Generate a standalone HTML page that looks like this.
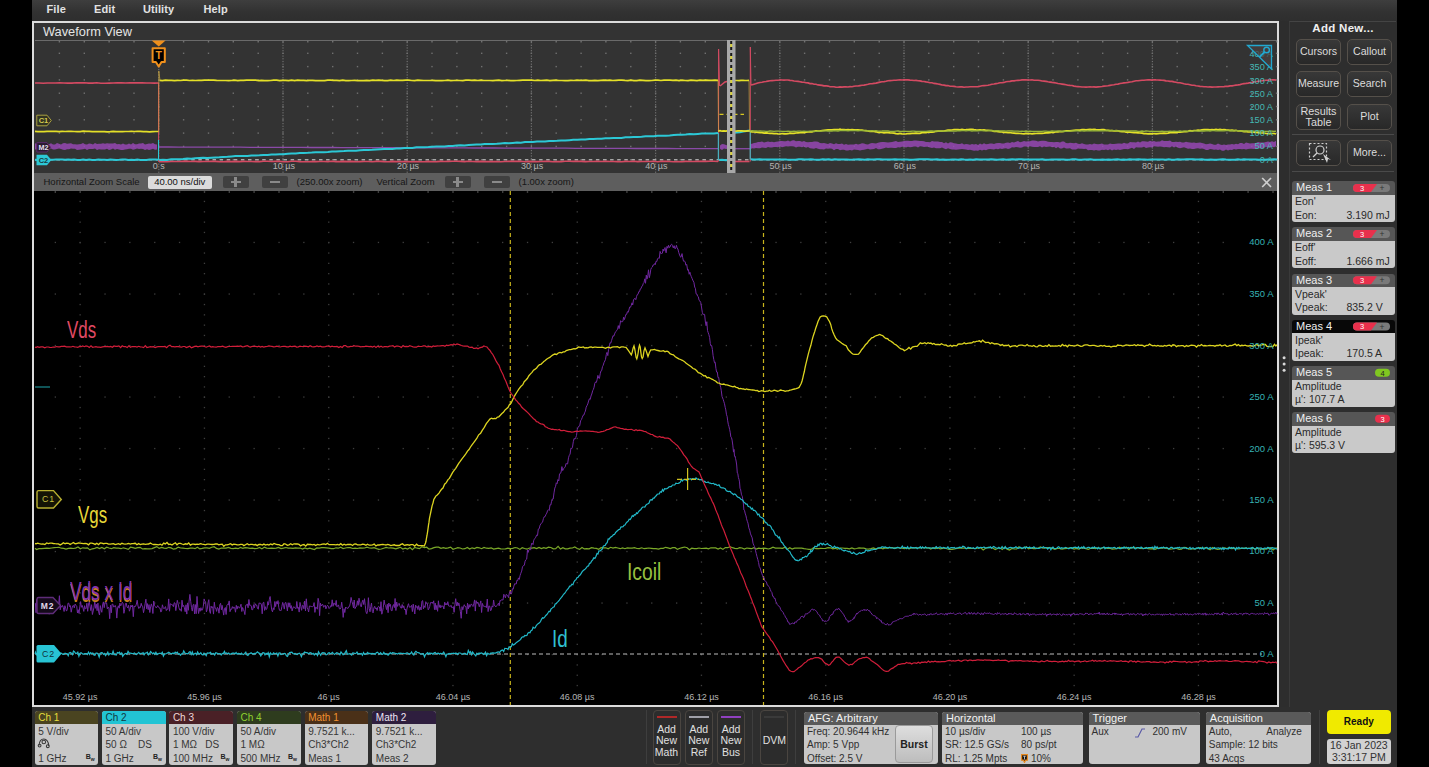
<!DOCTYPE html>
<html><head><meta charset="utf-8">
<style>
*{margin:0;padding:0;box-sizing:border-box}
html,body{width:1429px;height:767px;overflow:hidden;background:#000;font-family:"Liberation Sans",sans-serif;-webkit-font-smoothing:antialiased}
.a{position:absolute}
#app{position:absolute;left:32px;top:0;width:1365px;height:767px;background:#2e2e2e}
#menu{position:absolute;left:32px;top:0;width:1365px;height:21px;background:linear-gradient(#3e3e3e,#323232 55%,#2e2e2e)}
#menu span{position:absolute;top:3px;font-size:11px;font-weight:bold;color:#e2e2e2;letter-spacing:0.1px}
#frame{position:absolute;left:32px;top:20.5px;width:1247px;height:686.5px;border:2.6px solid #dcdcdc;background:#000}
#ovbg{position:absolute;left:34px;top:22.8px;width:1243px;height:150.2px;background:#333}
#zbar{position:absolute;left:34px;top:173px;width:1243px;height:18px;background:#5e5e5e}
.zt{position:absolute;top:176px;font-size:9.5px;color:#161616}
.zbtn{position:absolute;top:175.5px;width:26px;height:12.5px;background:#404040;border-radius:2px}
svg{position:absolute;left:0;top:0}
svg text{font-family:"Liberation Sans",sans-serif}
.lbl{position:absolute;font-size:9px;color:#b4b4b4;white-space:nowrap;transform:translateX(-50%)}
.ylbl{position:absolute;right:155.5px;font-size:9.5px;color:#36b2b4;white-space:nowrap;line-height:10px}
.ovl{position:absolute;right:156px;font-size:9.2px;color:#44b8b4;white-space:nowrap;line-height:10px}
.big{position:absolute;font-size:23.5px;transform-origin:0 0;transform:scaleX(0.72);white-space:nowrap;line-height:23px}
#rp{position:absolute;left:1289px;top:21px;width:107px;height:686px;background:#2e2e2e;border-left:1px solid #3a3a3a;border-top:1px solid #444}
.rbtn{position:absolute;width:45px;height:26px;border-radius:5px;border:1px solid #55504a;background:linear-gradient(#383838,#282828);color:#dcdcdc;font-size:10.6px;text-align:center;line-height:23px}
.meas{position:absolute;left:1292px;width:102.5px;height:41px}
.mh{position:absolute;left:0;top:0;width:100%;height:13.5px;background:#565656;border-radius:3px 3px 0 0;color:#f0f0f0;font-size:11px;line-height:13px;padding-left:4px}
.mb{position:absolute;left:0;top:13.5px;width:100%;height:27.5px;background:#c9c9c9;border-radius:0 0 3px 3px;color:#2a2a2a;font-size:10.5px;line-height:13.4px;padding-left:3px;padding-top:0.5px}
.mb .v{position:absolute;left:54.5px}
.badge{position:absolute;top:2.5px;height:8.5px;border-radius:4px}
.card{position:absolute;top:711px;height:53.5px;border-radius:3px;background:#c8c8c8;overflow:hidden}
.ch{position:absolute;left:0;top:0;width:100%;height:13px;font-size:10px;line-height:13px;padding-left:3.5px}
.cb{position:absolute;left:3.5px;top:13.5px;font-size:10px;line-height:13.6px;color:#363636;white-space:nowrap}
.bw{position:absolute;font-size:7px;font-weight:bold;color:#222}
.wbtn{position:absolute;top:709.5px;width:28px;height:55px;border-radius:4px;border:1px solid #4a4540;background:#2c2c2c;color:#e0e0e0;font-size:10.5px;line-height:11.5px;text-align:center;padding-top:13px}
.wbtn i{position:absolute;left:3px;right:3px;top:5px;height:2px}
.ic{position:absolute;top:712px;height:52px;border-radius:3px;background:#c8c8c8;overflow:hidden}
.ih{position:absolute;left:0;top:0;width:100%;height:13px;background:#5a5a5a;color:#f2f2f2;font-size:11px;line-height:13px;padding-left:4px}
.ib{position:absolute;top:13px;left:3px;font-size:10px;line-height:13.4px;color:#303030;white-space:nowrap}
</style></head><body>
<div id="app"></div>
<div id="menu"><span style="left:14.5px">File</span><span style="left:62px">Edit</span><span style="left:111px">Utility</span><span style="left:171.5px">Help</span></div>
<div id="frame"></div>
<div id="ovbg"></div>
<div class="a" style="left:43px;top:23.5px;font-size:12.8px;color:#e4e4e4">Waveform View</div>
<div class="a" style="left:34.5px;top:40px;width:1242px;height:1px;background:#6a6a6a"></div>
<div id="zbar"></div>
<div class="zt" style="left:43.5px">Horizontal Zoom Scale</div>
<div class="a" style="left:147.5px;top:176px;width:64.5px;height:12.5px;background:#dcdcdc;border-radius:2px;font-size:9.5px;color:#111;text-align:center;line-height:12.5px">40.00 ns/div</div>
<div class="zbtn" style="left:222.5px"></div><div class="a" style="left:230.5px;top:180.7px;width:10px;height:2.4px;background:#8a8a8a"></div><div class="a" style="left:234.3px;top:176.8px;width:2.4px;height:10px;background:#8a8a8a"></div>
<div class="zbtn" style="left:262px"></div><div class="a" style="left:270px;top:180.7px;width:10px;height:2.4px;background:#8a8a8a"></div>
<div class="zt" style="left:296.5px">(250.00x zoom)</div>
<div class="zt" style="left:376.5px">Vertical Zoom</div>
<div class="zbtn" style="left:444.5px"></div><div class="a" style="left:452.5px;top:180.7px;width:10px;height:2.4px;background:#8a8a8a"></div><div class="a" style="left:456.3px;top:176.8px;width:2.4px;height:10px;background:#8a8a8a"></div>
<div class="zbtn" style="left:484px"></div><div class="a" style="left:492px;top:180.7px;width:10px;height:2.4px;background:#8a8a8a"></div>
<div class="zt" style="left:518.5px">(1.00x zoom)</div>
<svg style="left:1258px;top:174px;position:absolute" width="18" height="16"><path d="M4.2 4 L13 13 M13 4 L4.2 13" stroke="#cfcfcf" stroke-width="1.7"/></svg>

<svg width="1429" height="767" viewBox="0 0 1429 767">
 <g fill="#707070"><rect x="158.2" y="42.0" width="1.2" height="1.2"/><rect x="158.2" y="44.7" width="1.2" height="1.2"/><rect x="158.2" y="47.4" width="1.2" height="1.2"/><rect x="158.2" y="50.1" width="1.2" height="1.2"/><rect x="158.2" y="52.8" width="1.2" height="1.2"/><rect x="158.2" y="55.5" width="1.2" height="1.2"/><rect x="158.2" y="58.2" width="1.2" height="1.2"/><rect x="158.2" y="60.9" width="1.2" height="1.2"/><rect x="158.2" y="63.6" width="1.2" height="1.2"/><rect x="158.2" y="66.3" width="1.2" height="1.2"/><rect x="158.2" y="69.0" width="1.2" height="1.2"/><rect x="158.2" y="71.7" width="1.2" height="1.2"/><rect x="158.2" y="74.4" width="1.2" height="1.2"/><rect x="158.2" y="77.1" width="1.2" height="1.2"/><rect x="158.2" y="79.8" width="1.2" height="1.2"/><rect x="158.2" y="82.5" width="1.2" height="1.2"/><rect x="158.2" y="85.2" width="1.2" height="1.2"/><rect x="158.2" y="87.9" width="1.2" height="1.2"/><rect x="158.2" y="90.6" width="1.2" height="1.2"/><rect x="158.2" y="93.3" width="1.2" height="1.2"/><rect x="158.2" y="96.0" width="1.2" height="1.2"/><rect x="158.2" y="98.7" width="1.2" height="1.2"/><rect x="158.2" y="101.4" width="1.2" height="1.2"/><rect x="158.2" y="104.1" width="1.2" height="1.2"/><rect x="158.2" y="106.8" width="1.2" height="1.2"/><rect x="158.2" y="109.5" width="1.2" height="1.2"/><rect x="158.2" y="112.2" width="1.2" height="1.2"/><rect x="158.2" y="114.9" width="1.2" height="1.2"/><rect x="158.2" y="117.6" width="1.2" height="1.2"/><rect x="158.2" y="120.3" width="1.2" height="1.2"/><rect x="158.2" y="123.0" width="1.2" height="1.2"/><rect x="158.2" y="125.7" width="1.2" height="1.2"/><rect x="158.2" y="128.4" width="1.2" height="1.2"/><rect x="158.2" y="131.1" width="1.2" height="1.2"/><rect x="158.2" y="133.8" width="1.2" height="1.2"/><rect x="158.2" y="136.5" width="1.2" height="1.2"/><rect x="158.2" y="139.2" width="1.2" height="1.2"/><rect x="158.2" y="141.9" width="1.2" height="1.2"/><rect x="158.2" y="144.6" width="1.2" height="1.2"/><rect x="158.2" y="147.3" width="1.2" height="1.2"/><rect x="158.2" y="150.0" width="1.2" height="1.2"/><rect x="158.2" y="152.7" width="1.2" height="1.2"/><rect x="158.2" y="155.4" width="1.2" height="1.2"/><rect x="158.2" y="158.1" width="1.2" height="1.2"/><rect x="158.2" y="160.8" width="1.2" height="1.2"/><rect x="158.2" y="163.5" width="1.2" height="1.2"/><rect x="158.2" y="166.2" width="1.2" height="1.2"/><rect x="158.2" y="168.9" width="1.2" height="1.2"/><rect x="158.2" y="171.6" width="1.2" height="1.2"/><rect x="282.4" y="42.0" width="1.2" height="1.2"/><rect x="282.4" y="44.7" width="1.2" height="1.2"/><rect x="282.4" y="47.4" width="1.2" height="1.2"/><rect x="282.4" y="50.1" width="1.2" height="1.2"/><rect x="282.4" y="52.8" width="1.2" height="1.2"/><rect x="282.4" y="55.5" width="1.2" height="1.2"/><rect x="282.4" y="58.2" width="1.2" height="1.2"/><rect x="282.4" y="60.9" width="1.2" height="1.2"/><rect x="282.4" y="63.6" width="1.2" height="1.2"/><rect x="282.4" y="66.3" width="1.2" height="1.2"/><rect x="282.4" y="69.0" width="1.2" height="1.2"/><rect x="282.4" y="71.7" width="1.2" height="1.2"/><rect x="282.4" y="74.4" width="1.2" height="1.2"/><rect x="282.4" y="77.1" width="1.2" height="1.2"/><rect x="282.4" y="79.8" width="1.2" height="1.2"/><rect x="282.4" y="82.5" width="1.2" height="1.2"/><rect x="282.4" y="85.2" width="1.2" height="1.2"/><rect x="282.4" y="87.9" width="1.2" height="1.2"/><rect x="282.4" y="90.6" width="1.2" height="1.2"/><rect x="282.4" y="93.3" width="1.2" height="1.2"/><rect x="282.4" y="96.0" width="1.2" height="1.2"/><rect x="282.4" y="98.7" width="1.2" height="1.2"/><rect x="282.4" y="101.4" width="1.2" height="1.2"/><rect x="282.4" y="104.1" width="1.2" height="1.2"/><rect x="282.4" y="106.8" width="1.2" height="1.2"/><rect x="282.4" y="109.5" width="1.2" height="1.2"/><rect x="282.4" y="112.2" width="1.2" height="1.2"/><rect x="282.4" y="114.9" width="1.2" height="1.2"/><rect x="282.4" y="117.6" width="1.2" height="1.2"/><rect x="282.4" y="120.3" width="1.2" height="1.2"/><rect x="282.4" y="123.0" width="1.2" height="1.2"/><rect x="282.4" y="125.7" width="1.2" height="1.2"/><rect x="282.4" y="128.4" width="1.2" height="1.2"/><rect x="282.4" y="131.1" width="1.2" height="1.2"/><rect x="282.4" y="133.8" width="1.2" height="1.2"/><rect x="282.4" y="136.5" width="1.2" height="1.2"/><rect x="282.4" y="139.2" width="1.2" height="1.2"/><rect x="282.4" y="141.9" width="1.2" height="1.2"/><rect x="282.4" y="144.6" width="1.2" height="1.2"/><rect x="282.4" y="147.3" width="1.2" height="1.2"/><rect x="282.4" y="150.0" width="1.2" height="1.2"/><rect x="282.4" y="152.7" width="1.2" height="1.2"/><rect x="282.4" y="155.4" width="1.2" height="1.2"/><rect x="282.4" y="158.1" width="1.2" height="1.2"/><rect x="282.4" y="160.8" width="1.2" height="1.2"/><rect x="282.4" y="163.5" width="1.2" height="1.2"/><rect x="282.4" y="166.2" width="1.2" height="1.2"/><rect x="282.4" y="168.9" width="1.2" height="1.2"/><rect x="282.4" y="171.6" width="1.2" height="1.2"/><rect x="406.6" y="42.0" width="1.2" height="1.2"/><rect x="406.6" y="44.7" width="1.2" height="1.2"/><rect x="406.6" y="47.4" width="1.2" height="1.2"/><rect x="406.6" y="50.1" width="1.2" height="1.2"/><rect x="406.6" y="52.8" width="1.2" height="1.2"/><rect x="406.6" y="55.5" width="1.2" height="1.2"/><rect x="406.6" y="58.2" width="1.2" height="1.2"/><rect x="406.6" y="60.9" width="1.2" height="1.2"/><rect x="406.6" y="63.6" width="1.2" height="1.2"/><rect x="406.6" y="66.3" width="1.2" height="1.2"/><rect x="406.6" y="69.0" width="1.2" height="1.2"/><rect x="406.6" y="71.7" width="1.2" height="1.2"/><rect x="406.6" y="74.4" width="1.2" height="1.2"/><rect x="406.6" y="77.1" width="1.2" height="1.2"/><rect x="406.6" y="79.8" width="1.2" height="1.2"/><rect x="406.6" y="82.5" width="1.2" height="1.2"/><rect x="406.6" y="85.2" width="1.2" height="1.2"/><rect x="406.6" y="87.9" width="1.2" height="1.2"/><rect x="406.6" y="90.6" width="1.2" height="1.2"/><rect x="406.6" y="93.3" width="1.2" height="1.2"/><rect x="406.6" y="96.0" width="1.2" height="1.2"/><rect x="406.6" y="98.7" width="1.2" height="1.2"/><rect x="406.6" y="101.4" width="1.2" height="1.2"/><rect x="406.6" y="104.1" width="1.2" height="1.2"/><rect x="406.6" y="106.8" width="1.2" height="1.2"/><rect x="406.6" y="109.5" width="1.2" height="1.2"/><rect x="406.6" y="112.2" width="1.2" height="1.2"/><rect x="406.6" y="114.9" width="1.2" height="1.2"/><rect x="406.6" y="117.6" width="1.2" height="1.2"/><rect x="406.6" y="120.3" width="1.2" height="1.2"/><rect x="406.6" y="123.0" width="1.2" height="1.2"/><rect x="406.6" y="125.7" width="1.2" height="1.2"/><rect x="406.6" y="128.4" width="1.2" height="1.2"/><rect x="406.6" y="131.1" width="1.2" height="1.2"/><rect x="406.6" y="133.8" width="1.2" height="1.2"/><rect x="406.6" y="136.5" width="1.2" height="1.2"/><rect x="406.6" y="139.2" width="1.2" height="1.2"/><rect x="406.6" y="141.9" width="1.2" height="1.2"/><rect x="406.6" y="144.6" width="1.2" height="1.2"/><rect x="406.6" y="147.3" width="1.2" height="1.2"/><rect x="406.6" y="150.0" width="1.2" height="1.2"/><rect x="406.6" y="152.7" width="1.2" height="1.2"/><rect x="406.6" y="155.4" width="1.2" height="1.2"/><rect x="406.6" y="158.1" width="1.2" height="1.2"/><rect x="406.6" y="160.8" width="1.2" height="1.2"/><rect x="406.6" y="163.5" width="1.2" height="1.2"/><rect x="406.6" y="166.2" width="1.2" height="1.2"/><rect x="406.6" y="168.9" width="1.2" height="1.2"/><rect x="406.6" y="171.6" width="1.2" height="1.2"/><rect x="530.8" y="42.0" width="1.2" height="1.2"/><rect x="530.8" y="44.7" width="1.2" height="1.2"/><rect x="530.8" y="47.4" width="1.2" height="1.2"/><rect x="530.8" y="50.1" width="1.2" height="1.2"/><rect x="530.8" y="52.8" width="1.2" height="1.2"/><rect x="530.8" y="55.5" width="1.2" height="1.2"/><rect x="530.8" y="58.2" width="1.2" height="1.2"/><rect x="530.8" y="60.9" width="1.2" height="1.2"/><rect x="530.8" y="63.6" width="1.2" height="1.2"/><rect x="530.8" y="66.3" width="1.2" height="1.2"/><rect x="530.8" y="69.0" width="1.2" height="1.2"/><rect x="530.8" y="71.7" width="1.2" height="1.2"/><rect x="530.8" y="74.4" width="1.2" height="1.2"/><rect x="530.8" y="77.1" width="1.2" height="1.2"/><rect x="530.8" y="79.8" width="1.2" height="1.2"/><rect x="530.8" y="82.5" width="1.2" height="1.2"/><rect x="530.8" y="85.2" width="1.2" height="1.2"/><rect x="530.8" y="87.9" width="1.2" height="1.2"/><rect x="530.8" y="90.6" width="1.2" height="1.2"/><rect x="530.8" y="93.3" width="1.2" height="1.2"/><rect x="530.8" y="96.0" width="1.2" height="1.2"/><rect x="530.8" y="98.7" width="1.2" height="1.2"/><rect x="530.8" y="101.4" width="1.2" height="1.2"/><rect x="530.8" y="104.1" width="1.2" height="1.2"/><rect x="530.8" y="106.8" width="1.2" height="1.2"/><rect x="530.8" y="109.5" width="1.2" height="1.2"/><rect x="530.8" y="112.2" width="1.2" height="1.2"/><rect x="530.8" y="114.9" width="1.2" height="1.2"/><rect x="530.8" y="117.6" width="1.2" height="1.2"/><rect x="530.8" y="120.3" width="1.2" height="1.2"/><rect x="530.8" y="123.0" width="1.2" height="1.2"/><rect x="530.8" y="125.7" width="1.2" height="1.2"/><rect x="530.8" y="128.4" width="1.2" height="1.2"/><rect x="530.8" y="131.1" width="1.2" height="1.2"/><rect x="530.8" y="133.8" width="1.2" height="1.2"/><rect x="530.8" y="136.5" width="1.2" height="1.2"/><rect x="530.8" y="139.2" width="1.2" height="1.2"/><rect x="530.8" y="141.9" width="1.2" height="1.2"/><rect x="530.8" y="144.6" width="1.2" height="1.2"/><rect x="530.8" y="147.3" width="1.2" height="1.2"/><rect x="530.8" y="150.0" width="1.2" height="1.2"/><rect x="530.8" y="152.7" width="1.2" height="1.2"/><rect x="530.8" y="155.4" width="1.2" height="1.2"/><rect x="530.8" y="158.1" width="1.2" height="1.2"/><rect x="530.8" y="160.8" width="1.2" height="1.2"/><rect x="530.8" y="163.5" width="1.2" height="1.2"/><rect x="530.8" y="166.2" width="1.2" height="1.2"/><rect x="530.8" y="168.9" width="1.2" height="1.2"/><rect x="530.8" y="171.6" width="1.2" height="1.2"/><rect x="655.0" y="42.0" width="1.2" height="1.2"/><rect x="655.0" y="44.7" width="1.2" height="1.2"/><rect x="655.0" y="47.4" width="1.2" height="1.2"/><rect x="655.0" y="50.1" width="1.2" height="1.2"/><rect x="655.0" y="52.8" width="1.2" height="1.2"/><rect x="655.0" y="55.5" width="1.2" height="1.2"/><rect x="655.0" y="58.2" width="1.2" height="1.2"/><rect x="655.0" y="60.9" width="1.2" height="1.2"/><rect x="655.0" y="63.6" width="1.2" height="1.2"/><rect x="655.0" y="66.3" width="1.2" height="1.2"/><rect x="655.0" y="69.0" width="1.2" height="1.2"/><rect x="655.0" y="71.7" width="1.2" height="1.2"/><rect x="655.0" y="74.4" width="1.2" height="1.2"/><rect x="655.0" y="77.1" width="1.2" height="1.2"/><rect x="655.0" y="79.8" width="1.2" height="1.2"/><rect x="655.0" y="82.5" width="1.2" height="1.2"/><rect x="655.0" y="85.2" width="1.2" height="1.2"/><rect x="655.0" y="87.9" width="1.2" height="1.2"/><rect x="655.0" y="90.6" width="1.2" height="1.2"/><rect x="655.0" y="93.3" width="1.2" height="1.2"/><rect x="655.0" y="96.0" width="1.2" height="1.2"/><rect x="655.0" y="98.7" width="1.2" height="1.2"/><rect x="655.0" y="101.4" width="1.2" height="1.2"/><rect x="655.0" y="104.1" width="1.2" height="1.2"/><rect x="655.0" y="106.8" width="1.2" height="1.2"/><rect x="655.0" y="109.5" width="1.2" height="1.2"/><rect x="655.0" y="112.2" width="1.2" height="1.2"/><rect x="655.0" y="114.9" width="1.2" height="1.2"/><rect x="655.0" y="117.6" width="1.2" height="1.2"/><rect x="655.0" y="120.3" width="1.2" height="1.2"/><rect x="655.0" y="123.0" width="1.2" height="1.2"/><rect x="655.0" y="125.7" width="1.2" height="1.2"/><rect x="655.0" y="128.4" width="1.2" height="1.2"/><rect x="655.0" y="131.1" width="1.2" height="1.2"/><rect x="655.0" y="133.8" width="1.2" height="1.2"/><rect x="655.0" y="136.5" width="1.2" height="1.2"/><rect x="655.0" y="139.2" width="1.2" height="1.2"/><rect x="655.0" y="141.9" width="1.2" height="1.2"/><rect x="655.0" y="144.6" width="1.2" height="1.2"/><rect x="655.0" y="147.3" width="1.2" height="1.2"/><rect x="655.0" y="150.0" width="1.2" height="1.2"/><rect x="655.0" y="152.7" width="1.2" height="1.2"/><rect x="655.0" y="155.4" width="1.2" height="1.2"/><rect x="655.0" y="158.1" width="1.2" height="1.2"/><rect x="655.0" y="160.8" width="1.2" height="1.2"/><rect x="655.0" y="163.5" width="1.2" height="1.2"/><rect x="655.0" y="166.2" width="1.2" height="1.2"/><rect x="655.0" y="168.9" width="1.2" height="1.2"/><rect x="655.0" y="171.6" width="1.2" height="1.2"/><rect x="779.2" y="42.0" width="1.2" height="1.2"/><rect x="779.2" y="44.7" width="1.2" height="1.2"/><rect x="779.2" y="47.4" width="1.2" height="1.2"/><rect x="779.2" y="50.1" width="1.2" height="1.2"/><rect x="779.2" y="52.8" width="1.2" height="1.2"/><rect x="779.2" y="55.5" width="1.2" height="1.2"/><rect x="779.2" y="58.2" width="1.2" height="1.2"/><rect x="779.2" y="60.9" width="1.2" height="1.2"/><rect x="779.2" y="63.6" width="1.2" height="1.2"/><rect x="779.2" y="66.3" width="1.2" height="1.2"/><rect x="779.2" y="69.0" width="1.2" height="1.2"/><rect x="779.2" y="71.7" width="1.2" height="1.2"/><rect x="779.2" y="74.4" width="1.2" height="1.2"/><rect x="779.2" y="77.1" width="1.2" height="1.2"/><rect x="779.2" y="79.8" width="1.2" height="1.2"/><rect x="779.2" y="82.5" width="1.2" height="1.2"/><rect x="779.2" y="85.2" width="1.2" height="1.2"/><rect x="779.2" y="87.9" width="1.2" height="1.2"/><rect x="779.2" y="90.6" width="1.2" height="1.2"/><rect x="779.2" y="93.3" width="1.2" height="1.2"/><rect x="779.2" y="96.0" width="1.2" height="1.2"/><rect x="779.2" y="98.7" width="1.2" height="1.2"/><rect x="779.2" y="101.4" width="1.2" height="1.2"/><rect x="779.2" y="104.1" width="1.2" height="1.2"/><rect x="779.2" y="106.8" width="1.2" height="1.2"/><rect x="779.2" y="109.5" width="1.2" height="1.2"/><rect x="779.2" y="112.2" width="1.2" height="1.2"/><rect x="779.2" y="114.9" width="1.2" height="1.2"/><rect x="779.2" y="117.6" width="1.2" height="1.2"/><rect x="779.2" y="120.3" width="1.2" height="1.2"/><rect x="779.2" y="123.0" width="1.2" height="1.2"/><rect x="779.2" y="125.7" width="1.2" height="1.2"/><rect x="779.2" y="128.4" width="1.2" height="1.2"/><rect x="779.2" y="131.1" width="1.2" height="1.2"/><rect x="779.2" y="133.8" width="1.2" height="1.2"/><rect x="779.2" y="136.5" width="1.2" height="1.2"/><rect x="779.2" y="139.2" width="1.2" height="1.2"/><rect x="779.2" y="141.9" width="1.2" height="1.2"/><rect x="779.2" y="144.6" width="1.2" height="1.2"/><rect x="779.2" y="147.3" width="1.2" height="1.2"/><rect x="779.2" y="150.0" width="1.2" height="1.2"/><rect x="779.2" y="152.7" width="1.2" height="1.2"/><rect x="779.2" y="155.4" width="1.2" height="1.2"/><rect x="779.2" y="158.1" width="1.2" height="1.2"/><rect x="779.2" y="160.8" width="1.2" height="1.2"/><rect x="779.2" y="163.5" width="1.2" height="1.2"/><rect x="779.2" y="166.2" width="1.2" height="1.2"/><rect x="779.2" y="168.9" width="1.2" height="1.2"/><rect x="779.2" y="171.6" width="1.2" height="1.2"/><rect x="903.4" y="42.0" width="1.2" height="1.2"/><rect x="903.4" y="44.7" width="1.2" height="1.2"/><rect x="903.4" y="47.4" width="1.2" height="1.2"/><rect x="903.4" y="50.1" width="1.2" height="1.2"/><rect x="903.4" y="52.8" width="1.2" height="1.2"/><rect x="903.4" y="55.5" width="1.2" height="1.2"/><rect x="903.4" y="58.2" width="1.2" height="1.2"/><rect x="903.4" y="60.9" width="1.2" height="1.2"/><rect x="903.4" y="63.6" width="1.2" height="1.2"/><rect x="903.4" y="66.3" width="1.2" height="1.2"/><rect x="903.4" y="69.0" width="1.2" height="1.2"/><rect x="903.4" y="71.7" width="1.2" height="1.2"/><rect x="903.4" y="74.4" width="1.2" height="1.2"/><rect x="903.4" y="77.1" width="1.2" height="1.2"/><rect x="903.4" y="79.8" width="1.2" height="1.2"/><rect x="903.4" y="82.5" width="1.2" height="1.2"/><rect x="903.4" y="85.2" width="1.2" height="1.2"/><rect x="903.4" y="87.9" width="1.2" height="1.2"/><rect x="903.4" y="90.6" width="1.2" height="1.2"/><rect x="903.4" y="93.3" width="1.2" height="1.2"/><rect x="903.4" y="96.0" width="1.2" height="1.2"/><rect x="903.4" y="98.7" width="1.2" height="1.2"/><rect x="903.4" y="101.4" width="1.2" height="1.2"/><rect x="903.4" y="104.1" width="1.2" height="1.2"/><rect x="903.4" y="106.8" width="1.2" height="1.2"/><rect x="903.4" y="109.5" width="1.2" height="1.2"/><rect x="903.4" y="112.2" width="1.2" height="1.2"/><rect x="903.4" y="114.9" width="1.2" height="1.2"/><rect x="903.4" y="117.6" width="1.2" height="1.2"/><rect x="903.4" y="120.3" width="1.2" height="1.2"/><rect x="903.4" y="123.0" width="1.2" height="1.2"/><rect x="903.4" y="125.7" width="1.2" height="1.2"/><rect x="903.4" y="128.4" width="1.2" height="1.2"/><rect x="903.4" y="131.1" width="1.2" height="1.2"/><rect x="903.4" y="133.8" width="1.2" height="1.2"/><rect x="903.4" y="136.5" width="1.2" height="1.2"/><rect x="903.4" y="139.2" width="1.2" height="1.2"/><rect x="903.4" y="141.9" width="1.2" height="1.2"/><rect x="903.4" y="144.6" width="1.2" height="1.2"/><rect x="903.4" y="147.3" width="1.2" height="1.2"/><rect x="903.4" y="150.0" width="1.2" height="1.2"/><rect x="903.4" y="152.7" width="1.2" height="1.2"/><rect x="903.4" y="155.4" width="1.2" height="1.2"/><rect x="903.4" y="158.1" width="1.2" height="1.2"/><rect x="903.4" y="160.8" width="1.2" height="1.2"/><rect x="903.4" y="163.5" width="1.2" height="1.2"/><rect x="903.4" y="166.2" width="1.2" height="1.2"/><rect x="903.4" y="168.9" width="1.2" height="1.2"/><rect x="903.4" y="171.6" width="1.2" height="1.2"/><rect x="1027.6" y="42.0" width="1.2" height="1.2"/><rect x="1027.6" y="44.7" width="1.2" height="1.2"/><rect x="1027.6" y="47.4" width="1.2" height="1.2"/><rect x="1027.6" y="50.1" width="1.2" height="1.2"/><rect x="1027.6" y="52.8" width="1.2" height="1.2"/><rect x="1027.6" y="55.5" width="1.2" height="1.2"/><rect x="1027.6" y="58.2" width="1.2" height="1.2"/><rect x="1027.6" y="60.9" width="1.2" height="1.2"/><rect x="1027.6" y="63.6" width="1.2" height="1.2"/><rect x="1027.6" y="66.3" width="1.2" height="1.2"/><rect x="1027.6" y="69.0" width="1.2" height="1.2"/><rect x="1027.6" y="71.7" width="1.2" height="1.2"/><rect x="1027.6" y="74.4" width="1.2" height="1.2"/><rect x="1027.6" y="77.1" width="1.2" height="1.2"/><rect x="1027.6" y="79.8" width="1.2" height="1.2"/><rect x="1027.6" y="82.5" width="1.2" height="1.2"/><rect x="1027.6" y="85.2" width="1.2" height="1.2"/><rect x="1027.6" y="87.9" width="1.2" height="1.2"/><rect x="1027.6" y="90.6" width="1.2" height="1.2"/><rect x="1027.6" y="93.3" width="1.2" height="1.2"/><rect x="1027.6" y="96.0" width="1.2" height="1.2"/><rect x="1027.6" y="98.7" width="1.2" height="1.2"/><rect x="1027.6" y="101.4" width="1.2" height="1.2"/><rect x="1027.6" y="104.1" width="1.2" height="1.2"/><rect x="1027.6" y="106.8" width="1.2" height="1.2"/><rect x="1027.6" y="109.5" width="1.2" height="1.2"/><rect x="1027.6" y="112.2" width="1.2" height="1.2"/><rect x="1027.6" y="114.9" width="1.2" height="1.2"/><rect x="1027.6" y="117.6" width="1.2" height="1.2"/><rect x="1027.6" y="120.3" width="1.2" height="1.2"/><rect x="1027.6" y="123.0" width="1.2" height="1.2"/><rect x="1027.6" y="125.7" width="1.2" height="1.2"/><rect x="1027.6" y="128.4" width="1.2" height="1.2"/><rect x="1027.6" y="131.1" width="1.2" height="1.2"/><rect x="1027.6" y="133.8" width="1.2" height="1.2"/><rect x="1027.6" y="136.5" width="1.2" height="1.2"/><rect x="1027.6" y="139.2" width="1.2" height="1.2"/><rect x="1027.6" y="141.9" width="1.2" height="1.2"/><rect x="1027.6" y="144.6" width="1.2" height="1.2"/><rect x="1027.6" y="147.3" width="1.2" height="1.2"/><rect x="1027.6" y="150.0" width="1.2" height="1.2"/><rect x="1027.6" y="152.7" width="1.2" height="1.2"/><rect x="1027.6" y="155.4" width="1.2" height="1.2"/><rect x="1027.6" y="158.1" width="1.2" height="1.2"/><rect x="1027.6" y="160.8" width="1.2" height="1.2"/><rect x="1027.6" y="163.5" width="1.2" height="1.2"/><rect x="1027.6" y="166.2" width="1.2" height="1.2"/><rect x="1027.6" y="168.9" width="1.2" height="1.2"/><rect x="1027.6" y="171.6" width="1.2" height="1.2"/><rect x="1151.8" y="42.0" width="1.2" height="1.2"/><rect x="1151.8" y="44.7" width="1.2" height="1.2"/><rect x="1151.8" y="47.4" width="1.2" height="1.2"/><rect x="1151.8" y="50.1" width="1.2" height="1.2"/><rect x="1151.8" y="52.8" width="1.2" height="1.2"/><rect x="1151.8" y="55.5" width="1.2" height="1.2"/><rect x="1151.8" y="58.2" width="1.2" height="1.2"/><rect x="1151.8" y="60.9" width="1.2" height="1.2"/><rect x="1151.8" y="63.6" width="1.2" height="1.2"/><rect x="1151.8" y="66.3" width="1.2" height="1.2"/><rect x="1151.8" y="69.0" width="1.2" height="1.2"/><rect x="1151.8" y="71.7" width="1.2" height="1.2"/><rect x="1151.8" y="74.4" width="1.2" height="1.2"/><rect x="1151.8" y="77.1" width="1.2" height="1.2"/><rect x="1151.8" y="79.8" width="1.2" height="1.2"/><rect x="1151.8" y="82.5" width="1.2" height="1.2"/><rect x="1151.8" y="85.2" width="1.2" height="1.2"/><rect x="1151.8" y="87.9" width="1.2" height="1.2"/><rect x="1151.8" y="90.6" width="1.2" height="1.2"/><rect x="1151.8" y="93.3" width="1.2" height="1.2"/><rect x="1151.8" y="96.0" width="1.2" height="1.2"/><rect x="1151.8" y="98.7" width="1.2" height="1.2"/><rect x="1151.8" y="101.4" width="1.2" height="1.2"/><rect x="1151.8" y="104.1" width="1.2" height="1.2"/><rect x="1151.8" y="106.8" width="1.2" height="1.2"/><rect x="1151.8" y="109.5" width="1.2" height="1.2"/><rect x="1151.8" y="112.2" width="1.2" height="1.2"/><rect x="1151.8" y="114.9" width="1.2" height="1.2"/><rect x="1151.8" y="117.6" width="1.2" height="1.2"/><rect x="1151.8" y="120.3" width="1.2" height="1.2"/><rect x="1151.8" y="123.0" width="1.2" height="1.2"/><rect x="1151.8" y="125.7" width="1.2" height="1.2"/><rect x="1151.8" y="128.4" width="1.2" height="1.2"/><rect x="1151.8" y="131.1" width="1.2" height="1.2"/><rect x="1151.8" y="133.8" width="1.2" height="1.2"/><rect x="1151.8" y="136.5" width="1.2" height="1.2"/><rect x="1151.8" y="139.2" width="1.2" height="1.2"/><rect x="1151.8" y="141.9" width="1.2" height="1.2"/><rect x="1151.8" y="144.6" width="1.2" height="1.2"/><rect x="1151.8" y="147.3" width="1.2" height="1.2"/><rect x="1151.8" y="150.0" width="1.2" height="1.2"/><rect x="1151.8" y="152.7" width="1.2" height="1.2"/><rect x="1151.8" y="155.4" width="1.2" height="1.2"/><rect x="1151.8" y="158.1" width="1.2" height="1.2"/><rect x="1151.8" y="160.8" width="1.2" height="1.2"/><rect x="1151.8" y="163.5" width="1.2" height="1.2"/><rect x="1151.8" y="166.2" width="1.2" height="1.2"/><rect x="1151.8" y="168.9" width="1.2" height="1.2"/><rect x="1151.8" y="171.6" width="1.2" height="1.2"/><rect x="58.7" y="52.6" width="1.4" height="1.4"/><rect x="83.6" y="52.6" width="1.4" height="1.4"/><rect x="108.4" y="52.6" width="1.4" height="1.4"/><rect x="133.3" y="52.6" width="1.4" height="1.4"/><rect x="158.1" y="52.6" width="1.4" height="1.4"/><rect x="182.9" y="52.6" width="1.4" height="1.4"/><rect x="207.8" y="52.6" width="1.4" height="1.4"/><rect x="232.6" y="52.6" width="1.4" height="1.4"/><rect x="257.5" y="52.6" width="1.4" height="1.4"/><rect x="282.3" y="52.6" width="1.4" height="1.4"/><rect x="307.1" y="52.6" width="1.4" height="1.4"/><rect x="332.0" y="52.6" width="1.4" height="1.4"/><rect x="356.8" y="52.6" width="1.4" height="1.4"/><rect x="381.7" y="52.6" width="1.4" height="1.4"/><rect x="406.5" y="52.6" width="1.4" height="1.4"/><rect x="431.3" y="52.6" width="1.4" height="1.4"/><rect x="456.2" y="52.6" width="1.4" height="1.4"/><rect x="481.0" y="52.6" width="1.4" height="1.4"/><rect x="505.9" y="52.6" width="1.4" height="1.4"/><rect x="530.7" y="52.6" width="1.4" height="1.4"/><rect x="555.5" y="52.6" width="1.4" height="1.4"/><rect x="580.4" y="52.6" width="1.4" height="1.4"/><rect x="605.2" y="52.6" width="1.4" height="1.4"/><rect x="630.1" y="52.6" width="1.4" height="1.4"/><rect x="654.9" y="52.6" width="1.4" height="1.4"/><rect x="679.7" y="52.6" width="1.4" height="1.4"/><rect x="704.6" y="52.6" width="1.4" height="1.4"/><rect x="729.4" y="52.6" width="1.4" height="1.4"/><rect x="754.3" y="52.6" width="1.4" height="1.4"/><rect x="779.1" y="52.6" width="1.4" height="1.4"/><rect x="803.9" y="52.6" width="1.4" height="1.4"/><rect x="828.8" y="52.6" width="1.4" height="1.4"/><rect x="853.6" y="52.6" width="1.4" height="1.4"/><rect x="878.5" y="52.6" width="1.4" height="1.4"/><rect x="903.3" y="52.6" width="1.4" height="1.4"/><rect x="928.1" y="52.6" width="1.4" height="1.4"/><rect x="953.0" y="52.6" width="1.4" height="1.4"/><rect x="977.8" y="52.6" width="1.4" height="1.4"/><rect x="1002.7" y="52.6" width="1.4" height="1.4"/><rect x="1027.5" y="52.6" width="1.4" height="1.4"/><rect x="1052.3" y="52.6" width="1.4" height="1.4"/><rect x="1077.2" y="52.6" width="1.4" height="1.4"/><rect x="1102.0" y="52.6" width="1.4" height="1.4"/><rect x="1126.9" y="52.6" width="1.4" height="1.4"/><rect x="1151.7" y="52.6" width="1.4" height="1.4"/><rect x="1176.5" y="52.6" width="1.4" height="1.4"/><rect x="1201.4" y="52.6" width="1.4" height="1.4"/><rect x="1226.2" y="52.6" width="1.4" height="1.4"/><rect x="1251.1" y="52.6" width="1.4" height="1.4"/><rect x="1275.9" y="52.6" width="1.4" height="1.4"/><rect x="58.7" y="65.9" width="1.4" height="1.4"/><rect x="83.6" y="65.9" width="1.4" height="1.4"/><rect x="108.4" y="65.9" width="1.4" height="1.4"/><rect x="133.3" y="65.9" width="1.4" height="1.4"/><rect x="158.1" y="65.9" width="1.4" height="1.4"/><rect x="182.9" y="65.9" width="1.4" height="1.4"/><rect x="207.8" y="65.9" width="1.4" height="1.4"/><rect x="232.6" y="65.9" width="1.4" height="1.4"/><rect x="257.5" y="65.9" width="1.4" height="1.4"/><rect x="282.3" y="65.9" width="1.4" height="1.4"/><rect x="307.1" y="65.9" width="1.4" height="1.4"/><rect x="332.0" y="65.9" width="1.4" height="1.4"/><rect x="356.8" y="65.9" width="1.4" height="1.4"/><rect x="381.7" y="65.9" width="1.4" height="1.4"/><rect x="406.5" y="65.9" width="1.4" height="1.4"/><rect x="431.3" y="65.9" width="1.4" height="1.4"/><rect x="456.2" y="65.9" width="1.4" height="1.4"/><rect x="481.0" y="65.9" width="1.4" height="1.4"/><rect x="505.9" y="65.9" width="1.4" height="1.4"/><rect x="530.7" y="65.9" width="1.4" height="1.4"/><rect x="555.5" y="65.9" width="1.4" height="1.4"/><rect x="580.4" y="65.9" width="1.4" height="1.4"/><rect x="605.2" y="65.9" width="1.4" height="1.4"/><rect x="630.1" y="65.9" width="1.4" height="1.4"/><rect x="654.9" y="65.9" width="1.4" height="1.4"/><rect x="679.7" y="65.9" width="1.4" height="1.4"/><rect x="704.6" y="65.9" width="1.4" height="1.4"/><rect x="729.4" y="65.9" width="1.4" height="1.4"/><rect x="754.3" y="65.9" width="1.4" height="1.4"/><rect x="779.1" y="65.9" width="1.4" height="1.4"/><rect x="803.9" y="65.9" width="1.4" height="1.4"/><rect x="828.8" y="65.9" width="1.4" height="1.4"/><rect x="853.6" y="65.9" width="1.4" height="1.4"/><rect x="878.5" y="65.9" width="1.4" height="1.4"/><rect x="903.3" y="65.9" width="1.4" height="1.4"/><rect x="928.1" y="65.9" width="1.4" height="1.4"/><rect x="953.0" y="65.9" width="1.4" height="1.4"/><rect x="977.8" y="65.9" width="1.4" height="1.4"/><rect x="1002.7" y="65.9" width="1.4" height="1.4"/><rect x="1027.5" y="65.9" width="1.4" height="1.4"/><rect x="1052.3" y="65.9" width="1.4" height="1.4"/><rect x="1077.2" y="65.9" width="1.4" height="1.4"/><rect x="1102.0" y="65.9" width="1.4" height="1.4"/><rect x="1126.9" y="65.9" width="1.4" height="1.4"/><rect x="1151.7" y="65.9" width="1.4" height="1.4"/><rect x="1176.5" y="65.9" width="1.4" height="1.4"/><rect x="1201.4" y="65.9" width="1.4" height="1.4"/><rect x="1226.2" y="65.9" width="1.4" height="1.4"/><rect x="1251.1" y="65.9" width="1.4" height="1.4"/><rect x="1275.9" y="65.9" width="1.4" height="1.4"/><rect x="58.7" y="79.2" width="1.4" height="1.4"/><rect x="83.6" y="79.2" width="1.4" height="1.4"/><rect x="108.4" y="79.2" width="1.4" height="1.4"/><rect x="133.3" y="79.2" width="1.4" height="1.4"/><rect x="158.1" y="79.2" width="1.4" height="1.4"/><rect x="182.9" y="79.2" width="1.4" height="1.4"/><rect x="207.8" y="79.2" width="1.4" height="1.4"/><rect x="232.6" y="79.2" width="1.4" height="1.4"/><rect x="257.5" y="79.2" width="1.4" height="1.4"/><rect x="282.3" y="79.2" width="1.4" height="1.4"/><rect x="307.1" y="79.2" width="1.4" height="1.4"/><rect x="332.0" y="79.2" width="1.4" height="1.4"/><rect x="356.8" y="79.2" width="1.4" height="1.4"/><rect x="381.7" y="79.2" width="1.4" height="1.4"/><rect x="406.5" y="79.2" width="1.4" height="1.4"/><rect x="431.3" y="79.2" width="1.4" height="1.4"/><rect x="456.2" y="79.2" width="1.4" height="1.4"/><rect x="481.0" y="79.2" width="1.4" height="1.4"/><rect x="505.9" y="79.2" width="1.4" height="1.4"/><rect x="530.7" y="79.2" width="1.4" height="1.4"/><rect x="555.5" y="79.2" width="1.4" height="1.4"/><rect x="580.4" y="79.2" width="1.4" height="1.4"/><rect x="605.2" y="79.2" width="1.4" height="1.4"/><rect x="630.1" y="79.2" width="1.4" height="1.4"/><rect x="654.9" y="79.2" width="1.4" height="1.4"/><rect x="679.7" y="79.2" width="1.4" height="1.4"/><rect x="704.6" y="79.2" width="1.4" height="1.4"/><rect x="729.4" y="79.2" width="1.4" height="1.4"/><rect x="754.3" y="79.2" width="1.4" height="1.4"/><rect x="779.1" y="79.2" width="1.4" height="1.4"/><rect x="803.9" y="79.2" width="1.4" height="1.4"/><rect x="828.8" y="79.2" width="1.4" height="1.4"/><rect x="853.6" y="79.2" width="1.4" height="1.4"/><rect x="878.5" y="79.2" width="1.4" height="1.4"/><rect x="903.3" y="79.2" width="1.4" height="1.4"/><rect x="928.1" y="79.2" width="1.4" height="1.4"/><rect x="953.0" y="79.2" width="1.4" height="1.4"/><rect x="977.8" y="79.2" width="1.4" height="1.4"/><rect x="1002.7" y="79.2" width="1.4" height="1.4"/><rect x="1027.5" y="79.2" width="1.4" height="1.4"/><rect x="1052.3" y="79.2" width="1.4" height="1.4"/><rect x="1077.2" y="79.2" width="1.4" height="1.4"/><rect x="1102.0" y="79.2" width="1.4" height="1.4"/><rect x="1126.9" y="79.2" width="1.4" height="1.4"/><rect x="1151.7" y="79.2" width="1.4" height="1.4"/><rect x="1176.5" y="79.2" width="1.4" height="1.4"/><rect x="1201.4" y="79.2" width="1.4" height="1.4"/><rect x="1226.2" y="79.2" width="1.4" height="1.4"/><rect x="1251.1" y="79.2" width="1.4" height="1.4"/><rect x="1275.9" y="79.2" width="1.4" height="1.4"/><rect x="58.7" y="92.5" width="1.4" height="1.4"/><rect x="83.6" y="92.5" width="1.4" height="1.4"/><rect x="108.4" y="92.5" width="1.4" height="1.4"/><rect x="133.3" y="92.5" width="1.4" height="1.4"/><rect x="158.1" y="92.5" width="1.4" height="1.4"/><rect x="182.9" y="92.5" width="1.4" height="1.4"/><rect x="207.8" y="92.5" width="1.4" height="1.4"/><rect x="232.6" y="92.5" width="1.4" height="1.4"/><rect x="257.5" y="92.5" width="1.4" height="1.4"/><rect x="282.3" y="92.5" width="1.4" height="1.4"/><rect x="307.1" y="92.5" width="1.4" height="1.4"/><rect x="332.0" y="92.5" width="1.4" height="1.4"/><rect x="356.8" y="92.5" width="1.4" height="1.4"/><rect x="381.7" y="92.5" width="1.4" height="1.4"/><rect x="406.5" y="92.5" width="1.4" height="1.4"/><rect x="431.3" y="92.5" width="1.4" height="1.4"/><rect x="456.2" y="92.5" width="1.4" height="1.4"/><rect x="481.0" y="92.5" width="1.4" height="1.4"/><rect x="505.9" y="92.5" width="1.4" height="1.4"/><rect x="530.7" y="92.5" width="1.4" height="1.4"/><rect x="555.5" y="92.5" width="1.4" height="1.4"/><rect x="580.4" y="92.5" width="1.4" height="1.4"/><rect x="605.2" y="92.5" width="1.4" height="1.4"/><rect x="630.1" y="92.5" width="1.4" height="1.4"/><rect x="654.9" y="92.5" width="1.4" height="1.4"/><rect x="679.7" y="92.5" width="1.4" height="1.4"/><rect x="704.6" y="92.5" width="1.4" height="1.4"/><rect x="729.4" y="92.5" width="1.4" height="1.4"/><rect x="754.3" y="92.5" width="1.4" height="1.4"/><rect x="779.1" y="92.5" width="1.4" height="1.4"/><rect x="803.9" y="92.5" width="1.4" height="1.4"/><rect x="828.8" y="92.5" width="1.4" height="1.4"/><rect x="853.6" y="92.5" width="1.4" height="1.4"/><rect x="878.5" y="92.5" width="1.4" height="1.4"/><rect x="903.3" y="92.5" width="1.4" height="1.4"/><rect x="928.1" y="92.5" width="1.4" height="1.4"/><rect x="953.0" y="92.5" width="1.4" height="1.4"/><rect x="977.8" y="92.5" width="1.4" height="1.4"/><rect x="1002.7" y="92.5" width="1.4" height="1.4"/><rect x="1027.5" y="92.5" width="1.4" height="1.4"/><rect x="1052.3" y="92.5" width="1.4" height="1.4"/><rect x="1077.2" y="92.5" width="1.4" height="1.4"/><rect x="1102.0" y="92.5" width="1.4" height="1.4"/><rect x="1126.9" y="92.5" width="1.4" height="1.4"/><rect x="1151.7" y="92.5" width="1.4" height="1.4"/><rect x="1176.5" y="92.5" width="1.4" height="1.4"/><rect x="1201.4" y="92.5" width="1.4" height="1.4"/><rect x="1226.2" y="92.5" width="1.4" height="1.4"/><rect x="1251.1" y="92.5" width="1.4" height="1.4"/><rect x="1275.9" y="92.5" width="1.4" height="1.4"/><rect x="58.7" y="105.8" width="1.4" height="1.4"/><rect x="83.6" y="105.8" width="1.4" height="1.4"/><rect x="108.4" y="105.8" width="1.4" height="1.4"/><rect x="133.3" y="105.8" width="1.4" height="1.4"/><rect x="158.1" y="105.8" width="1.4" height="1.4"/><rect x="182.9" y="105.8" width="1.4" height="1.4"/><rect x="207.8" y="105.8" width="1.4" height="1.4"/><rect x="232.6" y="105.8" width="1.4" height="1.4"/><rect x="257.5" y="105.8" width="1.4" height="1.4"/><rect x="282.3" y="105.8" width="1.4" height="1.4"/><rect x="307.1" y="105.8" width="1.4" height="1.4"/><rect x="332.0" y="105.8" width="1.4" height="1.4"/><rect x="356.8" y="105.8" width="1.4" height="1.4"/><rect x="381.7" y="105.8" width="1.4" height="1.4"/><rect x="406.5" y="105.8" width="1.4" height="1.4"/><rect x="431.3" y="105.8" width="1.4" height="1.4"/><rect x="456.2" y="105.8" width="1.4" height="1.4"/><rect x="481.0" y="105.8" width="1.4" height="1.4"/><rect x="505.9" y="105.8" width="1.4" height="1.4"/><rect x="530.7" y="105.8" width="1.4" height="1.4"/><rect x="555.5" y="105.8" width="1.4" height="1.4"/><rect x="580.4" y="105.8" width="1.4" height="1.4"/><rect x="605.2" y="105.8" width="1.4" height="1.4"/><rect x="630.1" y="105.8" width="1.4" height="1.4"/><rect x="654.9" y="105.8" width="1.4" height="1.4"/><rect x="679.7" y="105.8" width="1.4" height="1.4"/><rect x="704.6" y="105.8" width="1.4" height="1.4"/><rect x="729.4" y="105.8" width="1.4" height="1.4"/><rect x="754.3" y="105.8" width="1.4" height="1.4"/><rect x="779.1" y="105.8" width="1.4" height="1.4"/><rect x="803.9" y="105.8" width="1.4" height="1.4"/><rect x="828.8" y="105.8" width="1.4" height="1.4"/><rect x="853.6" y="105.8" width="1.4" height="1.4"/><rect x="878.5" y="105.8" width="1.4" height="1.4"/><rect x="903.3" y="105.8" width="1.4" height="1.4"/><rect x="928.1" y="105.8" width="1.4" height="1.4"/><rect x="953.0" y="105.8" width="1.4" height="1.4"/><rect x="977.8" y="105.8" width="1.4" height="1.4"/><rect x="1002.7" y="105.8" width="1.4" height="1.4"/><rect x="1027.5" y="105.8" width="1.4" height="1.4"/><rect x="1052.3" y="105.8" width="1.4" height="1.4"/><rect x="1077.2" y="105.8" width="1.4" height="1.4"/><rect x="1102.0" y="105.8" width="1.4" height="1.4"/><rect x="1126.9" y="105.8" width="1.4" height="1.4"/><rect x="1151.7" y="105.8" width="1.4" height="1.4"/><rect x="1176.5" y="105.8" width="1.4" height="1.4"/><rect x="1201.4" y="105.8" width="1.4" height="1.4"/><rect x="1226.2" y="105.8" width="1.4" height="1.4"/><rect x="1251.1" y="105.8" width="1.4" height="1.4"/><rect x="1275.9" y="105.8" width="1.4" height="1.4"/><rect x="58.7" y="119.1" width="1.4" height="1.4"/><rect x="83.6" y="119.1" width="1.4" height="1.4"/><rect x="108.4" y="119.1" width="1.4" height="1.4"/><rect x="133.3" y="119.1" width="1.4" height="1.4"/><rect x="158.1" y="119.1" width="1.4" height="1.4"/><rect x="182.9" y="119.1" width="1.4" height="1.4"/><rect x="207.8" y="119.1" width="1.4" height="1.4"/><rect x="232.6" y="119.1" width="1.4" height="1.4"/><rect x="257.5" y="119.1" width="1.4" height="1.4"/><rect x="282.3" y="119.1" width="1.4" height="1.4"/><rect x="307.1" y="119.1" width="1.4" height="1.4"/><rect x="332.0" y="119.1" width="1.4" height="1.4"/><rect x="356.8" y="119.1" width="1.4" height="1.4"/><rect x="381.7" y="119.1" width="1.4" height="1.4"/><rect x="406.5" y="119.1" width="1.4" height="1.4"/><rect x="431.3" y="119.1" width="1.4" height="1.4"/><rect x="456.2" y="119.1" width="1.4" height="1.4"/><rect x="481.0" y="119.1" width="1.4" height="1.4"/><rect x="505.9" y="119.1" width="1.4" height="1.4"/><rect x="530.7" y="119.1" width="1.4" height="1.4"/><rect x="555.5" y="119.1" width="1.4" height="1.4"/><rect x="580.4" y="119.1" width="1.4" height="1.4"/><rect x="605.2" y="119.1" width="1.4" height="1.4"/><rect x="630.1" y="119.1" width="1.4" height="1.4"/><rect x="654.9" y="119.1" width="1.4" height="1.4"/><rect x="679.7" y="119.1" width="1.4" height="1.4"/><rect x="704.6" y="119.1" width="1.4" height="1.4"/><rect x="729.4" y="119.1" width="1.4" height="1.4"/><rect x="754.3" y="119.1" width="1.4" height="1.4"/><rect x="779.1" y="119.1" width="1.4" height="1.4"/><rect x="803.9" y="119.1" width="1.4" height="1.4"/><rect x="828.8" y="119.1" width="1.4" height="1.4"/><rect x="853.6" y="119.1" width="1.4" height="1.4"/><rect x="878.5" y="119.1" width="1.4" height="1.4"/><rect x="903.3" y="119.1" width="1.4" height="1.4"/><rect x="928.1" y="119.1" width="1.4" height="1.4"/><rect x="953.0" y="119.1" width="1.4" height="1.4"/><rect x="977.8" y="119.1" width="1.4" height="1.4"/><rect x="1002.7" y="119.1" width="1.4" height="1.4"/><rect x="1027.5" y="119.1" width="1.4" height="1.4"/><rect x="1052.3" y="119.1" width="1.4" height="1.4"/><rect x="1077.2" y="119.1" width="1.4" height="1.4"/><rect x="1102.0" y="119.1" width="1.4" height="1.4"/><rect x="1126.9" y="119.1" width="1.4" height="1.4"/><rect x="1151.7" y="119.1" width="1.4" height="1.4"/><rect x="1176.5" y="119.1" width="1.4" height="1.4"/><rect x="1201.4" y="119.1" width="1.4" height="1.4"/><rect x="1226.2" y="119.1" width="1.4" height="1.4"/><rect x="1251.1" y="119.1" width="1.4" height="1.4"/><rect x="1275.9" y="119.1" width="1.4" height="1.4"/><rect x="58.7" y="132.4" width="1.4" height="1.4"/><rect x="83.6" y="132.4" width="1.4" height="1.4"/><rect x="108.4" y="132.4" width="1.4" height="1.4"/><rect x="133.3" y="132.4" width="1.4" height="1.4"/><rect x="158.1" y="132.4" width="1.4" height="1.4"/><rect x="182.9" y="132.4" width="1.4" height="1.4"/><rect x="207.8" y="132.4" width="1.4" height="1.4"/><rect x="232.6" y="132.4" width="1.4" height="1.4"/><rect x="257.5" y="132.4" width="1.4" height="1.4"/><rect x="282.3" y="132.4" width="1.4" height="1.4"/><rect x="307.1" y="132.4" width="1.4" height="1.4"/><rect x="332.0" y="132.4" width="1.4" height="1.4"/><rect x="356.8" y="132.4" width="1.4" height="1.4"/><rect x="381.7" y="132.4" width="1.4" height="1.4"/><rect x="406.5" y="132.4" width="1.4" height="1.4"/><rect x="431.3" y="132.4" width="1.4" height="1.4"/><rect x="456.2" y="132.4" width="1.4" height="1.4"/><rect x="481.0" y="132.4" width="1.4" height="1.4"/><rect x="505.9" y="132.4" width="1.4" height="1.4"/><rect x="530.7" y="132.4" width="1.4" height="1.4"/><rect x="555.5" y="132.4" width="1.4" height="1.4"/><rect x="580.4" y="132.4" width="1.4" height="1.4"/><rect x="605.2" y="132.4" width="1.4" height="1.4"/><rect x="630.1" y="132.4" width="1.4" height="1.4"/><rect x="654.9" y="132.4" width="1.4" height="1.4"/><rect x="679.7" y="132.4" width="1.4" height="1.4"/><rect x="704.6" y="132.4" width="1.4" height="1.4"/><rect x="729.4" y="132.4" width="1.4" height="1.4"/><rect x="754.3" y="132.4" width="1.4" height="1.4"/><rect x="779.1" y="132.4" width="1.4" height="1.4"/><rect x="803.9" y="132.4" width="1.4" height="1.4"/><rect x="828.8" y="132.4" width="1.4" height="1.4"/><rect x="853.6" y="132.4" width="1.4" height="1.4"/><rect x="878.5" y="132.4" width="1.4" height="1.4"/><rect x="903.3" y="132.4" width="1.4" height="1.4"/><rect x="928.1" y="132.4" width="1.4" height="1.4"/><rect x="953.0" y="132.4" width="1.4" height="1.4"/><rect x="977.8" y="132.4" width="1.4" height="1.4"/><rect x="1002.7" y="132.4" width="1.4" height="1.4"/><rect x="1027.5" y="132.4" width="1.4" height="1.4"/><rect x="1052.3" y="132.4" width="1.4" height="1.4"/><rect x="1077.2" y="132.4" width="1.4" height="1.4"/><rect x="1102.0" y="132.4" width="1.4" height="1.4"/><rect x="1126.9" y="132.4" width="1.4" height="1.4"/><rect x="1151.7" y="132.4" width="1.4" height="1.4"/><rect x="1176.5" y="132.4" width="1.4" height="1.4"/><rect x="1201.4" y="132.4" width="1.4" height="1.4"/><rect x="1226.2" y="132.4" width="1.4" height="1.4"/><rect x="1251.1" y="132.4" width="1.4" height="1.4"/><rect x="1275.9" y="132.4" width="1.4" height="1.4"/><rect x="58.7" y="145.7" width="1.4" height="1.4"/><rect x="83.6" y="145.7" width="1.4" height="1.4"/><rect x="108.4" y="145.7" width="1.4" height="1.4"/><rect x="133.3" y="145.7" width="1.4" height="1.4"/><rect x="158.1" y="145.7" width="1.4" height="1.4"/><rect x="182.9" y="145.7" width="1.4" height="1.4"/><rect x="207.8" y="145.7" width="1.4" height="1.4"/><rect x="232.6" y="145.7" width="1.4" height="1.4"/><rect x="257.5" y="145.7" width="1.4" height="1.4"/><rect x="282.3" y="145.7" width="1.4" height="1.4"/><rect x="307.1" y="145.7" width="1.4" height="1.4"/><rect x="332.0" y="145.7" width="1.4" height="1.4"/><rect x="356.8" y="145.7" width="1.4" height="1.4"/><rect x="381.7" y="145.7" width="1.4" height="1.4"/><rect x="406.5" y="145.7" width="1.4" height="1.4"/><rect x="431.3" y="145.7" width="1.4" height="1.4"/><rect x="456.2" y="145.7" width="1.4" height="1.4"/><rect x="481.0" y="145.7" width="1.4" height="1.4"/><rect x="505.9" y="145.7" width="1.4" height="1.4"/><rect x="530.7" y="145.7" width="1.4" height="1.4"/><rect x="555.5" y="145.7" width="1.4" height="1.4"/><rect x="580.4" y="145.7" width="1.4" height="1.4"/><rect x="605.2" y="145.7" width="1.4" height="1.4"/><rect x="630.1" y="145.7" width="1.4" height="1.4"/><rect x="654.9" y="145.7" width="1.4" height="1.4"/><rect x="679.7" y="145.7" width="1.4" height="1.4"/><rect x="704.6" y="145.7" width="1.4" height="1.4"/><rect x="729.4" y="145.7" width="1.4" height="1.4"/><rect x="754.3" y="145.7" width="1.4" height="1.4"/><rect x="779.1" y="145.7" width="1.4" height="1.4"/><rect x="803.9" y="145.7" width="1.4" height="1.4"/><rect x="828.8" y="145.7" width="1.4" height="1.4"/><rect x="853.6" y="145.7" width="1.4" height="1.4"/><rect x="878.5" y="145.7" width="1.4" height="1.4"/><rect x="903.3" y="145.7" width="1.4" height="1.4"/><rect x="928.1" y="145.7" width="1.4" height="1.4"/><rect x="953.0" y="145.7" width="1.4" height="1.4"/><rect x="977.8" y="145.7" width="1.4" height="1.4"/><rect x="1002.7" y="145.7" width="1.4" height="1.4"/><rect x="1027.5" y="145.7" width="1.4" height="1.4"/><rect x="1052.3" y="145.7" width="1.4" height="1.4"/><rect x="1077.2" y="145.7" width="1.4" height="1.4"/><rect x="1102.0" y="145.7" width="1.4" height="1.4"/><rect x="1126.9" y="145.7" width="1.4" height="1.4"/><rect x="1151.7" y="145.7" width="1.4" height="1.4"/><rect x="1176.5" y="145.7" width="1.4" height="1.4"/><rect x="1201.4" y="145.7" width="1.4" height="1.4"/><rect x="1226.2" y="145.7" width="1.4" height="1.4"/><rect x="1251.1" y="145.7" width="1.4" height="1.4"/><rect x="1275.9" y="145.7" width="1.4" height="1.4"/><rect x="58.7" y="159.0" width="1.4" height="1.4"/><rect x="83.6" y="159.0" width="1.4" height="1.4"/><rect x="108.4" y="159.0" width="1.4" height="1.4"/><rect x="133.3" y="159.0" width="1.4" height="1.4"/><rect x="158.1" y="159.0" width="1.4" height="1.4"/><rect x="182.9" y="159.0" width="1.4" height="1.4"/><rect x="207.8" y="159.0" width="1.4" height="1.4"/><rect x="232.6" y="159.0" width="1.4" height="1.4"/><rect x="257.5" y="159.0" width="1.4" height="1.4"/><rect x="282.3" y="159.0" width="1.4" height="1.4"/><rect x="307.1" y="159.0" width="1.4" height="1.4"/><rect x="332.0" y="159.0" width="1.4" height="1.4"/><rect x="356.8" y="159.0" width="1.4" height="1.4"/><rect x="381.7" y="159.0" width="1.4" height="1.4"/><rect x="406.5" y="159.0" width="1.4" height="1.4"/><rect x="431.3" y="159.0" width="1.4" height="1.4"/><rect x="456.2" y="159.0" width="1.4" height="1.4"/><rect x="481.0" y="159.0" width="1.4" height="1.4"/><rect x="505.9" y="159.0" width="1.4" height="1.4"/><rect x="530.7" y="159.0" width="1.4" height="1.4"/><rect x="555.5" y="159.0" width="1.4" height="1.4"/><rect x="580.4" y="159.0" width="1.4" height="1.4"/><rect x="605.2" y="159.0" width="1.4" height="1.4"/><rect x="630.1" y="159.0" width="1.4" height="1.4"/><rect x="654.9" y="159.0" width="1.4" height="1.4"/><rect x="679.7" y="159.0" width="1.4" height="1.4"/><rect x="704.6" y="159.0" width="1.4" height="1.4"/><rect x="729.4" y="159.0" width="1.4" height="1.4"/><rect x="754.3" y="159.0" width="1.4" height="1.4"/><rect x="779.1" y="159.0" width="1.4" height="1.4"/><rect x="803.9" y="159.0" width="1.4" height="1.4"/><rect x="828.8" y="159.0" width="1.4" height="1.4"/><rect x="853.6" y="159.0" width="1.4" height="1.4"/><rect x="878.5" y="159.0" width="1.4" height="1.4"/><rect x="903.3" y="159.0" width="1.4" height="1.4"/><rect x="928.1" y="159.0" width="1.4" height="1.4"/><rect x="953.0" y="159.0" width="1.4" height="1.4"/><rect x="977.8" y="159.0" width="1.4" height="1.4"/><rect x="1002.7" y="159.0" width="1.4" height="1.4"/><rect x="1027.5" y="159.0" width="1.4" height="1.4"/><rect x="1052.3" y="159.0" width="1.4" height="1.4"/><rect x="1077.2" y="159.0" width="1.4" height="1.4"/><rect x="1102.0" y="159.0" width="1.4" height="1.4"/><rect x="1126.9" y="159.0" width="1.4" height="1.4"/><rect x="1151.7" y="159.0" width="1.4" height="1.4"/><rect x="1176.5" y="159.0" width="1.4" height="1.4"/><rect x="1201.4" y="159.0" width="1.4" height="1.4"/><rect x="1226.2" y="159.0" width="1.4" height="1.4"/><rect x="1251.1" y="159.0" width="1.4" height="1.4"/><rect x="1275.9" y="159.0" width="1.4" height="1.4"/><rect x="58.7" y="40.5" width="1.4" height="2"/><rect x="83.6" y="40.5" width="1.4" height="2"/><rect x="108.4" y="40.5" width="1.4" height="2"/><rect x="133.3" y="40.5" width="1.4" height="2"/><rect x="158.1" y="40.5" width="1.4" height="2"/><rect x="182.9" y="40.5" width="1.4" height="2"/><rect x="207.8" y="40.5" width="1.4" height="2"/><rect x="232.6" y="40.5" width="1.4" height="2"/><rect x="257.5" y="40.5" width="1.4" height="2"/><rect x="282.3" y="40.5" width="1.4" height="2"/><rect x="307.1" y="40.5" width="1.4" height="2"/><rect x="332.0" y="40.5" width="1.4" height="2"/><rect x="356.8" y="40.5" width="1.4" height="2"/><rect x="381.7" y="40.5" width="1.4" height="2"/><rect x="406.5" y="40.5" width="1.4" height="2"/><rect x="431.3" y="40.5" width="1.4" height="2"/><rect x="456.2" y="40.5" width="1.4" height="2"/><rect x="481.0" y="40.5" width="1.4" height="2"/><rect x="505.9" y="40.5" width="1.4" height="2"/><rect x="530.7" y="40.5" width="1.4" height="2"/><rect x="555.5" y="40.5" width="1.4" height="2"/><rect x="580.4" y="40.5" width="1.4" height="2"/><rect x="605.2" y="40.5" width="1.4" height="2"/><rect x="630.1" y="40.5" width="1.4" height="2"/><rect x="654.9" y="40.5" width="1.4" height="2"/><rect x="679.7" y="40.5" width="1.4" height="2"/><rect x="704.6" y="40.5" width="1.4" height="2"/><rect x="729.4" y="40.5" width="1.4" height="2"/><rect x="754.3" y="40.5" width="1.4" height="2"/><rect x="779.1" y="40.5" width="1.4" height="2"/><rect x="803.9" y="40.5" width="1.4" height="2"/><rect x="828.8" y="40.5" width="1.4" height="2"/><rect x="853.6" y="40.5" width="1.4" height="2"/><rect x="878.5" y="40.5" width="1.4" height="2"/><rect x="903.3" y="40.5" width="1.4" height="2"/><rect x="928.1" y="40.5" width="1.4" height="2"/><rect x="953.0" y="40.5" width="1.4" height="2"/><rect x="977.8" y="40.5" width="1.4" height="2"/><rect x="1002.7" y="40.5" width="1.4" height="2"/><rect x="1027.5" y="40.5" width="1.4" height="2"/><rect x="1052.3" y="40.5" width="1.4" height="2"/><rect x="1077.2" y="40.5" width="1.4" height="2"/><rect x="1102.0" y="40.5" width="1.4" height="2"/><rect x="1126.9" y="40.5" width="1.4" height="2"/><rect x="1151.7" y="40.5" width="1.4" height="2"/><rect x="1176.5" y="40.5" width="1.4" height="2"/><rect x="1201.4" y="40.5" width="1.4" height="2"/><rect x="1226.2" y="40.5" width="1.4" height="2"/><rect x="1251.1" y="40.5" width="1.4" height="2"/><rect x="1275.9" y="40.5" width="1.4" height="2"/></g>
 <g fill="#3e3e3e"><rect x="79.5" y="200.8" width="1.3" height="1.3"/><rect x="79.5" y="211.2" width="1.3" height="1.3"/><rect x="79.5" y="221.5" width="1.3" height="1.3"/><rect x="79.5" y="231.8" width="1.3" height="1.3"/><rect x="79.5" y="242.1" width="1.3" height="1.3"/><rect x="79.5" y="252.4" width="1.3" height="1.3"/><rect x="79.5" y="262.7" width="1.3" height="1.3"/><rect x="79.5" y="273.0" width="1.3" height="1.3"/><rect x="79.5" y="283.3" width="1.3" height="1.3"/><rect x="79.5" y="293.6" width="1.3" height="1.3"/><rect x="79.5" y="303.9" width="1.3" height="1.3"/><rect x="79.5" y="314.2" width="1.3" height="1.3"/><rect x="79.5" y="324.5" width="1.3" height="1.3"/><rect x="79.5" y="334.8" width="1.3" height="1.3"/><rect x="79.5" y="345.1" width="1.3" height="1.3"/><rect x="79.5" y="355.4" width="1.3" height="1.3"/><rect x="79.5" y="365.7" width="1.3" height="1.3"/><rect x="79.5" y="376.0" width="1.3" height="1.3"/><rect x="79.5" y="386.3" width="1.3" height="1.3"/><rect x="79.5" y="396.6" width="1.3" height="1.3"/><rect x="79.5" y="406.9" width="1.3" height="1.3"/><rect x="79.5" y="417.2" width="1.3" height="1.3"/><rect x="79.5" y="427.5" width="1.3" height="1.3"/><rect x="79.5" y="437.8" width="1.3" height="1.3"/><rect x="79.5" y="448.1" width="1.3" height="1.3"/><rect x="79.5" y="458.4" width="1.3" height="1.3"/><rect x="79.5" y="468.7" width="1.3" height="1.3"/><rect x="79.5" y="479.0" width="1.3" height="1.3"/><rect x="79.5" y="489.3" width="1.3" height="1.3"/><rect x="79.5" y="499.6" width="1.3" height="1.3"/><rect x="79.5" y="509.9" width="1.3" height="1.3"/><rect x="79.5" y="520.2" width="1.3" height="1.3"/><rect x="79.5" y="530.5" width="1.3" height="1.3"/><rect x="79.5" y="540.8" width="1.3" height="1.3"/><rect x="79.5" y="551.1" width="1.3" height="1.3"/><rect x="79.5" y="561.4" width="1.3" height="1.3"/><rect x="79.5" y="571.7" width="1.3" height="1.3"/><rect x="79.5" y="582.0" width="1.3" height="1.3"/><rect x="79.5" y="592.2" width="1.3" height="1.3"/><rect x="79.5" y="602.5" width="1.3" height="1.3"/><rect x="79.5" y="612.8" width="1.3" height="1.3"/><rect x="79.5" y="623.1" width="1.3" height="1.3"/><rect x="79.5" y="633.4" width="1.3" height="1.3"/><rect x="79.5" y="643.7" width="1.3" height="1.3"/><rect x="79.5" y="654.0" width="1.3" height="1.3"/><rect x="79.5" y="664.3" width="1.3" height="1.3"/><rect x="79.5" y="674.6" width="1.3" height="1.3"/><rect x="79.5" y="684.9" width="1.3" height="1.3"/><rect x="79.5" y="695.2" width="1.3" height="1.3"/><rect x="203.8" y="200.8" width="1.3" height="1.3"/><rect x="203.8" y="211.2" width="1.3" height="1.3"/><rect x="203.8" y="221.5" width="1.3" height="1.3"/><rect x="203.8" y="231.8" width="1.3" height="1.3"/><rect x="203.8" y="242.1" width="1.3" height="1.3"/><rect x="203.8" y="252.4" width="1.3" height="1.3"/><rect x="203.8" y="262.7" width="1.3" height="1.3"/><rect x="203.8" y="273.0" width="1.3" height="1.3"/><rect x="203.8" y="283.3" width="1.3" height="1.3"/><rect x="203.8" y="293.6" width="1.3" height="1.3"/><rect x="203.8" y="303.9" width="1.3" height="1.3"/><rect x="203.8" y="314.2" width="1.3" height="1.3"/><rect x="203.8" y="324.5" width="1.3" height="1.3"/><rect x="203.8" y="334.8" width="1.3" height="1.3"/><rect x="203.8" y="345.1" width="1.3" height="1.3"/><rect x="203.8" y="355.4" width="1.3" height="1.3"/><rect x="203.8" y="365.7" width="1.3" height="1.3"/><rect x="203.8" y="376.0" width="1.3" height="1.3"/><rect x="203.8" y="386.3" width="1.3" height="1.3"/><rect x="203.8" y="396.6" width="1.3" height="1.3"/><rect x="203.8" y="406.9" width="1.3" height="1.3"/><rect x="203.8" y="417.2" width="1.3" height="1.3"/><rect x="203.8" y="427.5" width="1.3" height="1.3"/><rect x="203.8" y="437.8" width="1.3" height="1.3"/><rect x="203.8" y="448.1" width="1.3" height="1.3"/><rect x="203.8" y="458.4" width="1.3" height="1.3"/><rect x="203.8" y="468.7" width="1.3" height="1.3"/><rect x="203.8" y="479.0" width="1.3" height="1.3"/><rect x="203.8" y="489.3" width="1.3" height="1.3"/><rect x="203.8" y="499.6" width="1.3" height="1.3"/><rect x="203.8" y="509.9" width="1.3" height="1.3"/><rect x="203.8" y="520.2" width="1.3" height="1.3"/><rect x="203.8" y="530.5" width="1.3" height="1.3"/><rect x="203.8" y="540.8" width="1.3" height="1.3"/><rect x="203.8" y="551.1" width="1.3" height="1.3"/><rect x="203.8" y="561.4" width="1.3" height="1.3"/><rect x="203.8" y="571.7" width="1.3" height="1.3"/><rect x="203.8" y="582.0" width="1.3" height="1.3"/><rect x="203.8" y="592.2" width="1.3" height="1.3"/><rect x="203.8" y="602.5" width="1.3" height="1.3"/><rect x="203.8" y="612.8" width="1.3" height="1.3"/><rect x="203.8" y="623.1" width="1.3" height="1.3"/><rect x="203.8" y="633.4" width="1.3" height="1.3"/><rect x="203.8" y="643.7" width="1.3" height="1.3"/><rect x="203.8" y="654.0" width="1.3" height="1.3"/><rect x="203.8" y="664.3" width="1.3" height="1.3"/><rect x="203.8" y="674.6" width="1.3" height="1.3"/><rect x="203.8" y="684.9" width="1.3" height="1.3"/><rect x="203.8" y="695.2" width="1.3" height="1.3"/><rect x="328.1" y="200.8" width="1.3" height="1.3"/><rect x="328.1" y="211.2" width="1.3" height="1.3"/><rect x="328.1" y="221.5" width="1.3" height="1.3"/><rect x="328.1" y="231.8" width="1.3" height="1.3"/><rect x="328.1" y="242.1" width="1.3" height="1.3"/><rect x="328.1" y="252.4" width="1.3" height="1.3"/><rect x="328.1" y="262.7" width="1.3" height="1.3"/><rect x="328.1" y="273.0" width="1.3" height="1.3"/><rect x="328.1" y="283.3" width="1.3" height="1.3"/><rect x="328.1" y="293.6" width="1.3" height="1.3"/><rect x="328.1" y="303.9" width="1.3" height="1.3"/><rect x="328.1" y="314.2" width="1.3" height="1.3"/><rect x="328.1" y="324.5" width="1.3" height="1.3"/><rect x="328.1" y="334.8" width="1.3" height="1.3"/><rect x="328.1" y="345.1" width="1.3" height="1.3"/><rect x="328.1" y="355.4" width="1.3" height="1.3"/><rect x="328.1" y="365.7" width="1.3" height="1.3"/><rect x="328.1" y="376.0" width="1.3" height="1.3"/><rect x="328.1" y="386.3" width="1.3" height="1.3"/><rect x="328.1" y="396.6" width="1.3" height="1.3"/><rect x="328.1" y="406.9" width="1.3" height="1.3"/><rect x="328.1" y="417.2" width="1.3" height="1.3"/><rect x="328.1" y="427.5" width="1.3" height="1.3"/><rect x="328.1" y="437.8" width="1.3" height="1.3"/><rect x="328.1" y="448.1" width="1.3" height="1.3"/><rect x="328.1" y="458.4" width="1.3" height="1.3"/><rect x="328.1" y="468.7" width="1.3" height="1.3"/><rect x="328.1" y="479.0" width="1.3" height="1.3"/><rect x="328.1" y="489.3" width="1.3" height="1.3"/><rect x="328.1" y="499.6" width="1.3" height="1.3"/><rect x="328.1" y="509.9" width="1.3" height="1.3"/><rect x="328.1" y="520.2" width="1.3" height="1.3"/><rect x="328.1" y="530.5" width="1.3" height="1.3"/><rect x="328.1" y="540.8" width="1.3" height="1.3"/><rect x="328.1" y="551.1" width="1.3" height="1.3"/><rect x="328.1" y="561.4" width="1.3" height="1.3"/><rect x="328.1" y="571.7" width="1.3" height="1.3"/><rect x="328.1" y="582.0" width="1.3" height="1.3"/><rect x="328.1" y="592.2" width="1.3" height="1.3"/><rect x="328.1" y="602.5" width="1.3" height="1.3"/><rect x="328.1" y="612.8" width="1.3" height="1.3"/><rect x="328.1" y="623.1" width="1.3" height="1.3"/><rect x="328.1" y="633.4" width="1.3" height="1.3"/><rect x="328.1" y="643.7" width="1.3" height="1.3"/><rect x="328.1" y="654.0" width="1.3" height="1.3"/><rect x="328.1" y="664.3" width="1.3" height="1.3"/><rect x="328.1" y="674.6" width="1.3" height="1.3"/><rect x="328.1" y="684.9" width="1.3" height="1.3"/><rect x="328.1" y="695.2" width="1.3" height="1.3"/><rect x="452.3" y="200.8" width="1.3" height="1.3"/><rect x="452.3" y="211.2" width="1.3" height="1.3"/><rect x="452.3" y="221.5" width="1.3" height="1.3"/><rect x="452.3" y="231.8" width="1.3" height="1.3"/><rect x="452.3" y="242.1" width="1.3" height="1.3"/><rect x="452.3" y="252.4" width="1.3" height="1.3"/><rect x="452.3" y="262.7" width="1.3" height="1.3"/><rect x="452.3" y="273.0" width="1.3" height="1.3"/><rect x="452.3" y="283.3" width="1.3" height="1.3"/><rect x="452.3" y="293.6" width="1.3" height="1.3"/><rect x="452.3" y="303.9" width="1.3" height="1.3"/><rect x="452.3" y="314.2" width="1.3" height="1.3"/><rect x="452.3" y="324.5" width="1.3" height="1.3"/><rect x="452.3" y="334.8" width="1.3" height="1.3"/><rect x="452.3" y="345.1" width="1.3" height="1.3"/><rect x="452.3" y="355.4" width="1.3" height="1.3"/><rect x="452.3" y="365.7" width="1.3" height="1.3"/><rect x="452.3" y="376.0" width="1.3" height="1.3"/><rect x="452.3" y="386.3" width="1.3" height="1.3"/><rect x="452.3" y="396.6" width="1.3" height="1.3"/><rect x="452.3" y="406.9" width="1.3" height="1.3"/><rect x="452.3" y="417.2" width="1.3" height="1.3"/><rect x="452.3" y="427.5" width="1.3" height="1.3"/><rect x="452.3" y="437.8" width="1.3" height="1.3"/><rect x="452.3" y="448.1" width="1.3" height="1.3"/><rect x="452.3" y="458.4" width="1.3" height="1.3"/><rect x="452.3" y="468.7" width="1.3" height="1.3"/><rect x="452.3" y="479.0" width="1.3" height="1.3"/><rect x="452.3" y="489.3" width="1.3" height="1.3"/><rect x="452.3" y="499.6" width="1.3" height="1.3"/><rect x="452.3" y="509.9" width="1.3" height="1.3"/><rect x="452.3" y="520.2" width="1.3" height="1.3"/><rect x="452.3" y="530.5" width="1.3" height="1.3"/><rect x="452.3" y="540.8" width="1.3" height="1.3"/><rect x="452.3" y="551.1" width="1.3" height="1.3"/><rect x="452.3" y="561.4" width="1.3" height="1.3"/><rect x="452.3" y="571.7" width="1.3" height="1.3"/><rect x="452.3" y="582.0" width="1.3" height="1.3"/><rect x="452.3" y="592.2" width="1.3" height="1.3"/><rect x="452.3" y="602.5" width="1.3" height="1.3"/><rect x="452.3" y="612.8" width="1.3" height="1.3"/><rect x="452.3" y="623.1" width="1.3" height="1.3"/><rect x="452.3" y="633.4" width="1.3" height="1.3"/><rect x="452.3" y="643.7" width="1.3" height="1.3"/><rect x="452.3" y="654.0" width="1.3" height="1.3"/><rect x="452.3" y="664.3" width="1.3" height="1.3"/><rect x="452.3" y="674.6" width="1.3" height="1.3"/><rect x="452.3" y="684.9" width="1.3" height="1.3"/><rect x="452.3" y="695.2" width="1.3" height="1.3"/><rect x="576.6" y="200.8" width="1.3" height="1.3"/><rect x="576.6" y="211.2" width="1.3" height="1.3"/><rect x="576.6" y="221.5" width="1.3" height="1.3"/><rect x="576.6" y="231.8" width="1.3" height="1.3"/><rect x="576.6" y="242.1" width="1.3" height="1.3"/><rect x="576.6" y="252.4" width="1.3" height="1.3"/><rect x="576.6" y="262.7" width="1.3" height="1.3"/><rect x="576.6" y="273.0" width="1.3" height="1.3"/><rect x="576.6" y="283.3" width="1.3" height="1.3"/><rect x="576.6" y="293.6" width="1.3" height="1.3"/><rect x="576.6" y="303.9" width="1.3" height="1.3"/><rect x="576.6" y="314.2" width="1.3" height="1.3"/><rect x="576.6" y="324.5" width="1.3" height="1.3"/><rect x="576.6" y="334.8" width="1.3" height="1.3"/><rect x="576.6" y="345.1" width="1.3" height="1.3"/><rect x="576.6" y="355.4" width="1.3" height="1.3"/><rect x="576.6" y="365.7" width="1.3" height="1.3"/><rect x="576.6" y="376.0" width="1.3" height="1.3"/><rect x="576.6" y="386.3" width="1.3" height="1.3"/><rect x="576.6" y="396.6" width="1.3" height="1.3"/><rect x="576.6" y="406.9" width="1.3" height="1.3"/><rect x="576.6" y="417.2" width="1.3" height="1.3"/><rect x="576.6" y="427.5" width="1.3" height="1.3"/><rect x="576.6" y="437.8" width="1.3" height="1.3"/><rect x="576.6" y="448.1" width="1.3" height="1.3"/><rect x="576.6" y="458.4" width="1.3" height="1.3"/><rect x="576.6" y="468.7" width="1.3" height="1.3"/><rect x="576.6" y="479.0" width="1.3" height="1.3"/><rect x="576.6" y="489.3" width="1.3" height="1.3"/><rect x="576.6" y="499.6" width="1.3" height="1.3"/><rect x="576.6" y="509.9" width="1.3" height="1.3"/><rect x="576.6" y="520.2" width="1.3" height="1.3"/><rect x="576.6" y="530.5" width="1.3" height="1.3"/><rect x="576.6" y="540.8" width="1.3" height="1.3"/><rect x="576.6" y="551.1" width="1.3" height="1.3"/><rect x="576.6" y="561.4" width="1.3" height="1.3"/><rect x="576.6" y="571.7" width="1.3" height="1.3"/><rect x="576.6" y="582.0" width="1.3" height="1.3"/><rect x="576.6" y="592.2" width="1.3" height="1.3"/><rect x="576.6" y="602.5" width="1.3" height="1.3"/><rect x="576.6" y="612.8" width="1.3" height="1.3"/><rect x="576.6" y="623.1" width="1.3" height="1.3"/><rect x="576.6" y="633.4" width="1.3" height="1.3"/><rect x="576.6" y="643.7" width="1.3" height="1.3"/><rect x="576.6" y="654.0" width="1.3" height="1.3"/><rect x="576.6" y="664.3" width="1.3" height="1.3"/><rect x="576.6" y="674.6" width="1.3" height="1.3"/><rect x="576.6" y="684.9" width="1.3" height="1.3"/><rect x="576.6" y="695.2" width="1.3" height="1.3"/><rect x="700.8" y="200.8" width="1.3" height="1.3"/><rect x="700.8" y="211.2" width="1.3" height="1.3"/><rect x="700.8" y="221.5" width="1.3" height="1.3"/><rect x="700.8" y="231.8" width="1.3" height="1.3"/><rect x="700.8" y="242.1" width="1.3" height="1.3"/><rect x="700.8" y="252.4" width="1.3" height="1.3"/><rect x="700.8" y="262.7" width="1.3" height="1.3"/><rect x="700.8" y="273.0" width="1.3" height="1.3"/><rect x="700.8" y="283.3" width="1.3" height="1.3"/><rect x="700.8" y="293.6" width="1.3" height="1.3"/><rect x="700.8" y="303.9" width="1.3" height="1.3"/><rect x="700.8" y="314.2" width="1.3" height="1.3"/><rect x="700.8" y="324.5" width="1.3" height="1.3"/><rect x="700.8" y="334.8" width="1.3" height="1.3"/><rect x="700.8" y="345.1" width="1.3" height="1.3"/><rect x="700.8" y="355.4" width="1.3" height="1.3"/><rect x="700.8" y="365.7" width="1.3" height="1.3"/><rect x="700.8" y="376.0" width="1.3" height="1.3"/><rect x="700.8" y="386.3" width="1.3" height="1.3"/><rect x="700.8" y="396.6" width="1.3" height="1.3"/><rect x="700.8" y="406.9" width="1.3" height="1.3"/><rect x="700.8" y="417.2" width="1.3" height="1.3"/><rect x="700.8" y="427.5" width="1.3" height="1.3"/><rect x="700.8" y="437.8" width="1.3" height="1.3"/><rect x="700.8" y="448.1" width="1.3" height="1.3"/><rect x="700.8" y="458.4" width="1.3" height="1.3"/><rect x="700.8" y="468.7" width="1.3" height="1.3"/><rect x="700.8" y="479.0" width="1.3" height="1.3"/><rect x="700.8" y="489.3" width="1.3" height="1.3"/><rect x="700.8" y="499.6" width="1.3" height="1.3"/><rect x="700.8" y="509.9" width="1.3" height="1.3"/><rect x="700.8" y="520.2" width="1.3" height="1.3"/><rect x="700.8" y="530.5" width="1.3" height="1.3"/><rect x="700.8" y="540.8" width="1.3" height="1.3"/><rect x="700.8" y="551.1" width="1.3" height="1.3"/><rect x="700.8" y="561.4" width="1.3" height="1.3"/><rect x="700.8" y="571.7" width="1.3" height="1.3"/><rect x="700.8" y="582.0" width="1.3" height="1.3"/><rect x="700.8" y="592.2" width="1.3" height="1.3"/><rect x="700.8" y="602.5" width="1.3" height="1.3"/><rect x="700.8" y="612.8" width="1.3" height="1.3"/><rect x="700.8" y="623.1" width="1.3" height="1.3"/><rect x="700.8" y="633.4" width="1.3" height="1.3"/><rect x="700.8" y="643.7" width="1.3" height="1.3"/><rect x="700.8" y="654.0" width="1.3" height="1.3"/><rect x="700.8" y="664.3" width="1.3" height="1.3"/><rect x="700.8" y="674.6" width="1.3" height="1.3"/><rect x="700.8" y="684.9" width="1.3" height="1.3"/><rect x="700.8" y="695.2" width="1.3" height="1.3"/><rect x="825.1" y="200.8" width="1.3" height="1.3"/><rect x="825.1" y="211.2" width="1.3" height="1.3"/><rect x="825.1" y="221.5" width="1.3" height="1.3"/><rect x="825.1" y="231.8" width="1.3" height="1.3"/><rect x="825.1" y="242.1" width="1.3" height="1.3"/><rect x="825.1" y="252.4" width="1.3" height="1.3"/><rect x="825.1" y="262.7" width="1.3" height="1.3"/><rect x="825.1" y="273.0" width="1.3" height="1.3"/><rect x="825.1" y="283.3" width="1.3" height="1.3"/><rect x="825.1" y="293.6" width="1.3" height="1.3"/><rect x="825.1" y="303.9" width="1.3" height="1.3"/><rect x="825.1" y="314.2" width="1.3" height="1.3"/><rect x="825.1" y="324.5" width="1.3" height="1.3"/><rect x="825.1" y="334.8" width="1.3" height="1.3"/><rect x="825.1" y="345.1" width="1.3" height="1.3"/><rect x="825.1" y="355.4" width="1.3" height="1.3"/><rect x="825.1" y="365.7" width="1.3" height="1.3"/><rect x="825.1" y="376.0" width="1.3" height="1.3"/><rect x="825.1" y="386.3" width="1.3" height="1.3"/><rect x="825.1" y="396.6" width="1.3" height="1.3"/><rect x="825.1" y="406.9" width="1.3" height="1.3"/><rect x="825.1" y="417.2" width="1.3" height="1.3"/><rect x="825.1" y="427.5" width="1.3" height="1.3"/><rect x="825.1" y="437.8" width="1.3" height="1.3"/><rect x="825.1" y="448.1" width="1.3" height="1.3"/><rect x="825.1" y="458.4" width="1.3" height="1.3"/><rect x="825.1" y="468.7" width="1.3" height="1.3"/><rect x="825.1" y="479.0" width="1.3" height="1.3"/><rect x="825.1" y="489.3" width="1.3" height="1.3"/><rect x="825.1" y="499.6" width="1.3" height="1.3"/><rect x="825.1" y="509.9" width="1.3" height="1.3"/><rect x="825.1" y="520.2" width="1.3" height="1.3"/><rect x="825.1" y="530.5" width="1.3" height="1.3"/><rect x="825.1" y="540.8" width="1.3" height="1.3"/><rect x="825.1" y="551.1" width="1.3" height="1.3"/><rect x="825.1" y="561.4" width="1.3" height="1.3"/><rect x="825.1" y="571.7" width="1.3" height="1.3"/><rect x="825.1" y="582.0" width="1.3" height="1.3"/><rect x="825.1" y="592.2" width="1.3" height="1.3"/><rect x="825.1" y="602.5" width="1.3" height="1.3"/><rect x="825.1" y="612.8" width="1.3" height="1.3"/><rect x="825.1" y="623.1" width="1.3" height="1.3"/><rect x="825.1" y="633.4" width="1.3" height="1.3"/><rect x="825.1" y="643.7" width="1.3" height="1.3"/><rect x="825.1" y="654.0" width="1.3" height="1.3"/><rect x="825.1" y="664.3" width="1.3" height="1.3"/><rect x="825.1" y="674.6" width="1.3" height="1.3"/><rect x="825.1" y="684.9" width="1.3" height="1.3"/><rect x="825.1" y="695.2" width="1.3" height="1.3"/><rect x="949.3" y="200.8" width="1.3" height="1.3"/><rect x="949.3" y="211.2" width="1.3" height="1.3"/><rect x="949.3" y="221.5" width="1.3" height="1.3"/><rect x="949.3" y="231.8" width="1.3" height="1.3"/><rect x="949.3" y="242.1" width="1.3" height="1.3"/><rect x="949.3" y="252.4" width="1.3" height="1.3"/><rect x="949.3" y="262.7" width="1.3" height="1.3"/><rect x="949.3" y="273.0" width="1.3" height="1.3"/><rect x="949.3" y="283.3" width="1.3" height="1.3"/><rect x="949.3" y="293.6" width="1.3" height="1.3"/><rect x="949.3" y="303.9" width="1.3" height="1.3"/><rect x="949.3" y="314.2" width="1.3" height="1.3"/><rect x="949.3" y="324.5" width="1.3" height="1.3"/><rect x="949.3" y="334.8" width="1.3" height="1.3"/><rect x="949.3" y="345.1" width="1.3" height="1.3"/><rect x="949.3" y="355.4" width="1.3" height="1.3"/><rect x="949.3" y="365.7" width="1.3" height="1.3"/><rect x="949.3" y="376.0" width="1.3" height="1.3"/><rect x="949.3" y="386.3" width="1.3" height="1.3"/><rect x="949.3" y="396.6" width="1.3" height="1.3"/><rect x="949.3" y="406.9" width="1.3" height="1.3"/><rect x="949.3" y="417.2" width="1.3" height="1.3"/><rect x="949.3" y="427.5" width="1.3" height="1.3"/><rect x="949.3" y="437.8" width="1.3" height="1.3"/><rect x="949.3" y="448.1" width="1.3" height="1.3"/><rect x="949.3" y="458.4" width="1.3" height="1.3"/><rect x="949.3" y="468.7" width="1.3" height="1.3"/><rect x="949.3" y="479.0" width="1.3" height="1.3"/><rect x="949.3" y="489.3" width="1.3" height="1.3"/><rect x="949.3" y="499.6" width="1.3" height="1.3"/><rect x="949.3" y="509.9" width="1.3" height="1.3"/><rect x="949.3" y="520.2" width="1.3" height="1.3"/><rect x="949.3" y="530.5" width="1.3" height="1.3"/><rect x="949.3" y="540.8" width="1.3" height="1.3"/><rect x="949.3" y="551.1" width="1.3" height="1.3"/><rect x="949.3" y="561.4" width="1.3" height="1.3"/><rect x="949.3" y="571.7" width="1.3" height="1.3"/><rect x="949.3" y="582.0" width="1.3" height="1.3"/><rect x="949.3" y="592.2" width="1.3" height="1.3"/><rect x="949.3" y="602.5" width="1.3" height="1.3"/><rect x="949.3" y="612.8" width="1.3" height="1.3"/><rect x="949.3" y="623.1" width="1.3" height="1.3"/><rect x="949.3" y="633.4" width="1.3" height="1.3"/><rect x="949.3" y="643.7" width="1.3" height="1.3"/><rect x="949.3" y="654.0" width="1.3" height="1.3"/><rect x="949.3" y="664.3" width="1.3" height="1.3"/><rect x="949.3" y="674.6" width="1.3" height="1.3"/><rect x="949.3" y="684.9" width="1.3" height="1.3"/><rect x="949.3" y="695.2" width="1.3" height="1.3"/><rect x="1073.5" y="200.8" width="1.3" height="1.3"/><rect x="1073.5" y="211.2" width="1.3" height="1.3"/><rect x="1073.5" y="221.5" width="1.3" height="1.3"/><rect x="1073.5" y="231.8" width="1.3" height="1.3"/><rect x="1073.5" y="242.1" width="1.3" height="1.3"/><rect x="1073.5" y="252.4" width="1.3" height="1.3"/><rect x="1073.5" y="262.7" width="1.3" height="1.3"/><rect x="1073.5" y="273.0" width="1.3" height="1.3"/><rect x="1073.5" y="283.3" width="1.3" height="1.3"/><rect x="1073.5" y="293.6" width="1.3" height="1.3"/><rect x="1073.5" y="303.9" width="1.3" height="1.3"/><rect x="1073.5" y="314.2" width="1.3" height="1.3"/><rect x="1073.5" y="324.5" width="1.3" height="1.3"/><rect x="1073.5" y="334.8" width="1.3" height="1.3"/><rect x="1073.5" y="345.1" width="1.3" height="1.3"/><rect x="1073.5" y="355.4" width="1.3" height="1.3"/><rect x="1073.5" y="365.7" width="1.3" height="1.3"/><rect x="1073.5" y="376.0" width="1.3" height="1.3"/><rect x="1073.5" y="386.3" width="1.3" height="1.3"/><rect x="1073.5" y="396.6" width="1.3" height="1.3"/><rect x="1073.5" y="406.9" width="1.3" height="1.3"/><rect x="1073.5" y="417.2" width="1.3" height="1.3"/><rect x="1073.5" y="427.5" width="1.3" height="1.3"/><rect x="1073.5" y="437.8" width="1.3" height="1.3"/><rect x="1073.5" y="448.1" width="1.3" height="1.3"/><rect x="1073.5" y="458.4" width="1.3" height="1.3"/><rect x="1073.5" y="468.7" width="1.3" height="1.3"/><rect x="1073.5" y="479.0" width="1.3" height="1.3"/><rect x="1073.5" y="489.3" width="1.3" height="1.3"/><rect x="1073.5" y="499.6" width="1.3" height="1.3"/><rect x="1073.5" y="509.9" width="1.3" height="1.3"/><rect x="1073.5" y="520.2" width="1.3" height="1.3"/><rect x="1073.5" y="530.5" width="1.3" height="1.3"/><rect x="1073.5" y="540.8" width="1.3" height="1.3"/><rect x="1073.5" y="551.1" width="1.3" height="1.3"/><rect x="1073.5" y="561.4" width="1.3" height="1.3"/><rect x="1073.5" y="571.7" width="1.3" height="1.3"/><rect x="1073.5" y="582.0" width="1.3" height="1.3"/><rect x="1073.5" y="592.2" width="1.3" height="1.3"/><rect x="1073.5" y="602.5" width="1.3" height="1.3"/><rect x="1073.5" y="612.8" width="1.3" height="1.3"/><rect x="1073.5" y="623.1" width="1.3" height="1.3"/><rect x="1073.5" y="633.4" width="1.3" height="1.3"/><rect x="1073.5" y="643.7" width="1.3" height="1.3"/><rect x="1073.5" y="654.0" width="1.3" height="1.3"/><rect x="1073.5" y="664.3" width="1.3" height="1.3"/><rect x="1073.5" y="674.6" width="1.3" height="1.3"/><rect x="1073.5" y="684.9" width="1.3" height="1.3"/><rect x="1073.5" y="695.2" width="1.3" height="1.3"/><rect x="1197.8" y="200.8" width="1.3" height="1.3"/><rect x="1197.8" y="211.2" width="1.3" height="1.3"/><rect x="1197.8" y="221.5" width="1.3" height="1.3"/><rect x="1197.8" y="231.8" width="1.3" height="1.3"/><rect x="1197.8" y="242.1" width="1.3" height="1.3"/><rect x="1197.8" y="252.4" width="1.3" height="1.3"/><rect x="1197.8" y="262.7" width="1.3" height="1.3"/><rect x="1197.8" y="273.0" width="1.3" height="1.3"/><rect x="1197.8" y="283.3" width="1.3" height="1.3"/><rect x="1197.8" y="293.6" width="1.3" height="1.3"/><rect x="1197.8" y="303.9" width="1.3" height="1.3"/><rect x="1197.8" y="314.2" width="1.3" height="1.3"/><rect x="1197.8" y="324.5" width="1.3" height="1.3"/><rect x="1197.8" y="334.8" width="1.3" height="1.3"/><rect x="1197.8" y="345.1" width="1.3" height="1.3"/><rect x="1197.8" y="355.4" width="1.3" height="1.3"/><rect x="1197.8" y="365.7" width="1.3" height="1.3"/><rect x="1197.8" y="376.0" width="1.3" height="1.3"/><rect x="1197.8" y="386.3" width="1.3" height="1.3"/><rect x="1197.8" y="396.6" width="1.3" height="1.3"/><rect x="1197.8" y="406.9" width="1.3" height="1.3"/><rect x="1197.8" y="417.2" width="1.3" height="1.3"/><rect x="1197.8" y="427.5" width="1.3" height="1.3"/><rect x="1197.8" y="437.8" width="1.3" height="1.3"/><rect x="1197.8" y="448.1" width="1.3" height="1.3"/><rect x="1197.8" y="458.4" width="1.3" height="1.3"/><rect x="1197.8" y="468.7" width="1.3" height="1.3"/><rect x="1197.8" y="479.0" width="1.3" height="1.3"/><rect x="1197.8" y="489.3" width="1.3" height="1.3"/><rect x="1197.8" y="499.6" width="1.3" height="1.3"/><rect x="1197.8" y="509.9" width="1.3" height="1.3"/><rect x="1197.8" y="520.2" width="1.3" height="1.3"/><rect x="1197.8" y="530.5" width="1.3" height="1.3"/><rect x="1197.8" y="540.8" width="1.3" height="1.3"/><rect x="1197.8" y="551.1" width="1.3" height="1.3"/><rect x="1197.8" y="561.4" width="1.3" height="1.3"/><rect x="1197.8" y="571.7" width="1.3" height="1.3"/><rect x="1197.8" y="582.0" width="1.3" height="1.3"/><rect x="1197.8" y="592.2" width="1.3" height="1.3"/><rect x="1197.8" y="602.5" width="1.3" height="1.3"/><rect x="1197.8" y="612.8" width="1.3" height="1.3"/><rect x="1197.8" y="623.1" width="1.3" height="1.3"/><rect x="1197.8" y="633.4" width="1.3" height="1.3"/><rect x="1197.8" y="643.7" width="1.3" height="1.3"/><rect x="1197.8" y="654.0" width="1.3" height="1.3"/><rect x="1197.8" y="664.3" width="1.3" height="1.3"/><rect x="1197.8" y="674.6" width="1.3" height="1.3"/><rect x="1197.8" y="684.9" width="1.3" height="1.3"/><rect x="1197.8" y="695.2" width="1.3" height="1.3"/><rect x="54.7" y="241.8" width="1.3" height="1.3"/><rect x="79.5" y="241.8" width="1.3" height="1.3"/><rect x="104.4" y="241.8" width="1.3" height="1.3"/><rect x="129.2" y="241.8" width="1.3" height="1.3"/><rect x="154.1" y="241.8" width="1.3" height="1.3"/><rect x="178.9" y="241.8" width="1.3" height="1.3"/><rect x="203.8" y="241.8" width="1.3" height="1.3"/><rect x="228.6" y="241.8" width="1.3" height="1.3"/><rect x="253.5" y="241.8" width="1.3" height="1.3"/><rect x="278.4" y="241.8" width="1.3" height="1.3"/><rect x="303.2" y="241.8" width="1.3" height="1.3"/><rect x="328.1" y="241.8" width="1.3" height="1.3"/><rect x="352.9" y="241.8" width="1.3" height="1.3"/><rect x="377.8" y="241.8" width="1.3" height="1.3"/><rect x="402.6" y="241.8" width="1.3" height="1.3"/><rect x="427.5" y="241.8" width="1.3" height="1.3"/><rect x="452.3" y="241.8" width="1.3" height="1.3"/><rect x="477.2" y="241.8" width="1.3" height="1.3"/><rect x="502.0" y="241.8" width="1.3" height="1.3"/><rect x="526.9" y="241.8" width="1.3" height="1.3"/><rect x="551.7" y="241.8" width="1.3" height="1.3"/><rect x="576.6" y="241.8" width="1.3" height="1.3"/><rect x="601.4" y="241.8" width="1.3" height="1.3"/><rect x="626.3" y="241.8" width="1.3" height="1.3"/><rect x="651.1" y="241.8" width="1.3" height="1.3"/><rect x="676.0" y="241.8" width="1.3" height="1.3"/><rect x="700.8" y="241.8" width="1.3" height="1.3"/><rect x="725.7" y="241.8" width="1.3" height="1.3"/><rect x="750.5" y="241.8" width="1.3" height="1.3"/><rect x="775.4" y="241.8" width="1.3" height="1.3"/><rect x="800.2" y="241.8" width="1.3" height="1.3"/><rect x="825.1" y="241.8" width="1.3" height="1.3"/><rect x="849.9" y="241.8" width="1.3" height="1.3"/><rect x="874.8" y="241.8" width="1.3" height="1.3"/><rect x="899.6" y="241.8" width="1.3" height="1.3"/><rect x="924.5" y="241.8" width="1.3" height="1.3"/><rect x="949.3" y="241.8" width="1.3" height="1.3"/><rect x="974.2" y="241.8" width="1.3" height="1.3"/><rect x="999.0" y="241.8" width="1.3" height="1.3"/><rect x="1023.9" y="241.8" width="1.3" height="1.3"/><rect x="1048.7" y="241.8" width="1.3" height="1.3"/><rect x="1073.6" y="241.8" width="1.3" height="1.3"/><rect x="1098.4" y="241.8" width="1.3" height="1.3"/><rect x="1123.3" y="241.8" width="1.3" height="1.3"/><rect x="1148.1" y="241.8" width="1.3" height="1.3"/><rect x="1173.0" y="241.8" width="1.3" height="1.3"/><rect x="1197.8" y="241.8" width="1.3" height="1.3"/><rect x="1222.6" y="241.8" width="1.3" height="1.3"/><rect x="54.7" y="293.4" width="1.3" height="1.3"/><rect x="79.5" y="293.4" width="1.3" height="1.3"/><rect x="104.4" y="293.4" width="1.3" height="1.3"/><rect x="129.2" y="293.4" width="1.3" height="1.3"/><rect x="154.1" y="293.4" width="1.3" height="1.3"/><rect x="178.9" y="293.4" width="1.3" height="1.3"/><rect x="203.8" y="293.4" width="1.3" height="1.3"/><rect x="228.6" y="293.4" width="1.3" height="1.3"/><rect x="253.5" y="293.4" width="1.3" height="1.3"/><rect x="278.4" y="293.4" width="1.3" height="1.3"/><rect x="303.2" y="293.4" width="1.3" height="1.3"/><rect x="328.1" y="293.4" width="1.3" height="1.3"/><rect x="352.9" y="293.4" width="1.3" height="1.3"/><rect x="377.8" y="293.4" width="1.3" height="1.3"/><rect x="402.6" y="293.4" width="1.3" height="1.3"/><rect x="427.5" y="293.4" width="1.3" height="1.3"/><rect x="452.3" y="293.4" width="1.3" height="1.3"/><rect x="477.2" y="293.4" width="1.3" height="1.3"/><rect x="502.0" y="293.4" width="1.3" height="1.3"/><rect x="526.9" y="293.4" width="1.3" height="1.3"/><rect x="551.7" y="293.4" width="1.3" height="1.3"/><rect x="576.6" y="293.4" width="1.3" height="1.3"/><rect x="601.4" y="293.4" width="1.3" height="1.3"/><rect x="626.3" y="293.4" width="1.3" height="1.3"/><rect x="651.1" y="293.4" width="1.3" height="1.3"/><rect x="676.0" y="293.4" width="1.3" height="1.3"/><rect x="700.8" y="293.4" width="1.3" height="1.3"/><rect x="725.7" y="293.4" width="1.3" height="1.3"/><rect x="750.5" y="293.4" width="1.3" height="1.3"/><rect x="775.4" y="293.4" width="1.3" height="1.3"/><rect x="800.2" y="293.4" width="1.3" height="1.3"/><rect x="825.1" y="293.4" width="1.3" height="1.3"/><rect x="849.9" y="293.4" width="1.3" height="1.3"/><rect x="874.8" y="293.4" width="1.3" height="1.3"/><rect x="899.6" y="293.4" width="1.3" height="1.3"/><rect x="924.5" y="293.4" width="1.3" height="1.3"/><rect x="949.3" y="293.4" width="1.3" height="1.3"/><rect x="974.2" y="293.4" width="1.3" height="1.3"/><rect x="999.0" y="293.4" width="1.3" height="1.3"/><rect x="1023.9" y="293.4" width="1.3" height="1.3"/><rect x="1048.7" y="293.4" width="1.3" height="1.3"/><rect x="1073.6" y="293.4" width="1.3" height="1.3"/><rect x="1098.4" y="293.4" width="1.3" height="1.3"/><rect x="1123.3" y="293.4" width="1.3" height="1.3"/><rect x="1148.1" y="293.4" width="1.3" height="1.3"/><rect x="1173.0" y="293.4" width="1.3" height="1.3"/><rect x="1197.8" y="293.4" width="1.3" height="1.3"/><rect x="1222.6" y="293.4" width="1.3" height="1.3"/><rect x="54.7" y="344.9" width="1.3" height="1.3"/><rect x="79.5" y="344.9" width="1.3" height="1.3"/><rect x="104.4" y="344.9" width="1.3" height="1.3"/><rect x="129.2" y="344.9" width="1.3" height="1.3"/><rect x="154.1" y="344.9" width="1.3" height="1.3"/><rect x="178.9" y="344.9" width="1.3" height="1.3"/><rect x="203.8" y="344.9" width="1.3" height="1.3"/><rect x="228.6" y="344.9" width="1.3" height="1.3"/><rect x="253.5" y="344.9" width="1.3" height="1.3"/><rect x="278.4" y="344.9" width="1.3" height="1.3"/><rect x="303.2" y="344.9" width="1.3" height="1.3"/><rect x="328.1" y="344.9" width="1.3" height="1.3"/><rect x="352.9" y="344.9" width="1.3" height="1.3"/><rect x="377.8" y="344.9" width="1.3" height="1.3"/><rect x="402.6" y="344.9" width="1.3" height="1.3"/><rect x="427.5" y="344.9" width="1.3" height="1.3"/><rect x="452.3" y="344.9" width="1.3" height="1.3"/><rect x="477.2" y="344.9" width="1.3" height="1.3"/><rect x="502.0" y="344.9" width="1.3" height="1.3"/><rect x="526.9" y="344.9" width="1.3" height="1.3"/><rect x="551.7" y="344.9" width="1.3" height="1.3"/><rect x="576.6" y="344.9" width="1.3" height="1.3"/><rect x="601.4" y="344.9" width="1.3" height="1.3"/><rect x="626.3" y="344.9" width="1.3" height="1.3"/><rect x="651.1" y="344.9" width="1.3" height="1.3"/><rect x="676.0" y="344.9" width="1.3" height="1.3"/><rect x="700.8" y="344.9" width="1.3" height="1.3"/><rect x="725.7" y="344.9" width="1.3" height="1.3"/><rect x="750.5" y="344.9" width="1.3" height="1.3"/><rect x="775.4" y="344.9" width="1.3" height="1.3"/><rect x="800.2" y="344.9" width="1.3" height="1.3"/><rect x="825.1" y="344.9" width="1.3" height="1.3"/><rect x="849.9" y="344.9" width="1.3" height="1.3"/><rect x="874.8" y="344.9" width="1.3" height="1.3"/><rect x="899.6" y="344.9" width="1.3" height="1.3"/><rect x="924.5" y="344.9" width="1.3" height="1.3"/><rect x="949.3" y="344.9" width="1.3" height="1.3"/><rect x="974.2" y="344.9" width="1.3" height="1.3"/><rect x="999.0" y="344.9" width="1.3" height="1.3"/><rect x="1023.9" y="344.9" width="1.3" height="1.3"/><rect x="1048.7" y="344.9" width="1.3" height="1.3"/><rect x="1073.6" y="344.9" width="1.3" height="1.3"/><rect x="1098.4" y="344.9" width="1.3" height="1.3"/><rect x="1123.3" y="344.9" width="1.3" height="1.3"/><rect x="1148.1" y="344.9" width="1.3" height="1.3"/><rect x="1173.0" y="344.9" width="1.3" height="1.3"/><rect x="1197.8" y="344.9" width="1.3" height="1.3"/><rect x="1222.6" y="344.9" width="1.3" height="1.3"/><rect x="54.7" y="396.4" width="1.3" height="1.3"/><rect x="79.5" y="396.4" width="1.3" height="1.3"/><rect x="104.4" y="396.4" width="1.3" height="1.3"/><rect x="129.2" y="396.4" width="1.3" height="1.3"/><rect x="154.1" y="396.4" width="1.3" height="1.3"/><rect x="178.9" y="396.4" width="1.3" height="1.3"/><rect x="203.8" y="396.4" width="1.3" height="1.3"/><rect x="228.6" y="396.4" width="1.3" height="1.3"/><rect x="253.5" y="396.4" width="1.3" height="1.3"/><rect x="278.4" y="396.4" width="1.3" height="1.3"/><rect x="303.2" y="396.4" width="1.3" height="1.3"/><rect x="328.1" y="396.4" width="1.3" height="1.3"/><rect x="352.9" y="396.4" width="1.3" height="1.3"/><rect x="377.8" y="396.4" width="1.3" height="1.3"/><rect x="402.6" y="396.4" width="1.3" height="1.3"/><rect x="427.5" y="396.4" width="1.3" height="1.3"/><rect x="452.3" y="396.4" width="1.3" height="1.3"/><rect x="477.2" y="396.4" width="1.3" height="1.3"/><rect x="502.0" y="396.4" width="1.3" height="1.3"/><rect x="526.9" y="396.4" width="1.3" height="1.3"/><rect x="551.7" y="396.4" width="1.3" height="1.3"/><rect x="576.6" y="396.4" width="1.3" height="1.3"/><rect x="601.4" y="396.4" width="1.3" height="1.3"/><rect x="626.3" y="396.4" width="1.3" height="1.3"/><rect x="651.1" y="396.4" width="1.3" height="1.3"/><rect x="676.0" y="396.4" width="1.3" height="1.3"/><rect x="700.8" y="396.4" width="1.3" height="1.3"/><rect x="725.7" y="396.4" width="1.3" height="1.3"/><rect x="750.5" y="396.4" width="1.3" height="1.3"/><rect x="775.4" y="396.4" width="1.3" height="1.3"/><rect x="800.2" y="396.4" width="1.3" height="1.3"/><rect x="825.1" y="396.4" width="1.3" height="1.3"/><rect x="849.9" y="396.4" width="1.3" height="1.3"/><rect x="874.8" y="396.4" width="1.3" height="1.3"/><rect x="899.6" y="396.4" width="1.3" height="1.3"/><rect x="924.5" y="396.4" width="1.3" height="1.3"/><rect x="949.3" y="396.4" width="1.3" height="1.3"/><rect x="974.2" y="396.4" width="1.3" height="1.3"/><rect x="999.0" y="396.4" width="1.3" height="1.3"/><rect x="1023.9" y="396.4" width="1.3" height="1.3"/><rect x="1048.7" y="396.4" width="1.3" height="1.3"/><rect x="1073.6" y="396.4" width="1.3" height="1.3"/><rect x="1098.4" y="396.4" width="1.3" height="1.3"/><rect x="1123.3" y="396.4" width="1.3" height="1.3"/><rect x="1148.1" y="396.4" width="1.3" height="1.3"/><rect x="1173.0" y="396.4" width="1.3" height="1.3"/><rect x="1197.8" y="396.4" width="1.3" height="1.3"/><rect x="1222.6" y="396.4" width="1.3" height="1.3"/><rect x="54.7" y="447.9" width="1.3" height="1.3"/><rect x="79.5" y="447.9" width="1.3" height="1.3"/><rect x="104.4" y="447.9" width="1.3" height="1.3"/><rect x="129.2" y="447.9" width="1.3" height="1.3"/><rect x="154.1" y="447.9" width="1.3" height="1.3"/><rect x="178.9" y="447.9" width="1.3" height="1.3"/><rect x="203.8" y="447.9" width="1.3" height="1.3"/><rect x="228.6" y="447.9" width="1.3" height="1.3"/><rect x="253.5" y="447.9" width="1.3" height="1.3"/><rect x="278.4" y="447.9" width="1.3" height="1.3"/><rect x="303.2" y="447.9" width="1.3" height="1.3"/><rect x="328.1" y="447.9" width="1.3" height="1.3"/><rect x="352.9" y="447.9" width="1.3" height="1.3"/><rect x="377.8" y="447.9" width="1.3" height="1.3"/><rect x="402.6" y="447.9" width="1.3" height="1.3"/><rect x="427.5" y="447.9" width="1.3" height="1.3"/><rect x="452.3" y="447.9" width="1.3" height="1.3"/><rect x="477.2" y="447.9" width="1.3" height="1.3"/><rect x="502.0" y="447.9" width="1.3" height="1.3"/><rect x="526.9" y="447.9" width="1.3" height="1.3"/><rect x="551.7" y="447.9" width="1.3" height="1.3"/><rect x="576.6" y="447.9" width="1.3" height="1.3"/><rect x="601.4" y="447.9" width="1.3" height="1.3"/><rect x="626.3" y="447.9" width="1.3" height="1.3"/><rect x="651.1" y="447.9" width="1.3" height="1.3"/><rect x="676.0" y="447.9" width="1.3" height="1.3"/><rect x="700.8" y="447.9" width="1.3" height="1.3"/><rect x="725.7" y="447.9" width="1.3" height="1.3"/><rect x="750.5" y="447.9" width="1.3" height="1.3"/><rect x="775.4" y="447.9" width="1.3" height="1.3"/><rect x="800.2" y="447.9" width="1.3" height="1.3"/><rect x="825.1" y="447.9" width="1.3" height="1.3"/><rect x="849.9" y="447.9" width="1.3" height="1.3"/><rect x="874.8" y="447.9" width="1.3" height="1.3"/><rect x="899.6" y="447.9" width="1.3" height="1.3"/><rect x="924.5" y="447.9" width="1.3" height="1.3"/><rect x="949.3" y="447.9" width="1.3" height="1.3"/><rect x="974.2" y="447.9" width="1.3" height="1.3"/><rect x="999.0" y="447.9" width="1.3" height="1.3"/><rect x="1023.9" y="447.9" width="1.3" height="1.3"/><rect x="1048.7" y="447.9" width="1.3" height="1.3"/><rect x="1073.6" y="447.9" width="1.3" height="1.3"/><rect x="1098.4" y="447.9" width="1.3" height="1.3"/><rect x="1123.3" y="447.9" width="1.3" height="1.3"/><rect x="1148.1" y="447.9" width="1.3" height="1.3"/><rect x="1173.0" y="447.9" width="1.3" height="1.3"/><rect x="1197.8" y="447.9" width="1.3" height="1.3"/><rect x="1222.6" y="447.9" width="1.3" height="1.3"/><rect x="54.7" y="499.4" width="1.3" height="1.3"/><rect x="79.5" y="499.4" width="1.3" height="1.3"/><rect x="104.4" y="499.4" width="1.3" height="1.3"/><rect x="129.2" y="499.4" width="1.3" height="1.3"/><rect x="154.1" y="499.4" width="1.3" height="1.3"/><rect x="178.9" y="499.4" width="1.3" height="1.3"/><rect x="203.8" y="499.4" width="1.3" height="1.3"/><rect x="228.6" y="499.4" width="1.3" height="1.3"/><rect x="253.5" y="499.4" width="1.3" height="1.3"/><rect x="278.4" y="499.4" width="1.3" height="1.3"/><rect x="303.2" y="499.4" width="1.3" height="1.3"/><rect x="328.1" y="499.4" width="1.3" height="1.3"/><rect x="352.9" y="499.4" width="1.3" height="1.3"/><rect x="377.8" y="499.4" width="1.3" height="1.3"/><rect x="402.6" y="499.4" width="1.3" height="1.3"/><rect x="427.5" y="499.4" width="1.3" height="1.3"/><rect x="452.3" y="499.4" width="1.3" height="1.3"/><rect x="477.2" y="499.4" width="1.3" height="1.3"/><rect x="502.0" y="499.4" width="1.3" height="1.3"/><rect x="526.9" y="499.4" width="1.3" height="1.3"/><rect x="551.7" y="499.4" width="1.3" height="1.3"/><rect x="576.6" y="499.4" width="1.3" height="1.3"/><rect x="601.4" y="499.4" width="1.3" height="1.3"/><rect x="626.3" y="499.4" width="1.3" height="1.3"/><rect x="651.1" y="499.4" width="1.3" height="1.3"/><rect x="676.0" y="499.4" width="1.3" height="1.3"/><rect x="700.8" y="499.4" width="1.3" height="1.3"/><rect x="725.7" y="499.4" width="1.3" height="1.3"/><rect x="750.5" y="499.4" width="1.3" height="1.3"/><rect x="775.4" y="499.4" width="1.3" height="1.3"/><rect x="800.2" y="499.4" width="1.3" height="1.3"/><rect x="825.1" y="499.4" width="1.3" height="1.3"/><rect x="849.9" y="499.4" width="1.3" height="1.3"/><rect x="874.8" y="499.4" width="1.3" height="1.3"/><rect x="899.6" y="499.4" width="1.3" height="1.3"/><rect x="924.5" y="499.4" width="1.3" height="1.3"/><rect x="949.3" y="499.4" width="1.3" height="1.3"/><rect x="974.2" y="499.4" width="1.3" height="1.3"/><rect x="999.0" y="499.4" width="1.3" height="1.3"/><rect x="1023.9" y="499.4" width="1.3" height="1.3"/><rect x="1048.7" y="499.4" width="1.3" height="1.3"/><rect x="1073.6" y="499.4" width="1.3" height="1.3"/><rect x="1098.4" y="499.4" width="1.3" height="1.3"/><rect x="1123.3" y="499.4" width="1.3" height="1.3"/><rect x="1148.1" y="499.4" width="1.3" height="1.3"/><rect x="1173.0" y="499.4" width="1.3" height="1.3"/><rect x="1197.8" y="499.4" width="1.3" height="1.3"/><rect x="1222.6" y="499.4" width="1.3" height="1.3"/><rect x="54.7" y="550.9" width="1.3" height="1.3"/><rect x="79.5" y="550.9" width="1.3" height="1.3"/><rect x="104.4" y="550.9" width="1.3" height="1.3"/><rect x="129.2" y="550.9" width="1.3" height="1.3"/><rect x="154.1" y="550.9" width="1.3" height="1.3"/><rect x="178.9" y="550.9" width="1.3" height="1.3"/><rect x="203.8" y="550.9" width="1.3" height="1.3"/><rect x="228.6" y="550.9" width="1.3" height="1.3"/><rect x="253.5" y="550.9" width="1.3" height="1.3"/><rect x="278.4" y="550.9" width="1.3" height="1.3"/><rect x="303.2" y="550.9" width="1.3" height="1.3"/><rect x="328.1" y="550.9" width="1.3" height="1.3"/><rect x="352.9" y="550.9" width="1.3" height="1.3"/><rect x="377.8" y="550.9" width="1.3" height="1.3"/><rect x="402.6" y="550.9" width="1.3" height="1.3"/><rect x="427.5" y="550.9" width="1.3" height="1.3"/><rect x="452.3" y="550.9" width="1.3" height="1.3"/><rect x="477.2" y="550.9" width="1.3" height="1.3"/><rect x="502.0" y="550.9" width="1.3" height="1.3"/><rect x="526.9" y="550.9" width="1.3" height="1.3"/><rect x="551.7" y="550.9" width="1.3" height="1.3"/><rect x="576.6" y="550.9" width="1.3" height="1.3"/><rect x="601.4" y="550.9" width="1.3" height="1.3"/><rect x="626.3" y="550.9" width="1.3" height="1.3"/><rect x="651.1" y="550.9" width="1.3" height="1.3"/><rect x="676.0" y="550.9" width="1.3" height="1.3"/><rect x="700.8" y="550.9" width="1.3" height="1.3"/><rect x="725.7" y="550.9" width="1.3" height="1.3"/><rect x="750.5" y="550.9" width="1.3" height="1.3"/><rect x="775.4" y="550.9" width="1.3" height="1.3"/><rect x="800.2" y="550.9" width="1.3" height="1.3"/><rect x="825.1" y="550.9" width="1.3" height="1.3"/><rect x="849.9" y="550.9" width="1.3" height="1.3"/><rect x="874.8" y="550.9" width="1.3" height="1.3"/><rect x="899.6" y="550.9" width="1.3" height="1.3"/><rect x="924.5" y="550.9" width="1.3" height="1.3"/><rect x="949.3" y="550.9" width="1.3" height="1.3"/><rect x="974.2" y="550.9" width="1.3" height="1.3"/><rect x="999.0" y="550.9" width="1.3" height="1.3"/><rect x="1023.9" y="550.9" width="1.3" height="1.3"/><rect x="1048.7" y="550.9" width="1.3" height="1.3"/><rect x="1073.6" y="550.9" width="1.3" height="1.3"/><rect x="1098.4" y="550.9" width="1.3" height="1.3"/><rect x="1123.3" y="550.9" width="1.3" height="1.3"/><rect x="1148.1" y="550.9" width="1.3" height="1.3"/><rect x="1173.0" y="550.9" width="1.3" height="1.3"/><rect x="1197.8" y="550.9" width="1.3" height="1.3"/><rect x="1222.6" y="550.9" width="1.3" height="1.3"/><rect x="54.7" y="602.4" width="1.3" height="1.3"/><rect x="79.5" y="602.4" width="1.3" height="1.3"/><rect x="104.4" y="602.4" width="1.3" height="1.3"/><rect x="129.2" y="602.4" width="1.3" height="1.3"/><rect x="154.1" y="602.4" width="1.3" height="1.3"/><rect x="178.9" y="602.4" width="1.3" height="1.3"/><rect x="203.8" y="602.4" width="1.3" height="1.3"/><rect x="228.6" y="602.4" width="1.3" height="1.3"/><rect x="253.5" y="602.4" width="1.3" height="1.3"/><rect x="278.4" y="602.4" width="1.3" height="1.3"/><rect x="303.2" y="602.4" width="1.3" height="1.3"/><rect x="328.1" y="602.4" width="1.3" height="1.3"/><rect x="352.9" y="602.4" width="1.3" height="1.3"/><rect x="377.8" y="602.4" width="1.3" height="1.3"/><rect x="402.6" y="602.4" width="1.3" height="1.3"/><rect x="427.5" y="602.4" width="1.3" height="1.3"/><rect x="452.3" y="602.4" width="1.3" height="1.3"/><rect x="477.2" y="602.4" width="1.3" height="1.3"/><rect x="502.0" y="602.4" width="1.3" height="1.3"/><rect x="526.9" y="602.4" width="1.3" height="1.3"/><rect x="551.7" y="602.4" width="1.3" height="1.3"/><rect x="576.6" y="602.4" width="1.3" height="1.3"/><rect x="601.4" y="602.4" width="1.3" height="1.3"/><rect x="626.3" y="602.4" width="1.3" height="1.3"/><rect x="651.1" y="602.4" width="1.3" height="1.3"/><rect x="676.0" y="602.4" width="1.3" height="1.3"/><rect x="700.8" y="602.4" width="1.3" height="1.3"/><rect x="725.7" y="602.4" width="1.3" height="1.3"/><rect x="750.5" y="602.4" width="1.3" height="1.3"/><rect x="775.4" y="602.4" width="1.3" height="1.3"/><rect x="800.2" y="602.4" width="1.3" height="1.3"/><rect x="825.1" y="602.4" width="1.3" height="1.3"/><rect x="849.9" y="602.4" width="1.3" height="1.3"/><rect x="874.8" y="602.4" width="1.3" height="1.3"/><rect x="899.6" y="602.4" width="1.3" height="1.3"/><rect x="924.5" y="602.4" width="1.3" height="1.3"/><rect x="949.3" y="602.4" width="1.3" height="1.3"/><rect x="974.2" y="602.4" width="1.3" height="1.3"/><rect x="999.0" y="602.4" width="1.3" height="1.3"/><rect x="1023.9" y="602.4" width="1.3" height="1.3"/><rect x="1048.7" y="602.4" width="1.3" height="1.3"/><rect x="1073.6" y="602.4" width="1.3" height="1.3"/><rect x="1098.4" y="602.4" width="1.3" height="1.3"/><rect x="1123.3" y="602.4" width="1.3" height="1.3"/><rect x="1148.1" y="602.4" width="1.3" height="1.3"/><rect x="1173.0" y="602.4" width="1.3" height="1.3"/><rect x="1197.8" y="602.4" width="1.3" height="1.3"/><rect x="1222.6" y="602.4" width="1.3" height="1.3"/><rect x="54.7" y="653.9" width="1.3" height="1.3"/><rect x="79.5" y="653.9" width="1.3" height="1.3"/><rect x="104.4" y="653.9" width="1.3" height="1.3"/><rect x="129.2" y="653.9" width="1.3" height="1.3"/><rect x="154.1" y="653.9" width="1.3" height="1.3"/><rect x="178.9" y="653.9" width="1.3" height="1.3"/><rect x="203.8" y="653.9" width="1.3" height="1.3"/><rect x="228.6" y="653.9" width="1.3" height="1.3"/><rect x="253.5" y="653.9" width="1.3" height="1.3"/><rect x="278.4" y="653.9" width="1.3" height="1.3"/><rect x="303.2" y="653.9" width="1.3" height="1.3"/><rect x="328.1" y="653.9" width="1.3" height="1.3"/><rect x="352.9" y="653.9" width="1.3" height="1.3"/><rect x="377.8" y="653.9" width="1.3" height="1.3"/><rect x="402.6" y="653.9" width="1.3" height="1.3"/><rect x="427.5" y="653.9" width="1.3" height="1.3"/><rect x="452.3" y="653.9" width="1.3" height="1.3"/><rect x="477.2" y="653.9" width="1.3" height="1.3"/><rect x="502.0" y="653.9" width="1.3" height="1.3"/><rect x="526.9" y="653.9" width="1.3" height="1.3"/><rect x="551.7" y="653.9" width="1.3" height="1.3"/><rect x="576.6" y="653.9" width="1.3" height="1.3"/><rect x="601.4" y="653.9" width="1.3" height="1.3"/><rect x="626.3" y="653.9" width="1.3" height="1.3"/><rect x="651.1" y="653.9" width="1.3" height="1.3"/><rect x="676.0" y="653.9" width="1.3" height="1.3"/><rect x="700.8" y="653.9" width="1.3" height="1.3"/><rect x="725.7" y="653.9" width="1.3" height="1.3"/><rect x="750.5" y="653.9" width="1.3" height="1.3"/><rect x="775.4" y="653.9" width="1.3" height="1.3"/><rect x="800.2" y="653.9" width="1.3" height="1.3"/><rect x="825.1" y="653.9" width="1.3" height="1.3"/><rect x="849.9" y="653.9" width="1.3" height="1.3"/><rect x="874.8" y="653.9" width="1.3" height="1.3"/><rect x="899.6" y="653.9" width="1.3" height="1.3"/><rect x="924.5" y="653.9" width="1.3" height="1.3"/><rect x="949.3" y="653.9" width="1.3" height="1.3"/><rect x="974.2" y="653.9" width="1.3" height="1.3"/><rect x="999.0" y="653.9" width="1.3" height="1.3"/><rect x="1023.9" y="653.9" width="1.3" height="1.3"/><rect x="1048.7" y="653.9" width="1.3" height="1.3"/><rect x="1073.6" y="653.9" width="1.3" height="1.3"/><rect x="1098.4" y="653.9" width="1.3" height="1.3"/><rect x="1123.3" y="653.9" width="1.3" height="1.3"/><rect x="1148.1" y="653.9" width="1.3" height="1.3"/><rect x="1173.0" y="653.9" width="1.3" height="1.3"/><rect x="1197.8" y="653.9" width="1.3" height="1.3"/><rect x="1222.6" y="653.9" width="1.3" height="1.3"/><rect x="54.6" y="191" width="1.4" height="2"/><rect x="79.5" y="191" width="1.4" height="2"/><rect x="104.4" y="191" width="1.4" height="2"/><rect x="129.2" y="191" width="1.4" height="2"/><rect x="154.1" y="191" width="1.4" height="2"/><rect x="178.9" y="191" width="1.4" height="2"/><rect x="203.8" y="191" width="1.4" height="2"/><rect x="228.6" y="191" width="1.4" height="2"/><rect x="253.4" y="191" width="1.4" height="2"/><rect x="278.3" y="191" width="1.4" height="2"/><rect x="303.2" y="191" width="1.4" height="2"/><rect x="328.0" y="191" width="1.4" height="2"/><rect x="352.9" y="191" width="1.4" height="2"/><rect x="377.7" y="191" width="1.4" height="2"/><rect x="402.6" y="191" width="1.4" height="2"/><rect x="427.4" y="191" width="1.4" height="2"/><rect x="452.3" y="191" width="1.4" height="2"/><rect x="477.1" y="191" width="1.4" height="2"/><rect x="502.0" y="191" width="1.4" height="2"/><rect x="526.8" y="191" width="1.4" height="2"/><rect x="551.7" y="191" width="1.4" height="2"/><rect x="576.5" y="191" width="1.4" height="2"/><rect x="601.4" y="191" width="1.4" height="2"/><rect x="626.2" y="191" width="1.4" height="2"/><rect x="651.1" y="191" width="1.4" height="2"/><rect x="675.9" y="191" width="1.4" height="2"/><rect x="700.8" y="191" width="1.4" height="2"/><rect x="725.6" y="191" width="1.4" height="2"/><rect x="750.5" y="191" width="1.4" height="2"/><rect x="775.3" y="191" width="1.4" height="2"/><rect x="800.2" y="191" width="1.4" height="2"/><rect x="825.0" y="191" width="1.4" height="2"/><rect x="849.9" y="191" width="1.4" height="2"/><rect x="874.7" y="191" width="1.4" height="2"/><rect x="899.6" y="191" width="1.4" height="2"/><rect x="924.4" y="191" width="1.4" height="2"/><rect x="949.3" y="191" width="1.4" height="2"/><rect x="974.1" y="191" width="1.4" height="2"/><rect x="999.0" y="191" width="1.4" height="2"/><rect x="1023.8" y="191" width="1.4" height="2"/><rect x="1048.7" y="191" width="1.4" height="2"/><rect x="1073.5" y="191" width="1.4" height="2"/><rect x="1098.4" y="191" width="1.4" height="2"/><rect x="1123.2" y="191" width="1.4" height="2"/><rect x="1148.1" y="191" width="1.4" height="2"/><rect x="1172.9" y="191" width="1.4" height="2"/><rect x="1197.8" y="191" width="1.4" height="2"/><rect x="1222.6" y="191" width="1.4" height="2"/><rect x="1247.4" y="191" width="1.4" height="2"/><rect x="1272.3" y="191" width="1.4" height="2"/></g>
 <!-- overview -->
 <line x1="35" y1="159.8" x2="1277" y2="159.8" stroke="#a8a8a8" stroke-width="1.6" stroke-dasharray="3.5 3.6"/>
 <g fill="#9a48b8" opacity="0.82"><path d="M35.0 143.2 L37.0 144.0 L39.0 143.3 L41.0 144.2 L43.0 143.8 L45.0 143.0 L47.0 143.9 L49.0 144.2 L51.0 143.3 L53.0 144.5 L55.0 144.4 L57.0 143.0 L59.0 143.7 L61.0 144.5 L63.0 143.2 L65.0 143.1 L67.0 143.7 L69.0 143.5 L71.0 143.2 L73.0 144.3 L75.0 144.2 L77.0 144.5 L79.0 144.2 L81.0 143.9 L83.0 143.1 L85.0 144.3 L87.0 144.4 L89.0 143.6 L91.0 143.7 L93.0 144.5 L95.0 143.0 L97.0 144.1 L99.0 143.7 L101.0 143.8 L103.0 143.3 L105.0 143.8 L107.0 143.2 L109.0 143.5 L111.0 143.5 L113.0 143.4 L115.0 143.1 L117.0 144.2 L119.0 144.0 L121.0 144.4 L123.0 143.6 L125.0 144.5 L127.0 144.4 L129.0 143.6 L131.0 144.4 L133.0 143.1 L135.0 144.2 L137.0 144.3 L139.0 143.4 L141.0 143.6 L143.0 143.1 L145.0 144.4 L147.0 144.1 L149.0 143.4 L151.0 143.8 L153.0 143.0 L155.0 144.3 L157.0 144.4 L157.0 149.4 L155.0 149.7 L153.0 148.8 L151.0 149.6 L149.0 150.0 L147.0 149.2 L145.0 150.0 L143.0 149.0 L141.0 148.7 L139.0 148.9 L137.0 148.5 L135.0 149.2 L133.0 149.7 L131.0 148.7 L129.0 148.8 L127.0 149.2 L125.0 149.4 L123.0 150.0 L121.0 150.0 L119.0 149.5 L117.0 149.0 L115.0 149.8 L113.0 148.6 L111.0 149.4 L109.0 149.9 L107.0 148.7 L105.0 149.4 L103.0 149.4 L101.0 149.6 L99.0 149.2 L97.0 150.0 L95.0 148.6 L93.0 149.1 L91.0 149.1 L89.0 149.0 L87.0 149.9 L85.0 148.8 L83.0 149.2 L81.0 149.6 L79.0 149.7 L77.0 149.9 L75.0 148.8 L73.0 148.8 L71.0 148.5 L69.0 149.2 L67.0 149.3 L65.0 149.9 L63.0 149.8 L61.0 149.0 L59.0 148.6 L57.0 149.0 L55.0 149.4 L53.0 149.6 L51.0 148.5 L49.0 148.8 L47.0 148.6 L45.0 149.0 L43.0 148.8 L41.0 149.3 L39.0 149.7 L37.0 149.2 L35.0 149.6Z"/><path d="M720.0 145.5 L722.0 144.0 L724.0 144.2 L726.0 145.0 L728.0 145.4 L730.0 145.5 L732.0 144.9 L732.0 149.9 L730.0 149.0 L728.0 148.8 L726.0 149.0 L724.0 148.6 L722.0 150.0 L720.0 148.7Z"/><path d="M750.0 143.9 L752.0 143.7 L754.0 143.1 L756.0 142.8 L758.0 142.1 L760.0 142.0 L762.0 141.5 L764.0 142.5 L766.0 142.0 L768.0 141.6 L770.0 142.1 L772.0 141.8 L774.0 142.2 L776.0 141.7 L778.0 141.4 L780.0 140.9 L782.0 141.1 L784.0 141.2 L786.0 141.2 L788.0 140.5 L790.0 141.5 L792.0 140.4 L794.0 140.3 L796.0 141.2 L798.0 140.9 L800.0 140.9 L802.0 141.8 L804.0 141.1 L806.0 142.0 L808.0 142.2 L810.0 141.9 L812.0 142.1 L814.0 141.6 L816.0 141.6 L818.0 141.7 L820.0 142.9 L822.0 143.2 L824.0 143.0 L826.0 143.5 L828.0 144.0 L830.0 142.9 L832.0 143.5 L834.0 144.3 L836.0 143.3 L838.0 143.9 L840.0 144.0 L842.0 143.6 L844.0 144.7 L846.0 143.9 L848.0 144.7 L850.0 144.5 L852.0 144.5 L854.0 144.4 L856.0 143.8 L858.0 144.5 L860.0 144.1 L862.0 143.3 L864.0 143.6 L866.0 144.3 L868.0 144.4 L870.0 143.6 L872.0 143.0 L874.0 143.2 L876.0 143.4 L878.0 142.7 L880.0 142.2 L882.0 142.1 L884.0 141.9 L886.0 142.2 L888.0 142.4 L890.0 142.3 L892.0 141.9 L894.0 141.4 L896.0 140.9 L898.0 142.0 L900.0 141.8 L902.0 141.4 L904.0 140.9 L906.0 140.8 L908.0 140.8 L910.0 140.9 L912.0 141.0 L914.0 140.6 L916.0 140.4 L918.0 140.7 L920.0 141.1 L922.0 141.1 L924.0 141.3 L926.0 141.9 L928.0 142.0 L930.0 142.3 L932.0 140.9 L934.0 141.5 L936.0 141.4 L938.0 141.5 L940.0 142.1 L942.0 142.1 L944.0 143.2 L946.0 142.2 L948.0 143.6 L950.0 142.3 L952.0 142.6 L954.0 143.3 L956.0 143.6 L958.0 144.1 L960.0 143.9 L962.0 143.3 L964.0 144.5 L966.0 143.9 L968.0 144.3 L970.0 144.7 L972.0 144.0 L974.0 144.6 L976.0 143.9 L978.0 145.0 L980.0 143.6 L982.0 144.5 L984.0 143.3 L986.0 144.3 L988.0 143.9 L990.0 143.6 L992.0 143.4 L994.0 144.0 L996.0 143.3 L998.0 143.0 L1000.0 143.0 L1002.0 143.5 L1004.0 143.5 L1006.0 142.8 L1008.0 142.6 L1010.0 143.1 L1012.0 142.0 L1014.0 142.5 L1016.0 141.7 L1018.0 141.0 L1020.0 142.3 L1022.0 141.8 L1024.0 141.0 L1026.0 141.4 L1028.0 141.3 L1030.0 141.2 L1032.0 140.4 L1034.0 140.5 L1036.0 140.7 L1038.0 141.4 L1040.0 141.1 L1042.0 140.8 L1044.0 140.7 L1046.0 141.1 L1048.0 141.7 L1050.0 142.1 L1052.0 141.9 L1054.0 142.2 L1056.0 142.0 L1058.0 142.1 L1060.0 142.6 L1062.0 141.5 L1064.0 141.6 L1066.0 142.9 L1068.0 143.3 L1070.0 142.7 L1072.0 143.0 L1074.0 143.3 L1076.0 142.7 L1078.0 143.7 L1080.0 144.0 L1082.0 143.2 L1084.0 144.0 L1086.0 144.6 L1088.0 144.4 L1090.0 144.1 L1092.0 144.6 L1094.0 143.6 L1096.0 143.9 L1098.0 144.2 L1100.0 144.1 L1102.0 143.5 L1104.0 144.4 L1106.0 144.6 L1108.0 144.5 L1110.0 143.4 L1112.0 144.0 L1114.0 144.0 L1116.0 143.7 L1118.0 143.6 L1120.0 143.6 L1122.0 143.7 L1124.0 142.7 L1126.0 143.5 L1128.0 143.5 L1130.0 142.0 L1132.0 142.3 L1134.0 142.3 L1136.0 142.6 L1138.0 141.6 L1140.0 142.5 L1142.0 141.2 L1144.0 141.2 L1146.0 141.6 L1148.0 141.8 L1150.0 140.7 L1152.0 141.4 L1154.0 141.0 L1156.0 141.7 L1158.0 141.4 L1160.0 141.5 L1162.0 140.3 L1164.0 141.0 L1166.0 140.9 L1168.0 140.9 L1170.0 140.6 L1172.0 141.9 L1174.0 141.9 L1176.0 141.7 L1178.0 141.9 L1180.0 141.8 L1182.0 142.5 L1184.0 142.6 L1186.0 141.8 L1188.0 142.3 L1190.0 142.6 L1192.0 142.7 L1194.0 142.6 L1196.0 143.0 L1198.0 142.8 L1200.0 142.4 L1202.0 143.0 L1204.0 143.4 L1206.0 144.3 L1208.0 144.0 L1210.0 143.5 L1212.0 144.1 L1214.0 144.8 L1216.0 144.7 L1218.0 143.5 L1220.0 144.5 L1222.0 144.9 L1224.0 144.5 L1226.0 145.0 L1228.0 144.5 L1230.0 144.5 L1232.0 144.1 L1234.0 144.5 L1236.0 143.7 L1238.0 144.3 L1240.0 143.0 L1242.0 142.9 L1244.0 144.0 L1246.0 142.6 L1248.0 142.9 L1250.0 143.4 L1252.0 143.2 L1254.0 143.2 L1256.0 143.1 L1258.0 142.0 L1260.0 142.6 L1262.0 142.4 L1264.0 142.4 L1266.0 142.0 L1268.0 141.6 L1270.0 142.1 L1272.0 141.3 L1274.0 141.9 L1276.0 140.7 L1276.0 146.3 L1274.0 147.3 L1272.0 146.7 L1270.0 147.8 L1268.0 147.8 L1266.0 146.8 L1264.0 147.7 L1262.0 148.4 L1260.0 148.4 L1258.0 148.1 L1256.0 148.7 L1254.0 148.9 L1252.0 148.8 L1250.0 148.7 L1248.0 149.0 L1246.0 149.4 L1244.0 149.0 L1242.0 149.3 L1240.0 148.9 L1238.0 149.0 L1236.0 149.4 L1234.0 149.1 L1232.0 150.0 L1230.0 149.7 L1228.0 150.4 L1226.0 149.4 L1224.0 150.8 L1222.0 150.8 L1220.0 149.6 L1218.0 150.1 L1216.0 149.5 L1214.0 149.7 L1212.0 149.3 L1210.0 149.0 L1208.0 150.1 L1206.0 149.9 L1204.0 149.0 L1202.0 148.5 L1200.0 148.7 L1198.0 148.3 L1196.0 148.5 L1194.0 148.9 L1192.0 149.1 L1190.0 148.4 L1188.0 148.8 L1186.0 147.9 L1184.0 147.2 L1182.0 147.8 L1180.0 148.2 L1178.0 147.8 L1176.0 146.6 L1174.0 147.6 L1172.0 146.3 L1170.0 147.6 L1168.0 147.3 L1166.0 147.1 L1164.0 147.3 L1162.0 146.7 L1160.0 146.5 L1158.0 146.8 L1156.0 146.5 L1154.0 146.2 L1152.0 147.4 L1150.0 147.2 L1148.0 147.5 L1146.0 148.1 L1144.0 146.7 L1142.0 147.6 L1140.0 147.6 L1138.0 147.6 L1136.0 147.3 L1134.0 148.9 L1132.0 147.8 L1130.0 148.5 L1128.0 149.3 L1126.0 149.1 L1124.0 149.1 L1122.0 149.6 L1120.0 149.9 L1118.0 149.4 L1116.0 150.0 L1114.0 149.5 L1112.0 150.4 L1110.0 149.2 L1108.0 150.3 L1106.0 149.4 L1104.0 150.1 L1102.0 149.7 L1100.0 150.6 L1098.0 150.6 L1096.0 150.1 L1094.0 150.4 L1092.0 150.1 L1090.0 149.9 L1088.0 150.2 L1086.0 148.8 L1084.0 149.0 L1082.0 148.7 L1080.0 148.8 L1078.0 148.5 L1076.0 149.4 L1074.0 149.4 L1072.0 149.5 L1070.0 148.2 L1068.0 148.6 L1066.0 148.6 L1064.0 147.4 L1062.0 148.4 L1060.0 148.5 L1058.0 147.0 L1056.0 148.2 L1054.0 146.8 L1052.0 147.3 L1050.0 146.4 L1048.0 146.7 L1046.0 147.0 L1044.0 146.5 L1042.0 147.6 L1040.0 146.3 L1038.0 147.0 L1036.0 147.0 L1034.0 147.0 L1032.0 146.8 L1030.0 146.3 L1028.0 147.0 L1026.0 146.4 L1024.0 146.6 L1022.0 147.5 L1020.0 147.8 L1018.0 147.3 L1016.0 146.9 L1014.0 147.6 L1012.0 147.2 L1010.0 148.4 L1008.0 148.9 L1006.0 148.3 L1004.0 148.6 L1002.0 148.9 L1000.0 148.4 L998.0 149.3 L996.0 148.8 L994.0 149.5 L992.0 149.3 L990.0 148.9 L988.0 149.2 L986.0 150.2 L984.0 149.7 L982.0 150.4 L980.0 149.8 L978.0 150.8 L976.0 150.6 L974.0 150.7 L972.0 150.2 L970.0 149.8 L968.0 149.9 L966.0 149.5 L964.0 149.3 L962.0 149.0 L960.0 149.3 L958.0 149.6 L956.0 149.7 L954.0 149.5 L952.0 149.4 L950.0 149.0 L948.0 148.2 L946.0 149.3 L944.0 148.6 L942.0 147.5 L940.0 148.3 L938.0 148.3 L936.0 148.3 L934.0 147.4 L932.0 148.0 L930.0 147.6 L928.0 146.8 L926.0 146.7 L924.0 146.9 L922.0 146.4 L920.0 146.3 L918.0 147.4 L916.0 146.4 L914.0 146.4 L912.0 146.9 L910.0 147.3 L908.0 146.7 L906.0 147.6 L904.0 146.7 L902.0 146.7 L900.0 147.4 L898.0 147.2 L896.0 148.0 L894.0 148.1 L892.0 147.7 L890.0 147.8 L888.0 147.9 L886.0 147.4 L884.0 148.2 L882.0 148.7 L880.0 149.2 L878.0 149.2 L876.0 148.1 L874.0 149.0 L872.0 149.3 L870.0 149.4 L868.0 148.8 L866.0 149.2 L864.0 149.8 L862.0 150.0 L860.0 150.4 L858.0 150.0 L856.0 149.8 L854.0 149.6 L852.0 150.5 L850.0 149.9 L848.0 150.6 L846.0 150.6 L844.0 149.8 L842.0 149.7 L840.0 150.3 L838.0 149.1 L836.0 148.9 L834.0 150.2 L832.0 148.8 L830.0 148.5 L828.0 148.8 L826.0 148.6 L824.0 149.5 L822.0 149.3 L820.0 149.2 L818.0 148.7 L816.0 147.9 L814.0 148.7 L812.0 148.5 L810.0 148.3 L808.0 147.1 L806.0 147.7 L804.0 146.6 L802.0 147.2 L800.0 146.7 L798.0 146.8 L796.0 147.4 L794.0 146.5 L792.0 146.2 L790.0 146.3 L788.0 146.5 L786.0 146.3 L784.0 146.8 L782.0 147.2 L780.0 146.3 L778.0 147.3 L776.0 146.9 L774.0 147.0 L772.0 147.5 L770.0 147.6 L768.0 146.9 L766.0 148.1 L764.0 147.8 L762.0 147.4 L760.0 148.2 L758.0 148.3 L756.0 148.0 L754.0 148.6 L752.0 148.2 L750.0 149.7Z"/></g>
 <g fill="none" stroke="#8a4aa8" stroke-width="1.3"><path d="M158.5 147.0 L168.7 147.0 L178.8 147.1 L189.0 147.1 L199.2 147.1 L209.4 147.2 L219.5 147.2 L229.7 147.2 L239.9 147.2 L250.1 147.3 L260.2 147.3 L270.4 147.3 L280.6 147.4 L290.7 147.4 L300.9 147.4 L311.1 147.5 L321.3 147.5 L331.4 147.5 L341.6 147.6 L351.8 147.6 L362.0 147.6 L372.1 147.6 L382.3 147.7 L392.5 147.7 L402.6 147.7 L412.8 147.8 L423.0 147.8 L433.2 147.8 L443.3 147.9 L453.5 147.9 L463.7 147.9 L473.9 148.0 L484.0 148.0 L494.2 148.0 L504.4 148.1 L514.5 148.1 L524.7 148.1 L534.9 148.1 L545.1 148.2 L555.2 148.2 L565.4 148.2 L575.6 148.3 L585.8 148.3 L595.9 148.3 L606.1 148.4 L616.3 148.4 L626.4 148.4 L636.6 148.5 L646.8 148.5 L657.0 148.5 L667.1 148.5 L677.3 148.6 L687.5 148.6 L697.7 148.6 L707.8 148.7 L718.0 148.7"/><path d="M733.0 148.7 L735.1 148.7 L737.2 148.7 L739.4 148.7 L741.5 148.7 L743.6 148.7 L745.8 148.7 L747.9 148.7 L750.0 148.7"/></g>
 <g fill="none" stroke="#d44a62" stroke-width="1.6"><path d="M35.0 83.0 L39.1 83.0 L43.2 83.2 L47.4 83.0 L51.5 83.0 L55.6 83.0 L59.7 82.9 L63.8 83.0 L67.9 83.1 L72.0 83.1 L76.2 82.8 L80.3 82.9 L84.4 82.8 L88.5 83.1 L92.6 83.1 L96.8 82.8 L100.9 83.2 L105.0 83.2 L109.1 83.1 L113.2 83.0 L117.3 82.9 L121.4 82.8 L125.6 83.0 L129.7 82.8 L133.8 82.9 L137.9 82.9 L142.0 82.8 L146.2 83.0 L150.3 83.0 L154.4 83.1 L158.5 83.0"/><path d="M159.0 161.6 L163.0 161.4 L167.0 161.7 L171.1 161.5 L175.1 161.5 L179.1 161.5 L183.1 161.4 L187.2 161.4 L191.2 161.5 L195.2 161.4 L199.2 161.6 L203.2 161.5 L207.3 161.5 L211.3 161.4 L215.3 161.4 L219.3 161.6 L223.3 161.7 L227.4 161.4 L231.4 161.6 L235.4 161.4 L239.4 161.6 L243.5 161.4 L247.5 161.5 L251.5 161.5 L255.5 161.6 L259.5 161.6 L263.6 161.3 L267.6 161.3 L271.6 161.5 L275.6 161.4 L279.6 161.4 L283.7 161.7 L287.7 161.7 L291.7 161.3 L295.7 161.3 L299.8 161.6 L303.8 161.7 L307.8 161.7 L311.8 161.6 L315.8 161.6 L319.9 161.5 L323.9 161.5 L327.9 161.6 L331.9 161.3 L335.9 161.6 L340.0 161.6 L344.0 161.4 L348.0 161.6 L352.0 161.4 L356.1 161.7 L360.1 161.6 L364.1 161.5 L368.1 161.5 L372.1 161.7 L376.2 161.4 L380.2 161.4 L384.2 161.6 L388.2 161.7 L392.3 161.4 L396.3 161.6 L400.3 161.5 L404.3 161.6 L408.3 161.5 L412.4 161.7 L416.4 161.5 L420.4 161.7 L424.4 161.7 L428.4 161.4 L432.5 161.7 L436.5 161.6 L440.5 161.4 L444.5 161.5 L448.6 161.4 L452.6 161.3 L456.6 161.3 L460.6 161.4 L464.6 161.6 L468.7 161.3 L472.7 161.5 L476.7 161.6 L480.7 161.4 L484.7 161.6 L488.8 161.5 L492.8 161.6 L496.8 161.5 L500.8 161.7 L504.9 161.5 L508.9 161.4 L512.9 161.3 L516.9 161.4 L520.9 161.3 L525.0 161.7 L529.0 161.4 L533.0 161.6 L537.0 161.6 L541.1 161.5 L545.1 161.3 L549.1 161.4 L553.1 161.7 L557.1 161.5 L561.2 161.6 L565.2 161.3 L569.2 161.3 L573.2 161.4 L577.2 161.4 L581.3 161.4 L585.3 161.6 L589.3 161.5 L593.3 161.5 L597.4 161.4 L601.4 161.5 L605.4 161.4 L609.4 161.5 L613.4 161.5 L617.5 161.6 L621.5 161.7 L625.5 161.4 L629.5 161.5 L633.5 161.3 L637.6 161.6 L641.6 161.5 L645.6 161.5 L649.6 161.5 L653.7 161.3 L657.7 161.7 L661.7 161.3 L665.7 161.4 L669.7 161.5 L673.8 161.7 L677.8 161.6 L681.8 161.7 L685.8 161.4 L689.8 161.5 L693.9 161.5 L697.9 161.4 L701.9 161.3 L705.9 161.4 L710.0 161.3 L714.0 161.3 L718.0 161.5"/><path d="M720.0 86.0 L722.5 84.0 L725.0 82.0 L727.0 81.5 L729.0 81.0 L731.0 80.5 L733.0 80.0"/><path d="M733.0 161.5 L735.1 161.5 L737.1 161.5 L739.2 161.5 L741.2 161.5 L743.3 161.5 L745.4 161.5 L747.4 161.5 L749.5 161.5"/><path d="M751.0 85.0 L753.2 84.4 L755.5 83.8 L757.8 83.1 L760.0 82.5 L762.0 82.2 L764.0 81.8 L766.0 81.5 L768.0 81.1 L770.0 80.8 L772.0 80.6 L774.0 80.5 L776.0 80.3 L778.0 80.2 L780.0 80.0"/><path d="M780.0 79.9 L782.0 80.0 L784.0 80.1 L786.0 80.0 L788.0 80.0 L790.0 80.4 L792.0 80.5 L794.0 81.0 L796.0 81.2 L798.0 81.4 L800.0 81.7 L802.0 82.1 L804.0 82.2 L806.0 82.7 L808.0 82.9 L810.0 83.6 L812.0 83.6 L814.0 84.3 L816.0 84.3 L818.0 84.9 L820.0 85.1 L822.0 85.4 L824.0 85.9 L826.0 85.8 L828.0 86.1 L830.0 86.7 L832.0 86.7 L834.0 86.7 L836.0 87.2 L838.0 87.2 L840.0 86.9 L842.0 87.1 L844.0 86.9 L846.0 86.9 L848.0 87.0 L850.0 86.6 L852.0 86.7 L854.0 86.2 L856.0 86.0 L858.0 86.0 L860.0 85.6 L862.0 85.3 L864.0 85.1 L866.0 84.7 L868.0 84.3 L870.0 83.8 L872.0 83.7 L874.0 83.4 L876.0 83.1 L878.0 82.6 L880.0 82.1 L882.0 81.8 L884.0 81.6 L886.0 81.3 L888.0 80.8 L890.0 80.6 L892.0 80.5 L894.0 80.3 L896.0 80.3 L898.0 80.0 L900.0 79.8 L902.0 80.0 L904.0 79.9 L906.0 79.9 L908.0 79.9 L910.0 80.1 L912.0 80.2 L914.0 80.5 L916.0 80.4 L918.0 80.8 L920.0 80.9 L922.0 81.4 L924.0 81.5 L926.0 81.9 L928.0 82.2 L930.0 82.7 L932.0 82.8 L934.0 83.4 L936.0 83.6 L938.0 84.0 L940.0 84.4 L942.0 85.0 L944.0 85.1 L946.0 85.6 L948.0 85.6 L950.0 86.2 L952.0 86.2 L954.0 86.4 L956.0 86.8 L958.0 87.0 L960.0 86.8 L962.0 86.9 L964.0 87.2 L966.0 87.0 L968.0 87.0 L970.0 86.8 L972.0 86.7 L974.0 86.8 L976.0 86.8 L978.0 86.6 L980.0 86.2 L982.0 85.8 L984.0 85.6 L986.0 85.5 L988.0 85.2 L990.0 84.8 L992.0 84.3 L994.0 84.0 L996.0 83.6 L998.0 83.3 L1000.0 82.8 L1002.0 82.7 L1004.0 82.4 L1006.0 81.7 L1008.0 81.5 L1010.0 81.4 L1012.0 80.9 L1014.0 80.9 L1016.0 80.5 L1018.0 80.4 L1020.0 80.3 L1022.0 79.9 L1024.0 79.9 L1026.0 79.8 L1028.0 80.0 L1030.0 80.0 L1032.0 79.8 L1034.0 80.2 L1036.0 80.2 L1038.0 80.3 L1040.0 80.5 L1042.0 81.0 L1044.0 81.1 L1046.0 81.4 L1048.0 81.8 L1050.0 82.1 L1052.0 82.4 L1054.0 82.6 L1056.0 83.0 L1058.0 83.5 L1060.0 83.8 L1062.0 84.1 L1064.0 84.4 L1066.0 84.7 L1068.0 85.2 L1070.0 85.4 L1072.0 85.5 L1074.0 86.1 L1076.0 86.4 L1078.0 86.6 L1080.0 86.8 L1082.0 87.0 L1084.0 87.0 L1086.0 87.1 L1088.0 87.0 L1090.0 86.9 L1092.0 87.0 L1094.0 86.9 L1096.0 87.1 L1098.0 86.9 L1100.0 86.7 L1102.0 86.5 L1104.0 86.1 L1106.0 86.0 L1108.0 85.8 L1110.0 85.4 L1112.0 85.0 L1114.0 84.7 L1116.0 84.3 L1118.0 84.1 L1120.0 83.5 L1122.0 83.2 L1124.0 82.9 L1126.0 82.7 L1128.0 82.4 L1130.0 82.0 L1132.0 81.8 L1134.0 81.2 L1136.0 80.8 L1138.0 80.8 L1140.0 80.5 L1142.0 80.2 L1144.0 80.3 L1146.0 80.0 L1148.0 79.9 L1150.0 79.9 L1152.0 80.1 L1154.0 79.7 L1156.0 79.9 L1158.0 80.0 L1160.0 80.1 L1162.0 80.3 L1164.0 80.4 L1166.0 80.9 L1168.0 81.0 L1170.0 81.4 L1172.0 81.4 L1174.0 81.9 L1176.0 82.3 L1178.0 82.7 L1180.0 82.8 L1182.0 83.3 L1184.0 83.8 L1186.0 84.2 L1188.0 84.3 L1190.0 84.7 L1192.0 85.2 L1194.0 85.3 L1196.0 85.8 L1198.0 86.0 L1200.0 86.4 L1202.0 86.5 L1204.0 86.7 L1206.0 86.7 L1208.0 87.0 L1210.0 86.9 L1212.0 87.1 L1214.0 87.0 L1216.0 87.0 L1218.0 86.9 L1220.0 86.8 L1222.0 86.8 L1224.0 86.6 L1226.0 86.3 L1228.0 86.4 L1230.0 85.9 L1232.0 85.9 L1234.0 85.5 L1236.0 85.1 L1238.0 84.9 L1240.0 84.6 L1242.0 84.0 L1244.0 83.6 L1246.0 83.4 L1248.0 83.1 L1250.0 82.7 L1252.0 82.4 L1254.0 81.9 L1256.0 81.7 L1258.0 81.2 L1260.0 81.0 L1262.0 80.7 L1264.0 80.5 L1266.0 80.3 L1268.0 80.3 L1270.0 79.9 L1272.0 79.9 L1274.0 79.8 L1276.0 80.1"/></g>
 <g fill="none" stroke="#2cc8d6" stroke-width="2"><path d="M35.0 159.7 L38.0 159.9 L41.0 160.0 L44.0 159.6 L47.0 159.9 L50.1 159.8 L53.1 159.8 L56.1 159.5 L59.1 159.4 L62.1 159.6 L65.1 159.8 L68.1 159.6 L71.1 159.7 L74.2 159.6 L77.2 159.9 L80.2 160.0 L83.2 159.6 L86.2 160.0 L89.2 159.4 L92.2 159.9 L95.2 159.9 L98.3 159.5 L101.3 159.8 L104.3 159.7 L107.3 160.0 L110.3 159.5 L113.3 159.7 L116.3 159.9 L119.3 159.8 L122.4 159.6 L125.4 159.4 L128.4 160.0 L131.4 159.7 L134.4 160.0 L137.4 159.5 L140.4 159.9 L143.4 159.9 L146.5 160.0 L149.5 159.4 L152.5 159.6 L155.5 159.4 L158.5 159.7"/><path d="M159.0 160.1 L163.0 159.8 L167.0 159.9 L171.1 159.2 L175.1 159.3 L179.1 159.2 L183.1 159.0 L187.2 158.5 L191.2 158.7 L195.2 158.2 L199.2 157.9 L203.2 157.7 L207.3 157.9 L211.3 157.7 L215.3 157.5 L219.3 157.3 L223.3 157.0 L227.4 156.8 L231.4 156.4 L235.4 156.1 L239.4 155.9 L243.5 156.0 L247.5 155.9 L251.5 155.4 L255.5 155.4 L259.5 155.3 L263.6 155.1 L267.6 154.9 L271.6 154.5 L275.6 154.4 L279.6 154.2 L283.7 154.2 L287.7 153.8 L291.7 153.6 L295.7 153.4 L299.8 153.0 L303.8 152.9 L307.8 152.8 L311.8 152.6 L315.8 152.2 L319.9 152.2 L323.9 152.3 L327.9 152.0 L331.9 151.5 L335.9 151.5 L340.0 151.2 L344.0 151.1 L348.0 150.8 L352.0 150.8 L356.1 150.7 L360.1 150.3 L364.1 149.9 L368.1 150.0 L372.1 149.8 L376.2 149.5 L380.2 149.2 L384.2 149.0 L388.2 148.9 L392.3 148.9 L396.3 148.6 L400.3 148.4 L404.3 147.9 L408.3 147.9 L412.4 147.9 L416.4 147.3 L420.4 147.2 L424.4 147.3 L428.4 147.1 L432.5 146.8 L436.5 146.5 L440.5 146.5 L444.5 146.4 L448.6 146.0 L452.6 145.9 L456.6 145.6 L460.6 145.3 L464.6 145.4 L468.7 145.0 L472.7 144.8 L476.7 144.6 L480.7 144.5 L484.7 144.0 L488.8 143.9 L492.8 144.1 L496.8 143.8 L500.8 143.4 L504.9 143.1 L508.9 143.3 L512.9 142.9 L516.9 142.5 L520.9 142.7 L525.0 142.1 L529.0 142.1 L533.0 141.9 L537.0 141.5 L541.1 141.6 L545.1 141.6 L549.1 140.9 L553.1 141.0 L557.1 140.8 L561.2 140.4 L565.2 140.6 L569.2 140.2 L573.2 139.8 L577.2 139.7 L581.3 139.4 L585.3 139.4 L589.3 139.0 L593.3 138.9 L597.4 138.8 L601.4 138.7 L605.4 138.3 L609.4 138.2 L613.4 138.0 L617.5 138.1 L621.5 137.9 L625.5 137.3 L629.5 137.3 L633.5 136.9 L637.6 137.0 L641.6 136.7 L645.6 136.2 L649.6 136.2 L653.7 136.3 L657.7 135.8 L661.7 135.8 L665.7 135.7 L669.7 135.5 L673.8 134.9 L677.8 134.8 L681.8 134.7 L685.8 134.5 L689.8 134.1 L693.9 134.3 L697.9 133.9 L701.9 133.6 L705.9 133.4 L710.0 133.5 L714.0 133.4 L718.0 133.0"/><path d="M718.5 159.9 L722.1 159.8 L725.8 160.2 L729.4 160.1 L733.0 160.0"/><path d="M733.0 132.9 L736.4 132.6 L739.8 132.2 L743.2 131.6 L746.6 131.0 L750.0 130.5"/><path d="M750.5 159.3 L753.5 159.6 L756.5 159.4 L759.5 159.3 L762.5 159.5 L765.5 159.5 L768.6 159.5 L771.6 159.5 L774.6 159.4 L777.6 159.4 L780.6 159.6 L783.6 159.4 L786.6 159.6 L789.6 159.7 L792.6 159.7 L795.6 159.8 L798.6 159.3 L801.6 159.3 L804.7 159.6 L807.7 159.5 L810.7 159.3 L813.7 159.6 L816.7 159.7 L819.7 159.7 L822.7 159.3 L825.7 159.4 L828.7 159.2 L831.7 159.8 L834.7 159.3 L837.7 159.6 L840.8 159.5 L843.8 159.6 L846.8 159.5 L849.8 159.7 L852.8 159.6 L855.8 159.4 L858.8 159.3 L861.8 159.5 L864.8 159.8 L867.8 159.3 L870.8 159.6 L873.9 159.6 L876.9 159.3 L879.9 159.3 L882.9 159.6 L885.9 159.5 L888.9 159.4 L891.9 159.5 L894.9 159.3 L897.9 159.6 L900.9 159.6 L903.9 159.5 L906.9 159.4 L910.0 159.7 L913.0 159.7 L916.0 159.5 L919.0 159.3 L922.0 159.3 L925.0 159.3 L928.0 159.2 L931.0 159.6 L934.0 159.5 L937.0 159.3 L940.0 159.7 L943.0 159.6 L946.1 159.7 L949.1 159.7 L952.1 159.6 L955.1 159.5 L958.1 159.8 L961.1 159.3 L964.1 159.6 L967.1 159.7 L970.1 159.5 L973.1 159.7 L976.1 159.3 L979.2 159.4 L982.2 159.4 L985.2 159.4 L988.2 159.6 L991.2 159.3 L994.2 159.4 L997.2 159.7 L1000.2 159.4 L1003.2 159.3 L1006.2 159.8 L1009.2 159.5 L1012.2 159.2 L1015.3 159.5 L1018.3 159.3 L1021.3 159.3 L1024.3 159.6 L1027.3 159.6 L1030.3 159.5 L1033.3 159.5 L1036.3 159.5 L1039.3 159.5 L1042.3 159.3 L1045.3 159.7 L1048.3 159.7 L1051.4 159.5 L1054.4 159.4 L1057.4 159.6 L1060.4 159.5 L1063.4 159.4 L1066.4 159.7 L1069.4 159.7 L1072.4 159.3 L1075.4 159.3 L1078.4 159.7 L1081.4 159.8 L1084.5 159.6 L1087.5 159.4 L1090.5 159.2 L1093.5 159.7 L1096.5 159.8 L1099.5 159.7 L1102.5 159.6 L1105.5 159.8 L1108.5 159.5 L1111.5 159.8 L1114.5 159.4 L1117.5 159.2 L1120.6 159.7 L1123.6 159.6 L1126.6 159.7 L1129.6 159.3 L1132.6 159.4 L1135.6 159.6 L1138.6 159.2 L1141.6 159.4 L1144.6 159.6 L1147.6 159.8 L1150.6 159.6 L1153.6 159.4 L1156.7 159.4 L1159.7 159.5 L1162.7 159.6 L1165.7 159.8 L1168.7 159.2 L1171.7 159.8 L1174.7 159.7 L1177.7 159.2 L1180.7 159.4 L1183.7 159.4 L1186.7 159.3 L1189.8 159.3 L1192.8 159.3 L1195.8 159.6 L1198.8 159.5 L1201.8 159.3 L1204.8 159.7 L1207.8 159.7 L1210.8 159.4 L1213.8 159.7 L1216.8 159.7 L1219.8 159.5 L1222.8 159.3 L1225.9 159.6 L1228.9 159.7 L1231.9 159.7 L1234.9 159.8 L1237.9 159.3 L1240.9 159.8 L1243.9 159.3 L1246.9 159.4 L1249.9 159.5 L1252.9 159.6 L1255.9 159.5 L1258.9 159.7 L1262.0 159.7 L1265.0 159.7 L1268.0 159.6 L1271.0 159.5 L1274.0 159.2 L1277.0 159.5"/></g>
 <g fill="none" stroke="#d44a62" stroke-width="1"><path d="M158.6 83 L158.6 161.5"/><path d="M718.6 161.5 L718.6 49 L719.5 86"/><path d="M750.3 161.5 L750.3 47 L751 85"/></g>
 <g fill="none" stroke="#2cc8d6" stroke-width="1"><path d="M158.5 160 L158.5 140"/><path d="M718.3 133 L718.3 160"/><path d="M750.2 130.5 L750.2 159.5"/></g>
 <g fill="none" stroke="#e4e028" stroke-width="1.7"><path d="M35.0 131.4 L38.0 131.6 L41.0 131.6 L44.0 131.7 L47.0 131.3 L50.1 131.3 L53.1 131.3 L56.1 131.3 L59.1 131.6 L62.1 131.3 L65.1 131.5 L68.1 131.3 L71.1 131.4 L74.2 131.5 L77.2 131.7 L80.2 131.6 L83.2 131.2 L86.2 131.4 L89.2 131.3 L92.2 131.7 L95.2 131.7 L98.3 131.7 L101.3 131.7 L104.3 131.6 L107.3 131.8 L110.3 131.7 L113.3 131.4 L116.3 131.7 L119.3 131.5 L122.4 131.7 L125.4 131.5 L128.4 131.5 L131.4 131.4 L134.4 131.5 L137.4 131.4 L140.4 131.3 L143.4 131.7 L146.5 131.7 L149.5 131.8 L152.5 131.6 L155.5 131.5 L158.5 131.5"/><path d="M159.5 80.3 L162.5 80.6 L165.5 80.2 L168.5 80.3 L171.5 80.3 L174.5 80.6 L177.5 80.3 L180.5 80.5 L183.5 80.2 L186.5 80.2 L189.5 80.5 L192.5 80.4 L195.5 80.5 L198.5 80.4 L201.5 80.4 L204.5 80.2 L207.5 80.2 L210.5 80.1 L213.5 80.2 L216.6 80.4 L219.6 80.5 L222.6 80.5 L225.6 80.5 L228.6 80.6 L231.6 80.5 L234.6 80.1 L237.6 80.6 L240.6 80.4 L243.6 80.4 L246.6 80.2 L249.6 80.2 L252.6 80.1 L255.6 80.2 L258.6 80.6 L261.6 80.3 L264.6 80.6 L267.6 80.7 L270.6 80.5 L273.6 80.2 L276.6 80.2 L279.6 80.7 L282.6 80.4 L285.6 80.3 L288.6 80.7 L291.6 80.2 L294.6 80.6 L297.6 80.1 L300.6 80.4 L303.6 80.3 L306.6 80.7 L309.6 80.4 L312.6 80.4 L315.6 80.6 L318.6 80.5 L321.6 80.6 L324.6 80.6 L327.7 80.1 L330.7 80.2 L333.7 80.3 L336.7 80.3 L339.7 80.6 L342.7 80.2 L345.7 80.7 L348.7 80.6 L351.7 80.5 L354.7 80.3 L357.7 80.6 L360.7 80.5 L363.7 80.6 L366.7 80.3 L369.7 80.6 L372.7 80.2 L375.7 80.4 L378.7 80.2 L381.7 80.3 L384.7 80.7 L387.7 80.7 L390.7 80.2 L393.7 80.5 L396.7 80.1 L399.7 80.3 L402.7 80.4 L405.7 80.2 L408.7 80.1 L411.7 80.5 L414.7 80.6 L417.7 80.2 L420.7 80.3 L423.7 80.5 L426.7 80.5 L429.7 80.5 L432.7 80.3 L435.7 80.7 L438.8 80.6 L441.8 80.6 L444.8 80.5 L447.8 80.2 L450.8 80.7 L453.8 80.5 L456.8 80.4 L459.8 80.5 L462.8 80.6 L465.8 80.2 L468.8 80.2 L471.8 80.3 L474.8 80.2 L477.8 80.5 L480.8 80.2 L483.8 80.5 L486.8 80.5 L489.8 80.5 L492.8 80.6 L495.8 80.4 L498.8 80.2 L501.8 80.6 L504.8 80.5 L507.8 80.4 L510.8 80.6 L513.8 80.6 L516.8 80.5 L519.8 80.3 L522.8 80.2 L525.8 80.1 L528.8 80.1 L531.8 80.1 L534.8 80.5 L537.8 80.2 L540.8 80.5 L543.8 80.3 L546.8 80.2 L549.8 80.7 L552.9 80.3 L555.9 80.2 L558.9 80.5 L561.9 80.5 L564.9 80.7 L567.9 80.6 L570.9 80.3 L573.9 80.5 L576.9 80.2 L579.9 80.3 L582.9 80.4 L585.9 80.2 L588.9 80.6 L591.9 80.6 L594.9 80.3 L597.9 80.6 L600.9 80.3 L603.9 80.2 L606.9 80.3 L609.9 80.2 L612.9 80.5 L615.9 80.3 L618.9 80.1 L621.9 80.1 L624.9 80.4 L627.9 80.6 L630.9 80.2 L633.9 80.6 L636.9 80.6 L639.9 80.1 L642.9 80.3 L645.9 80.6 L648.9 80.6 L651.9 80.5 L654.9 80.1 L657.9 80.2 L660.9 80.5 L664.0 80.2 L667.0 80.2 L670.0 80.1 L673.0 80.4 L676.0 80.2 L679.0 80.6 L682.0 80.1 L685.0 80.5 L688.0 80.7 L691.0 80.2 L694.0 80.3 L697.0 80.6 L700.0 80.2 L703.0 80.4 L706.0 80.2 L709.0 80.3 L712.0 80.4 L715.0 80.1 L718.0 80.4"/><path d="M733.0 80.2 L735.0 80.5 L737.0 80.5 L739.0 80.7 L741.0 80.3 L743.0 80.3 L745.0 80.5 L747.0 80.5 L749.0 80.4"/><path d="M718.0 131.0 L720.0 130.7 L722.0 131.2 L724.0 130.8 L726.0 131.1 L728.0 130.7 L730.0 130.9 L732.0 131.0 L734.0 131.1 L736.0 131.2 L738.0 130.9 L740.0 130.9 L742.0 130.9 L744.0 131.1 L746.0 131.2 L748.0 130.8 L750.0 131.0"/><path d="M750.0 131.5 L752.0 131.8 L754.0 132.0 L756.0 132.2 L758.0 132.4 L760.0 132.7 L762.0 132.7 L764.0 133.1 L766.0 132.8 L768.0 133.2 L770.0 133.3 L772.0 133.3 L774.0 133.7 L776.0 133.5 L778.0 133.9 L780.0 134.0 L782.0 133.5 L784.0 133.9 L786.0 133.8 L788.0 133.7 L790.0 133.2 L792.0 133.3 L794.0 133.3 L796.0 133.0 L798.0 132.8 L800.0 132.7 L802.0 132.5 L804.0 132.6 L806.0 132.1 L808.0 132.0 L810.0 131.9 L812.0 131.9 L814.0 131.3 L816.0 130.9 L818.0 131.2 L820.0 131.0 L822.0 130.7 L824.0 130.4 L826.0 130.1 L828.0 129.9 L830.0 129.8 L832.0 129.8 L834.0 129.5 L836.0 129.7 L838.0 129.7 L840.0 129.2 L842.0 129.7 L844.0 129.5 L846.0 129.8 L848.0 129.6 L850.0 129.8 L852.0 129.7 L854.0 129.9 L856.0 129.9 L858.0 129.8 L860.0 130.0 L862.0 130.2 L864.0 130.5 L866.0 130.7 L868.0 131.0 L870.0 131.3 L872.0 131.3 L874.0 131.5 L876.0 131.8 L878.0 132.3 L880.0 132.4 L882.0 132.5 L884.0 132.8 L886.0 132.6 L888.0 132.7 L890.0 132.9 L892.0 133.0 L894.0 133.1 L896.0 133.6 L898.0 133.8 L900.0 133.4 L902.0 133.8 L904.0 134.0 L906.0 133.9 L908.0 133.5 L910.0 133.7 L912.0 133.4 L914.0 133.3 L916.0 133.1 L918.0 133.3 L920.0 133.4 L922.0 132.7 L924.0 132.6 L926.0 132.6 L928.0 132.2 L930.0 132.2 L932.0 132.2 L934.0 131.8 L936.0 131.3 L938.0 131.1 L940.0 131.0 L942.0 131.1 L944.0 131.0 L946.0 130.6 L948.0 130.2 L950.0 130.1 L952.0 130.0 L954.0 129.7 L956.0 129.6 L958.0 129.7 L960.0 129.8 L962.0 129.4 L964.0 129.8 L966.0 129.7 L968.0 129.5 L970.0 129.4 L972.0 129.4 L974.0 129.7 L976.0 129.9 L978.0 130.0 L980.0 129.8 L982.0 130.0 L984.0 129.9 L986.0 130.3 L988.0 130.4 L990.0 130.5 L992.0 130.7 L994.0 131.5 L996.0 131.2 L998.0 131.6 L1000.0 131.8 L1002.0 132.0 L1004.0 132.3 L1006.0 132.4 L1008.0 132.6 L1010.0 132.5 L1012.0 133.0 L1014.0 133.2 L1016.0 133.4 L1018.0 133.3 L1020.0 133.5 L1022.0 133.7 L1024.0 133.8 L1026.0 133.4 L1028.0 133.6 L1030.0 133.5 L1032.0 133.8 L1034.0 133.6 L1036.0 133.5 L1038.0 133.3 L1040.0 133.4 L1042.0 133.4 L1044.0 133.2 L1046.0 132.8 L1048.0 132.8 L1050.0 132.7 L1052.0 132.2 L1054.0 132.5 L1056.0 131.8 L1058.0 131.9 L1060.0 131.4 L1062.0 131.7 L1064.0 131.3 L1066.0 130.8 L1068.0 130.8 L1070.0 130.8 L1072.0 130.6 L1074.0 130.4 L1076.0 130.2 L1078.0 130.1 L1080.0 130.1 L1082.0 129.7 L1084.0 129.7 L1086.0 129.8 L1088.0 129.5 L1090.0 129.3 L1092.0 129.5 L1094.0 129.4 L1096.0 129.7 L1098.0 129.8 L1100.0 129.9 L1102.0 129.6 L1104.0 129.6 L1106.0 130.3 L1108.0 130.3 L1110.0 130.7 L1112.0 130.7 L1114.0 131.0 L1116.0 130.7 L1118.0 130.9 L1120.0 131.4 L1122.0 131.7 L1124.0 131.5 L1126.0 132.2 L1128.0 132.0 L1130.0 132.2 L1132.0 132.5 L1134.0 132.6 L1136.0 132.7 L1138.0 132.8 L1140.0 133.0 L1142.0 133.1 L1144.0 133.6 L1146.0 133.7 L1148.0 133.8 L1150.0 133.6 L1152.0 133.8 L1154.0 133.5 L1156.0 133.9 L1158.0 133.6 L1160.0 133.4 L1162.0 133.4 L1164.0 133.2 L1166.0 133.4 L1168.0 133.1 L1170.0 132.7 L1172.0 132.7 L1174.0 132.4 L1176.0 132.7 L1178.0 132.2 L1180.0 132.2 L1182.0 131.9 L1184.0 131.6 L1186.0 131.6 L1188.0 131.3 L1190.0 130.7 L1192.0 131.1 L1194.0 130.5 L1196.0 130.5 L1198.0 130.2 L1200.0 130.4 L1202.0 129.8 L1204.0 129.6 L1206.0 129.5 L1208.0 129.6 L1210.0 129.8 L1212.0 129.5 L1214.0 129.8 L1216.0 129.3 L1218.0 129.8 L1220.0 129.4 L1222.0 129.8 L1224.0 129.5 L1226.0 129.8 L1228.0 130.0 L1230.0 130.3 L1232.0 130.1 L1234.0 130.6 L1236.0 130.3 L1238.0 131.0 L1240.0 130.9 L1242.0 131.1 L1244.0 131.6 L1246.0 131.4 L1248.0 131.8 L1250.0 132.0 L1252.0 132.0 L1254.0 132.2 L1256.0 132.5 L1258.0 132.6 L1260.0 133.0 L1262.0 133.0 L1264.0 133.0 L1266.0 133.5 L1268.0 133.7 L1270.0 133.6 L1272.0 133.5 L1274.0 133.5 L1276.0 134.0"/></g>
 <g fill="none" stroke="#98b838" stroke-width="1.3"><path d="M750.0 131.1 L752.0 130.6 L754.0 131.0 L756.0 130.8 L758.0 131.2 L760.0 130.8 L762.0 131.2 L764.0 131.2 L766.0 131.3 L768.0 131.4 L770.0 131.0 L772.0 131.1 L774.0 131.3 L776.0 131.1 L778.0 131.1 L780.0 131.1 L782.0 131.4 L784.0 131.5 L786.0 131.4 L788.0 131.2 L790.0 131.5 L792.0 131.3 L794.0 131.2 L796.0 131.3 L798.0 131.2 L800.0 131.1 L802.0 131.3 L804.0 131.2 L806.0 131.3 L808.0 131.4 L810.0 131.2 L812.0 131.1 L814.0 131.3 L816.0 131.3 L818.0 131.1 L820.0 131.3 L822.0 130.8 L824.0 130.8 L826.0 130.8 L828.0 131.1 L830.0 131.0 L832.0 131.0 L834.0 130.7 L836.0 130.8 L838.0 131.0 L840.0 130.6 L842.0 130.6 L844.0 130.5 L846.0 130.7 L848.0 130.9 L850.0 130.7 L852.0 130.7 L854.0 130.7 L856.0 130.5 L858.0 130.9 L860.0 130.6 L862.0 130.6 L864.0 130.6 L866.0 130.9 L868.0 130.7 L870.0 131.0 L872.0 130.7 L874.0 130.8 L876.0 130.7 L878.0 131.1 L880.0 131.1 L882.0 131.0 L884.0 130.8 L886.0 131.0 L888.0 131.0 L890.0 131.3 L892.0 131.3 L894.0 131.3 L896.0 131.1 L898.0 131.0 L900.0 131.4 L902.0 131.5 L904.0 131.1 L906.0 131.3 L908.0 131.3 L910.0 131.5 L912.0 131.1 L914.0 131.1 L916.0 131.5 L918.0 131.3 L920.0 131.3 L922.0 131.4 L924.0 131.3 L926.0 131.4 L928.0 131.1 L930.0 131.0 L932.0 131.0 L934.0 131.1 L936.0 131.2 L938.0 131.1 L940.0 131.0 L942.0 131.1 L944.0 131.1 L946.0 131.1 L948.0 130.9 L950.0 131.1 L952.0 131.1 L954.0 131.1 L956.0 131.1 L958.0 130.6 L960.0 130.9 L962.0 130.7 L964.0 130.7 L966.0 130.8 L968.0 130.6 L970.0 130.6 L972.0 131.0 L974.0 130.6 L976.0 130.9 L978.0 130.8 L980.0 130.6 L982.0 130.6 L984.0 130.8 L986.0 130.8 L988.0 130.7 L990.0 130.5 L992.0 130.6 L994.0 131.0 L996.0 130.9 L998.0 130.7 L1000.0 131.0 L1002.0 130.9 L1004.0 130.9 L1006.0 131.2 L1008.0 130.8 L1010.0 130.8 L1012.0 131.0 L1014.0 131.2 L1016.0 131.1 L1018.0 131.1 L1020.0 131.4 L1022.0 131.1 L1024.0 131.4 L1026.0 131.0 L1028.0 131.4 L1030.0 131.1 L1032.0 131.4 L1034.0 131.5 L1036.0 131.4 L1038.0 131.3 L1040.0 131.3 L1042.0 131.4 L1044.0 131.2 L1046.0 131.2 L1048.0 131.3 L1050.0 131.3 L1052.0 131.0 L1054.0 131.2 L1056.0 131.2 L1058.0 131.0 L1060.0 131.3 L1062.0 131.3 L1064.0 131.0 L1066.0 131.3 L1068.0 131.3 L1070.0 131.1 L1072.0 130.9 L1074.0 130.8 L1076.0 130.7 L1078.0 130.8 L1080.0 131.1 L1082.0 130.6 L1084.0 131.0 L1086.0 130.9 L1088.0 130.9 L1090.0 130.5 L1092.0 130.8 L1094.0 130.6 L1096.0 130.8 L1098.0 130.9 L1100.0 130.8 L1102.0 130.7 L1104.0 130.9 L1106.0 130.6 L1108.0 130.5 L1110.0 130.9 L1112.0 130.5 L1114.0 130.7 L1116.0 130.7 L1118.0 131.0 L1120.0 130.8 L1122.0 130.9 L1124.0 130.9 L1126.0 130.9 L1128.0 130.9 L1130.0 130.9 L1132.0 131.0 L1134.0 131.0 L1136.0 131.0 L1138.0 131.3 L1140.0 131.3 L1142.0 131.0 L1144.0 131.4 L1146.0 131.0 L1148.0 131.1 L1150.0 131.4 L1152.0 131.1 L1154.0 131.3 L1156.0 131.5 L1158.0 131.3 L1160.0 131.3 L1162.0 131.1 L1164.0 131.3 L1166.0 131.3 L1168.0 131.4 L1170.0 131.2 L1172.0 131.4 L1174.0 131.2 L1176.0 131.3 L1178.0 131.4 L1180.0 131.0 L1182.0 131.4 L1184.0 131.1 L1186.0 131.1 L1188.0 131.3 L1190.0 131.1 L1192.0 131.1 L1194.0 130.9 L1196.0 130.8 L1198.0 131.1 L1200.0 130.9 L1202.0 131.0 L1204.0 131.0 L1206.0 130.9 L1208.0 130.7 L1210.0 131.0 L1212.0 130.7 L1214.0 130.6 L1216.0 130.9 L1218.0 130.9 L1220.0 130.5 L1222.0 130.9 L1224.0 130.8 L1226.0 130.6 L1228.0 130.7 L1230.0 130.9 L1232.0 130.5 L1234.0 130.8 L1236.0 130.6 L1238.0 130.6 L1240.0 131.0 L1242.0 131.0 L1244.0 130.9 L1246.0 131.0 L1248.0 130.8 L1250.0 130.9 L1252.0 131.0 L1254.0 131.1 L1256.0 131.1 L1258.0 131.0 L1260.0 131.1 L1262.0 131.0 L1264.0 131.3 L1266.0 131.3 L1268.0 131.3 L1270.0 131.1 L1272.0 131.1 L1274.0 131.5 L1276.0 131.2"/></g>
 <g fill="none" stroke="#d8b040" stroke-width="0.8" opacity="0.75"><path d="M158.8 131.5 L158.8 71 L160 80.4"/><path d="M718 80.4 L718.5 131"/><path d="M749 80.4 L749.5 131"/></g>
 <line x1="719.5" y1="114.4" x2="744" y2="114.4" stroke="#d8c820" stroke-width="1.2" stroke-dasharray="4 3"/>
 <rect x="727" y="40" width="8.5" height="133" fill="#a8a8a8"/>
 <line x1="731.2" y1="41" x2="731.2" y2="173" stroke="#1a1a1a" stroke-width="2" stroke-dasharray="3 3"/>
 <line x1="731.2" y1="44" x2="731.2" y2="173" stroke="#d8d040" stroke-width="2" stroke-dasharray="3 9"/>
 <!-- trigger marker -->
 <path d="M151.7 40.4 L165.6 40.4 L158.7 46.5Z" fill="#f0901c"/>
 <path d="M152.6 48.2 H164.8 V62 H161.5 L158.7 66.5 L155.9 62 H152.6Z" fill="#000" stroke="#f0901c" stroke-width="2" stroke-linejoin="round"/>
 <text x="158.7" y="59.3" font-size="10.5" font-weight="bold" fill="#f0901c" text-anchor="middle" font-family="Liberation Sans">T</text>
 <!-- overview markers -->
 <path d="M36.8 115.2 H47 L51.3 120.5 L47 125.8 H36.8Z" fill="#333322" stroke="#a8a040" stroke-width="1"/>
 <text x="43.5" y="123.3" font-size="7.5" font-weight="bold" fill="#d4cc50" text-anchor="middle" font-family="Liberation Sans">C1</text>
 <path d="M36.8 142.6 H47 L50.5 147.3 L47 152 H36.8Z" fill="#2a1a30" stroke="#5a2a6a" stroke-width="1"/>
 <text x="43.5" y="150.2" font-size="7.2" font-weight="bold" fill="#e8e0f0" text-anchor="middle" font-family="Liberation Sans">M2</text>
 <path d="M36.5 154.8 H47 L51.3 160 L47 165.3 H36.5Z" fill="#2cc8d6"/>
 <text x="43.5" y="163" font-size="7.5" font-weight="bold" fill="#1a3a40" text-anchor="middle" font-family="Liberation Sans">C2</text>
 <!-- overview corner icon -->


 <!-- zoom pane -->
 <line x1="35" y1="654" x2="1262" y2="654" stroke="#bdbdbd" stroke-width="1" stroke-dasharray="4 3"/>
 <line x1="510.3" y1="191" x2="510.3" y2="705" stroke="#c8b41c" stroke-width="1.2" stroke-dasharray="4 3"/>
 <line x1="763.5" y1="191" x2="763.5" y2="705" stroke="#c8b41c" stroke-width="1.2" stroke-dasharray="4 3"/>
 <line x1="35" y1="387" x2="50" y2="387" stroke="#1a8a90" stroke-width="1.2"/>
 <path d="M35.0 548.2 L36.6 549.5 L38.9 548.7 L41.6 548.7 L44.4 548.4 L46.9 548.2 L49.3 548.4 L51.7 548.0 L54.1 547.6 L56.5 547.5 L58.9 547.3 L61.3 548.2 L63.7 548.4 L66.0 549.1 L68.4 548.4 L70.8 548.2 L73.2 548.5 L75.6 548.1 L78.0 546.9 L80.4 548.7 L82.8 547.8 L85.2 548.2 L87.5 547.9 L89.9 549.9 L92.3 548.8 L94.7 548.3 L97.1 547.4 L99.5 548.6 L101.9 547.5 L104.3 548.8 L106.7 547.2 L109.0 548.0 L111.4 548.7 L113.8 547.6 L116.2 548.2 L118.6 548.2 L121.0 548.7 L123.4 547.8 L125.8 548.5 L128.2 549.4 L130.5 547.2 L132.9 547.6 L135.3 548.4 L137.7 547.7 L140.1 547.3 L142.5 549.0 L144.9 548.7 L147.3 548.8 L149.6 548.8 L152.0 548.6 L154.4 547.6 L156.8 546.6 L159.2 548.4 L161.6 547.5 L164.0 548.2 L166.4 548.4 L168.8 547.3 L171.1 547.9 L173.5 549.2 L175.9 548.6 L178.3 547.1 L180.7 548.0 L183.1 548.1 L185.5 548.5 L187.9 548.6 L190.2 548.1 L192.6 548.0 L195.0 548.7 L197.4 547.3 L199.8 548.9 L202.2 548.4 L204.6 547.8 L207.0 547.8 L209.4 548.3 L211.7 547.2 L214.1 546.7 L216.5 548.4 L218.9 549.1 L221.3 548.0 L223.7 548.2 L226.1 548.1 L228.5 547.5 L230.9 548.4 L233.2 548.6 L235.6 548.2 L238.0 548.7 L240.4 547.5 L242.8 548.3 L245.2 547.7 L247.6 547.8 L250.0 548.3 L252.3 548.2 L254.7 548.7 L257.1 548.5 L259.5 547.4 L261.9 548.9 L264.3 547.2 L266.7 548.1 L269.1 548.3 L271.5 548.1 L273.8 548.4 L276.2 548.1 L278.6 547.5 L281.0 548.6 L283.4 548.1 L285.8 547.5 L288.2 548.1 L290.6 548.1 L293.0 548.3 L295.3 547.8 L297.7 548.2 L300.1 548.0 L302.5 549.1 L304.9 547.9 L307.3 548.9 L309.7 548.1 L312.1 548.8 L314.4 549.5 L316.8 547.9 L319.2 548.2 L321.6 547.6 L324.0 547.7 L326.4 547.8 L328.8 548.2 L331.2 548.7 L333.6 548.7 L335.9 547.8 L338.3 548.2 L340.7 547.2 L343.1 548.5 L345.5 548.0 L347.9 547.5 L350.3 547.7 L352.7 548.5 L355.1 548.2 L357.4 548.5 L359.8 547.9 L362.2 548.2 L364.6 548.0 L367.0 547.2 L369.4 548.0 L371.8 548.1 L374.2 547.7 L376.6 548.6 L378.9 549.4 L381.3 549.0 L383.7 548.2 L386.1 547.4 L388.5 548.0 L390.9 547.8 L393.3 548.2 L395.7 548.9 L398.0 548.1 L400.4 547.3 L402.8 549.0 L405.2 548.2 L407.6 549.0 L410.0 547.6 L412.4 549.7 L414.8 547.4 L417.2 548.2 L419.5 548.7 L421.9 546.6 L424.3 547.7 L426.7 547.2 L429.1 549.2 L431.5 548.6 L433.9 547.6 L436.3 547.1 L438.6 547.1 L441.0 548.3 L443.4 547.7 L445.8 548.4 L448.2 547.8 L450.6 547.1 L453.0 549.3 L455.4 548.5 L457.8 547.7 L460.1 548.0 L462.5 549.0 L464.9 548.7 L467.3 547.4 L469.7 549.1 L472.1 547.8 L474.5 548.5 L476.9 547.4 L479.3 547.8 L481.6 548.7 L484.0 547.4 L486.4 548.2 L488.8 548.4 L491.2 547.8 L493.6 549.1 L496.0 548.6 L498.4 548.1 L500.8 548.8 L503.1 549.0 L505.5 548.9 L507.9 548.1 L510.3 548.7 L512.7 548.4 L515.1 547.5 L517.5 548.0 L519.9 549.4 L522.2 547.7 L524.6 548.5 L527.0 549.2 L529.4 548.0 L531.8 548.2 L534.2 547.7 L536.6 548.5 L539.0 547.5 L541.4 548.5 L543.7 547.7 L546.1 548.4 L548.5 547.2 L550.9 547.5 L553.3 548.8 L555.7 548.6 L558.1 546.4 L560.5 549.1 L562.9 547.7 L565.2 548.8 L567.6 548.8 L570.0 548.1 L572.4 548.0 L574.8 547.0 L577.2 548.5 L579.6 549.4 L582.0 547.5 L584.3 548.9 L586.7 548.7 L589.1 548.8 L591.5 547.6 L593.9 548.2 L596.3 548.4 L598.7 549.3 L601.1 547.7 L603.5 547.9 L605.8 547.8 L608.2 548.8 L610.6 547.3 L613.0 548.1 L615.4 547.4 L617.8 548.0 L620.2 548.7 L622.6 547.9 L624.9 548.7 L627.3 547.9 L629.7 548.2 L632.1 548.1 L634.5 547.7 L636.9 548.5 L639.3 548.6 L641.7 547.8 L644.1 548.7 L646.4 548.3 L648.8 548.0 L651.2 548.3 L653.6 548.7 L656.0 548.7 L658.4 549.1 L660.8 548.4 L663.2 548.4 L665.6 547.3 L667.9 547.9 L670.3 548.6 L672.7 547.6 L675.1 547.7 L677.5 549.4 L679.9 548.2 L682.3 547.6 L684.7 547.0 L687.1 547.7 L689.4 549.7 L691.8 548.2 L694.2 548.6 L696.6 548.7 L699.0 548.0 L701.4 548.5 L703.8 548.3 L706.2 548.1 L708.5 548.9 L710.9 547.8 L713.3 547.8 L715.7 547.9 L718.1 549.0 L720.5 548.0 L722.9 549.4 L725.3 547.5 L727.7 547.7 L730.0 546.7 L732.4 547.7 L734.8 548.3 L737.2 548.7 L739.6 547.7 L742.0 548.0 L744.4 549.1 L746.8 548.0 L749.1 548.3 L751.5 548.7 L753.9 547.7 L756.3 549.0 L758.7 548.2 L761.1 548.7 L763.5 548.1 L765.9 548.4 L768.3 549.0 L770.6 548.4 L773.0 547.2 L775.4 548.1 L777.8 548.1 L780.2 548.2 L782.6 548.4 L785.0 547.3 L787.4 549.3 L789.8 547.8 L792.1 549.1 L794.5 548.1 L796.9 548.1 L799.3 548.2 L801.7 548.1 L804.1 548.6 L806.5 549.0 L808.9 549.4 L811.2 549.4 L813.6 547.6 L816.0 548.7 L818.4 548.6 L820.8 548.3 L823.2 548.5 L825.6 548.3 L828.0 547.6 L830.4 547.8 L832.7 548.9 L835.1 548.3 L837.5 549.1 L839.9 548.0 L842.3 548.0 L844.7 548.4 L847.1 548.4 L849.5 548.9 L851.9 548.0 L854.2 548.8 L856.6 548.5 L859.0 547.8 L861.4 548.2 L863.8 548.2 L866.2 548.9 L868.6 549.1 L871.0 548.7 L873.4 548.0 L875.7 548.8 L878.1 548.4 L880.5 548.0 L882.9 548.8 L885.3 547.9 L887.7 548.2 L890.1 547.7 L892.5 547.5 L894.8 548.6 L897.2 547.4 L899.6 547.9 L902.0 548.1 L904.4 548.6 L906.8 547.9 L909.2 548.8 L911.6 547.8 L914.0 547.9 L916.3 547.8 L918.7 548.0 L921.1 547.9 L923.5 547.5 L925.9 547.9 L928.3 547.8 L930.7 549.0 L933.1 547.7 L935.4 548.5 L937.8 547.8 L940.2 548.9 L942.6 548.3 L945.0 548.0 L947.4 549.0 L949.8 549.3 L952.2 549.3 L954.6 548.9 L956.9 548.4 L959.3 548.0 L961.7 548.1 L964.1 548.0 L966.5 548.7 L968.9 548.1 L971.3 548.5 L973.7 548.5 L976.1 548.3 L978.4 548.0 L980.8 547.7 L983.2 549.9 L985.6 548.3 L988.0 547.4 L990.4 547.6 L992.8 548.0 L995.2 549.5 L997.6 548.5 L999.9 547.8 L1002.3 549.4 L1004.7 547.3 L1007.1 549.1 L1009.5 550.1 L1011.9 548.4 L1014.3 549.0 L1016.7 548.8 L1019.0 546.7 L1021.4 548.6 L1023.8 548.0 L1026.2 546.7 L1028.6 548.9 L1031.0 548.0 L1033.4 548.6 L1035.8 548.7 L1038.2 548.0 L1040.5 547.0 L1042.9 548.1 L1045.3 547.9 L1047.7 547.7 L1050.1 547.9 L1052.5 548.4 L1054.9 549.3 L1057.3 548.5 L1059.6 548.5 L1062.0 549.1 L1064.4 548.7 L1066.8 548.3 L1069.2 548.0 L1071.6 547.7 L1074.0 549.0 L1076.4 548.4 L1078.8 549.1 L1081.1 547.9 L1083.5 548.1 L1085.9 548.7 L1088.3 549.3 L1090.7 548.3 L1093.1 548.1 L1095.5 548.7 L1097.9 547.6 L1100.3 549.1 L1102.6 547.7 L1105.0 547.5 L1107.4 548.5 L1109.8 548.1 L1112.2 549.2 L1114.6 548.9 L1117.0 548.7 L1119.4 547.2 L1121.8 548.4 L1124.1 547.9 L1126.5 547.2 L1128.9 549.5 L1131.3 547.3 L1133.7 547.8 L1136.1 547.9 L1138.5 548.0 L1140.9 548.5 L1143.2 548.7 L1145.6 547.7 L1148.0 548.7 L1150.4 548.8 L1152.8 548.6 L1155.2 549.4 L1157.6 548.1 L1160.0 548.2 L1162.4 548.2 L1164.7 547.7 L1167.1 548.4 L1169.5 549.1 L1171.9 548.8 L1174.3 548.4 L1176.7 548.5 L1179.1 549.3 L1181.5 549.2 L1183.9 547.3 L1186.2 547.6 L1188.6 549.1 L1191.0 548.9 L1193.4 548.9 L1195.8 549.0 L1198.2 547.8 L1200.6 547.7 L1203.0 548.7 L1205.3 547.7 L1207.7 548.5 L1210.1 549.7 L1212.5 547.4 L1214.9 548.8 L1217.3 549.4 L1219.7 549.2 L1222.1 548.2 L1224.5 547.9 L1226.8 548.5 L1229.2 547.7 L1231.6 548.6 L1234.0 548.3 L1236.4 548.3 L1238.8 549.0 L1241.2 548.5 L1243.6 548.1 L1246.0 548.4 L1248.3 548.3 L1250.7 548.3 L1253.1 548.2 L1255.5 549.0 L1257.9 548.2 L1260.3 549.1 L1262.7 548.9 L1265.1 549.1 L1267.6 548.7 L1270.4 547.7 L1273.1 549.9 L1275.4 548.2 L1277.0 547.8" fill="none" stroke="#7aa828" stroke-width="1.2"/>
 <path d="M35.0 603.1 L35.4 603.2 L36.0 612.7 L36.6 599.6 L37.3 608.8 L38.1 607.6 L38.9 605.9 L39.7 608.0 L40.6 605.2 L41.5 608.1 L42.4 607.1 L43.3 605.7 L44.2 606.1 L45.1 613.5 L46.0 608.4 L46.8 609.5 L47.6 605.5 L48.4 605.5 L49.2 614.2 L49.9 606.3 L50.7 609.5 L51.5 611.8 L52.3 605.2 L53.1 609.2 L53.9 604.9 L54.7 607.3 L55.4 609.9 L56.2 606.0 L57.0 604.2 L57.8 608.5 L58.6 605.7 L59.4 595.7 L60.2 609.8 L60.9 605.9 L61.7 607.2 L62.5 605.4 L63.3 607.5 L64.1 611.5 L64.9 605.7 L65.7 608.4 L66.5 611.1 L67.2 609.7 L68.0 603.2 L68.8 603.2 L69.6 606.7 L70.4 605.6 L71.2 612.2 L72.0 608.0 L72.7 605.8 L73.5 605.4 L74.3 607.9 L75.1 604.1 L75.9 605.3 L76.7 606.2 L77.5 613.0 L78.2 609.7 L79.0 613.4 L79.8 606.9 L80.6 601.6 L81.4 607.3 L82.2 605.4 L83.0 608.0 L83.8 611.4 L84.5 605.7 L85.3 609.1 L86.1 608.3 L86.9 603.2 L87.7 611.3 L88.5 604.0 L89.3 602.1 L90.0 606.1 L90.8 610.6 L91.6 604.7 L92.4 614.5 L93.2 611.0 L94.0 607.2 L94.8 601.0 L95.5 608.3 L96.3 604.1 L97.1 610.7 L97.9 603.1 L98.7 612.0 L99.5 615.0 L100.3 605.6 L101.1 610.0 L101.8 612.3 L102.6 605.0 L103.4 601.9 L104.2 607.7 L105.0 602.6 L105.8 602.8 L106.6 602.8 L107.3 608.8 L108.1 607.2 L108.9 607.8 L109.7 618.7 L110.5 605.2 L111.3 612.8 L112.1 604.2 L112.8 604.1 L113.6 606.9 L114.4 606.8 L115.2 605.4 L116.0 607.7 L116.8 618.1 L117.6 607.8 L118.4 605.8 L119.1 608.2 L119.9 603.2 L120.7 605.9 L121.5 604.6 L122.3 602.3 L123.1 603.4 L123.9 613.3 L124.6 609.8 L125.4 603.8 L126.2 603.0 L127.0 607.0 L127.8 608.0 L128.6 605.3 L129.4 611.2 L130.1 609.2 L130.9 605.1 L131.7 607.0 L132.5 605.2 L133.3 616.7 L134.1 605.9 L134.9 606.9 L135.6 606.3 L136.4 604.1 L137.2 600.2 L138.0 606.0 L138.8 608.5 L139.6 606.9 L140.4 607.5 L141.2 603.3 L141.9 606.0 L142.7 606.3 L143.5 612.7 L144.3 608.9 L145.1 603.7 L145.9 599.2 L146.7 608.8 L147.4 603.6 L148.2 609.7 L149.0 604.6 L149.8 612.5 L150.6 606.9 L151.4 603.9 L152.2 607.2 L152.9 613.5 L153.7 601.0 L154.5 605.7 L155.3 606.5 L156.1 607.8 L156.9 607.3 L157.7 605.6 L158.5 607.3 L159.2 607.9 L160.0 607.9 L160.8 612.1 L161.6 611.2 L162.4 604.8 L163.2 607.5 L164.0 608.8 L164.7 607.7 L165.5 606.6 L166.3 610.6 L167.1 609.0 L167.9 609.3 L168.7 598.9 L169.5 611.2 L170.2 604.0 L171.0 603.8 L171.8 604.8 L172.6 604.9 L173.4 606.7 L174.2 602.7 L175.0 603.0 L175.8 610.6 L176.5 605.9 L177.3 600.3 L178.1 603.5 L178.9 607.6 L179.7 609.9 L180.5 609.2 L181.3 611.3 L182.0 600.2 L182.8 606.7 L183.6 605.3 L184.4 607.9 L185.2 611.7 L186.0 604.8 L186.8 614.1 L187.5 602.9 L188.3 610.3 L189.1 601.0 L189.9 594.4 L190.7 601.3 L191.5 607.6 L192.3 611.1 L193.1 604.8 L193.8 604.2 L194.6 614.0 L195.4 604.6 L196.2 613.7 L197.0 596.4 L197.8 607.4 L198.6 613.5 L199.3 608.1 L200.1 611.3 L200.9 607.7 L201.7 610.3 L202.5 609.9 L203.3 606.4 L204.1 598.9 L204.8 601.3 L205.6 601.7 L206.4 611.9 L207.2 609.5 L208.0 602.9 L208.8 599.7 L209.6 611.1 L210.4 613.4 L211.1 606.1 L211.9 607.9 L212.7 606.7 L213.5 614.1 L214.3 602.2 L215.1 608.2 L215.9 608.3 L216.6 611.4 L217.4 607.4 L218.2 608.5 L219.0 613.2 L219.8 604.8 L220.6 603.3 L221.4 609.8 L222.1 605.3 L222.9 610.0 L223.7 615.1 L224.5 608.5 L225.3 607.5 L226.1 614.5 L226.9 605.3 L227.6 604.3 L228.4 604.9 L229.2 600.9 L230.0 611.7 L230.8 609.0 L231.6 609.3 L232.4 606.6 L233.2 608.4 L233.9 606.9 L234.7 607.6 L235.5 612.2 L236.3 605.3 L237.1 609.1 L237.9 606.2 L238.7 607.3 L239.4 608.2 L240.2 606.8 L241.0 604.2 L241.8 611.5 L242.6 607.5 L243.4 609.5 L244.2 611.4 L244.9 614.6 L245.7 605.3 L246.5 605.2 L247.3 603.9 L248.1 607.8 L248.9 599.5 L249.7 605.4 L250.5 605.3 L251.2 605.7 L252.0 610.0 L252.8 609.5 L253.6 604.7 L254.4 608.0 L255.2 603.7 L256.0 605.3 L256.7 605.0 L257.5 608.5 L258.3 609.2 L259.1 602.8 L259.9 603.5 L260.7 603.2 L261.5 605.0 L262.2 613.8 L263.0 602.8 L263.8 602.2 L264.6 610.4 L265.4 606.7 L266.2 609.6 L267.0 608.3 L267.8 601.6 L268.5 605.1 L269.3 599.7 L270.1 596.5 L270.9 603.6 L271.7 609.8 L272.5 611.8 L273.3 607.8 L274.0 609.7 L274.8 601.5 L275.6 606.6 L276.4 601.6 L277.2 604.1 L278.0 600.6 L278.8 607.5 L279.5 610.3 L280.3 610.5 L281.1 610.6 L281.9 606.5 L282.7 602.4 L283.5 605.2 L284.3 609.1 L285.1 602.9 L285.8 602.3 L286.6 605.9 L287.4 611.0 L288.2 602.7 L289.0 607.2 L289.8 602.8 L290.6 608.3 L291.3 605.6 L292.1 610.9 L292.9 608.0 L293.7 606.7 L294.5 607.3 L295.3 608.4 L296.1 608.5 L296.8 601.5 L297.6 608.3 L298.4 607.4 L299.2 612.1 L300.0 602.4 L300.8 606.5 L301.6 610.3 L302.4 605.3 L303.1 605.4 L303.9 608.8 L304.7 601.0 L305.5 610.9 L306.3 598.8 L307.1 607.4 L307.9 609.2 L308.6 612.0 L309.4 606.0 L310.2 606.1 L311.0 606.5 L311.8 606.6 L312.6 606.6 L313.4 606.2 L314.1 602.6 L314.9 612.4 L315.7 607.0 L316.5 607.4 L317.3 609.2 L318.1 598.3 L318.9 602.0 L319.6 615.6 L320.4 603.1 L321.2 606.0 L322.0 604.6 L322.8 604.5 L323.6 607.2 L324.4 606.5 L325.2 605.2 L325.9 608.9 L326.7 606.6 L327.5 605.3 L328.3 606.2 L329.1 608.5 L329.9 607.7 L330.7 605.7 L331.4 606.5 L332.2 599.8 L333.0 606.3 L333.8 603.1 L334.6 603.4 L335.4 605.3 L336.2 600.4 L336.9 606.8 L337.7 606.0 L338.5 604.9 L339.3 608.7 L340.1 609.1 L340.9 607.8 L341.7 602.2 L342.5 608.7 L343.2 617.4 L344.0 608.7 L344.8 612.5 L345.6 607.0 L346.4 607.9 L347.2 608.2 L348.0 608.4 L348.7 606.7 L349.5 606.4 L350.3 603.1 L351.1 597.4 L351.9 601.4 L352.7 604.0 L353.5 608.0 L354.2 600.0 L355.0 608.6 L355.8 606.8 L356.6 606.4 L357.4 600.8 L358.2 605.3 L359.0 598.2 L359.8 602.5 L360.5 605.9 L361.3 606.9 L362.1 602.1 L362.9 600.1 L363.7 604.5 L364.5 598.7 L365.3 605.6 L366.0 611.9 L366.8 613.7 L367.6 610.7 L368.4 597.7 L369.2 608.3 L370.0 611.8 L370.8 606.6 L371.5 603.0 L372.3 611.4 L373.1 612.9 L373.9 608.0 L374.7 606.3 L375.5 608.8 L376.3 607.9 L377.1 610.5 L377.8 607.2 L378.6 606.3 L379.4 606.9 L380.2 611.2 L381.0 601.7 L381.8 614.2 L382.6 611.3 L383.3 607.6 L384.1 600.1 L384.9 604.6 L385.7 605.7 L386.5 609.6 L387.3 604.2 L388.1 612.7 L388.8 603.0 L389.6 606.3 L390.4 604.4 L391.2 610.4 L392.0 610.9 L392.8 606.0 L393.6 604.5 L394.4 607.6 L395.1 598.5 L395.9 610.5 L396.7 602.1 L397.5 606.4 L398.3 604.4 L399.1 603.3 L399.9 605.8 L400.6 607.7 L401.4 608.2 L402.2 604.5 L403.0 607.8 L403.8 605.8 L404.6 609.9 L405.4 609.0 L406.1 614.6 L406.9 608.9 L407.7 605.8 L408.5 603.7 L409.3 607.2 L410.1 606.9 L410.9 607.0 L411.6 605.3 L412.4 611.6 L413.2 604.1 L414.0 608.9 L414.8 614.0 L415.6 605.0 L416.4 607.4 L417.2 606.4 L417.9 609.6 L418.7 605.6 L419.5 610.3 L420.3 607.2 L421.1 610.0 L421.9 601.2 L422.7 600.6 L423.4 608.9 L424.2 605.8 L425.0 607.5 L425.8 601.7 L426.6 603.6 L427.4 603.5 L428.2 609.8 L428.9 608.7 L429.7 606.6 L430.5 602.6 L431.3 602.9 L432.1 602.0 L432.9 603.5 L433.7 600.8 L434.5 609.6 L435.2 603.1 L436.0 609.8 L436.8 605.4 L437.6 611.3 L438.4 600.8 L439.2 607.4 L440.0 604.9 L440.7 607.8 L441.5 605.9 L442.3 606.1 L443.1 606.0 L443.9 609.0 L444.7 602.2 L445.5 604.8 L446.2 603.4 L447.0 605.0 L447.8 601.7 L448.6 605.9 L449.4 606.1 L450.2 606.6 L451.0 605.3 L451.8 607.7 L452.5 607.6 L453.3 606.6 L454.1 612.3 L454.9 604.6 L455.7 598.7 L456.5 605.9 L457.3 602.2 L458.0 605.8 L458.8 602.9 L459.6 606.7 L460.4 611.5 L461.2 618.3 L462.0 606.6 L462.8 609.8 L463.5 606.6 L464.3 604.7 L465.1 606.7 L465.9 606.4 L466.7 613.8 L467.5 603.1 L468.3 609.0 L469.1 604.5 L469.8 607.3 L470.6 605.2 L471.4 603.9 L472.2 605.4 L473.0 606.5 L473.8 603.8 L474.6 599.9 L475.3 611.1 L476.1 600.7 L476.9 603.4 L477.7 602.0 L478.5 604.0 L479.3 606.8 L480.1 603.7 L480.8 600.9 L481.6 612.5 L482.4 603.4 L483.2 605.9 L484.0 606.4 L484.8 606.4 L485.6 606.4 L486.4 607.7 L487.3 599.0 L488.1 611.6 L488.9 606.0 L489.7 606.1 L490.6 610.8 L491.3 609.9 L492.1 605.9 L492.9 607.1 L493.6 600.1 L494.3 604.8 L495.0 606.1 L496.0 606.8 L496.8 605.7 L497.7 604.4 L498.5 603.2 L499.2 605.8 L500.0 600.5 L500.7 600.9 L501.5 599.7 L502.2 599.8 L503.0 600.1 L503.8 594.3 L504.6 595.6 L505.4 597.9 L506.2 594.4 L506.9 594.9 L507.7 595.6 L508.5 597.6 L509.3 593.3 L510.2 591.2 L511.0 594.2 L511.7 592.9 L512.4 588.8 L513.2 589.2 L513.9 586.1 L514.7 583.7 L515.4 583.9 L516.2 584.0 L517.0 580.2 L517.7 580.6 L518.5 577.9 L519.3 579.4 L520.0 575.7 L520.8 573.3 L521.7 571.1 L522.5 566.8 L523.4 565.6 L524.3 565.3 L525.1 561.2 L525.9 559.7 L526.7 559.0 L527.5 549.9 L528.2 552.4 L528.8 550.0 L529.8 549.3 L530.6 550.1 L531.2 545.3 L531.9 543.0 L533.0 544.6 L533.6 540.8 L534.3 539.2 L535.0 538.3 L535.8 537.2 L536.6 535.1 L537.5 535.5 L538.3 529.1 L539.2 528.7 L540.1 525.1 L540.9 523.9 L541.8 522.8 L542.6 522.0 L543.4 518.6 L544.2 516.8 L545.1 516.6 L545.9 514.6 L546.8 513.1 L547.6 510.5 L548.4 509.7 L549.2 510.5 L550.0 504.7 L550.8 505.0 L551.5 501.8 L552.2 499.2 L553.2 499.0 L554.0 492.9 L554.8 488.1 L555.6 486.3 L556.3 482.8 L557.1 483.7 L557.9 479.6 L558.8 480.9 L559.5 473.9 L560.3 473.6 L561.1 472.0 L561.9 466.6 L562.7 470.6 L563.6 468.7 L564.4 467.8 L565.2 466.9 L566.1 463.4 L566.8 463.9 L567.6 463.9 L568.5 457.8 L569.3 455.3 L570.1 454.1 L570.9 448.2 L571.7 448.7 L572.5 447.1 L573.3 441.7 L574.1 438.5 L575.0 439.2 L575.8 437.4 L576.5 435.6 L577.3 429.2 L578.1 427.4 L578.9 426.1 L579.7 425.8 L580.6 420.8 L581.4 419.6 L582.2 417.7 L583.0 415.3 L583.9 415.1 L584.6 412.8 L585.4 411.1 L586.2 407.2 L587.0 405.6 L587.8 403.9 L588.6 401.0 L589.4 398.8 L590.2 399.5 L591.0 396.0 L591.8 394.0 L592.7 390.7 L593.4 389.3 L594.1 387.2 L594.8 383.3 L595.6 382.0 L596.3 382.5 L597.1 379.7 L597.9 375.4 L598.6 378.0 L599.4 378.5 L600.2 373.8 L601.0 370.8 L601.7 370.5 L602.5 366.6 L603.2 365.3 L604.0 362.6 L604.8 361.0 L605.5 359.4 L606.3 354.5 L607.0 352.4 L607.8 355.6 L608.5 349.7 L609.3 346.2 L610.0 342.7 L610.8 343.1 L611.5 340.7 L612.3 338.0 L613.0 335.6 L613.8 336.2 L614.6 333.9 L615.3 332.2 L616.1 331.5 L616.8 330.2 L617.6 329.2 L618.3 325.6 L619.1 328.6 L619.9 324.9 L620.6 320.7 L621.4 321.8 L622.1 321.9 L622.9 321.3 L623.6 317.2 L624.4 319.6 L625.2 316.9 L625.9 314.4 L626.7 314.3 L627.4 311.7 L628.2 312.3 L628.9 310.0 L629.7 307.0 L630.5 307.2 L631.2 305.6 L632.0 302.8 L632.7 305.0 L633.5 299.9 L634.2 298.9 L635.0 298.3 L635.8 299.7 L636.5 296.7 L637.3 294.5 L638.0 294.3 L638.8 291.6 L639.5 291.7 L640.3 288.9 L641.0 288.7 L641.8 286.3 L642.5 285.9 L643.3 283.4 L644.0 282.5 L644.8 278.8 L645.5 283.3 L646.3 275.1 L647.0 279.1 L647.8 275.8 L648.5 269.8 L649.3 277.7 L650.1 274.2 L650.8 269.3 L651.6 267.7 L652.4 267.0 L653.1 264.9 L653.8 265.1 L654.6 263.6 L655.3 264.6 L656.0 261.3 L656.8 261.5 L657.6 258.6 L658.4 258.1 L659.3 258.3 L660.1 251.4 L660.8 253.5 L661.6 253.5 L662.4 253.2 L663.1 249.0 L663.7 251.1 L664.4 249.6 L665.0 247.5 L666.1 252.8 L667.0 246.4 L667.8 248.2 L668.5 245.2 L669.2 247.5 L670.0 247.0 L670.8 244.9 L671.6 244.2 L672.5 245.7 L673.3 247.9 L674.1 245.7 L675.0 248.8 L675.7 248.3 L676.4 245.3 L677.1 247.8 L677.9 249.0 L678.7 252.3 L679.6 255.0 L680.7 257.3 L681.3 256.5 L682.0 253.6 L682.7 257.7 L683.5 261.2 L684.3 261.1 L685.1 261.6 L685.9 265.2 L686.7 264.4 L687.6 270.2 L688.4 269.6 L689.2 274.3 L689.9 272.2 L690.6 274.8 L691.3 276.6 L692.2 278.7 L693.1 280.9 L693.9 282.3 L694.7 287.1 L695.4 288.3 L696.1 293.8 L696.9 294.0 L697.6 296.2 L698.3 296.7 L699.1 300.3 L699.9 301.0 L700.7 302.4 L701.5 307.0 L702.3 312.3 L703.1 314.6 L703.8 314.3 L704.6 314.4 L705.4 322.0 L706.1 325.7 L706.8 321.7 L707.5 330.5 L708.2 332.7 L708.9 334.7 L709.6 337.4 L710.3 343.6 L711.0 346.0 L711.7 345.6 L712.4 349.5 L713.1 355.7 L713.8 359.6 L714.5 362.8 L715.2 362.2 L715.9 368.3 L716.6 372.0 L717.3 372.0 L718.0 377.6 L718.7 377.4 L719.4 382.6 L720.0 384.8 L720.7 387.3 L721.3 390.8 L722.0 396.4 L722.6 398.0 L723.2 399.4 L723.9 401.8 L724.5 403.8 L725.2 407.3 L725.8 409.9 L726.5 414.8 L727.1 416.3 L727.7 420.8 L728.3 424.3 L728.9 426.3 L729.6 429.3 L730.2 432.2 L730.8 436.9 L731.5 437.7 L732.1 440.1 L732.8 445.1 L733.5 452.1 L734.0 449.4 L734.5 456.2 L735.0 455.9 L735.6 458.7 L736.1 461.0 L736.7 465.0 L737.3 473.1 L737.8 473.4 L738.4 477.6 L739.0 479.4 L739.5 481.9 L740.0 488.3 L740.5 489.1 L741.0 491.9 L741.5 494.8 L741.9 495.6 L742.3 496.3 L743.3 502.8 L743.9 510.0 L744.5 510.3 L745.1 513.1 L746.0 515.9 L746.6 518.8 L747.3 521.3 L748.0 523.2 L748.8 527.8 L749.7 530.2 L750.5 533.9 L751.4 536.0 L752.2 537.9 L753.0 543.2 L753.9 545.4 L754.6 546.7 L755.4 550.2 L756.2 553.4 L757.0 556.7 L757.8 559.5 L758.6 562.6 L759.3 566.7 L760.1 567.9 L760.9 570.8 L761.7 573.3 L762.5 575.3 L763.3 577.6 L764.0 577.4 L764.8 580.9 L765.6 581.4 L766.4 581.8 L767.2 584.9 L767.9 585.2 L768.7 586.4 L769.5 587.5 L770.3 589.7 L771.1 591.5 L771.9 592.5 L772.7 596.3 L773.5 596.3 L774.3 598.6 L775.0 598.2 L775.8 601.5 L776.6 602.9 L777.3 604.6 L778.2 605.7 L779.1 606.2 L779.9 607.2 L780.7 609.5 L781.5 610.8 L782.4 611.4 L783.2 612.5 L784.0 614.5 L784.8 615.5 L785.6 617.6 L786.3 617.9 L787.1 619.7 L787.9 622.1 L788.7 622.1 L789.6 624.4 L790.7 624.0 L791.3 623.8 L792.0 623.0 L792.7 623.1 L793.4 623.3 L794.1 624.1 L794.9 621.9 L795.7 622.1 L796.4 622.3 L797.2 620.4 L798.0 620.2 L798.9 619.4 L799.7 619.4 L800.4 617.7 L801.2 616.5 L802.0 616.5 L802.8 616.1 L803.6 617.7 L804.4 616.7 L805.2 614.5 L806.0 613.4 L806.8 614.3 L807.7 613.2 L808.5 612.8 L809.3 612.3 L810.0 611.9 L810.8 610.2 L811.5 609.4 L812.2 609.2 L812.9 609.1 L813.5 610.2 L814.5 609.6 L815.4 610.3 L816.2 611.1 L817.0 611.8 L817.6 613.3 L818.3 614.4 L819.0 615.1 L819.8 615.4 L820.5 617.5 L821.2 618.2 L821.9 618.7 L822.5 620.9 L823.3 620.6 L824.1 621.2 L825.0 621.4 L826.0 620.8 L826.6 621.4 L827.3 621.0 L828.0 620.2 L828.7 620.1 L829.5 616.8 L830.3 616.1 L831.1 614.9 L832.0 614.3 L832.8 614.3 L833.6 611.5 L834.5 611.1 L835.3 610.2 L836.1 609.0 L836.9 609.3 L837.7 609.7 L838.5 608.1 L839.2 608.9 L840.0 610.1 L840.8 610.6 L841.6 612.2 L842.4 612.7 L843.1 613.9 L843.9 614.8 L844.7 616.9 L845.4 617.4 L846.2 619.9 L846.9 619.8 L847.6 620.4 L848.3 622.4 L849.0 620.7 L849.8 621.7 L850.6 620.4 L851.4 620.4 L852.2 619.6 L852.9 619.7 L853.7 617.7 L854.4 618.3 L855.1 616.0 L855.8 615.2 L856.6 613.3 L857.3 614.1 L858.0 612.9 L858.8 611.9 L859.6 611.6 L860.3 611.3 L861.1 610.6 L861.8 609.9 L862.6 610.8 L863.4 610.0 L864.1 609.2 L864.9 610.6 L865.7 609.7 L866.5 610.6 L867.3 609.2 L868.0 610.2 L868.8 610.7 L869.6 610.7 L870.3 612.3 L871.1 612.8 L871.9 614.1 L872.7 615.1 L873.5 615.6 L874.3 615.7 L875.2 615.8 L876.0 616.9 L876.7 618.7 L877.4 617.7 L878.2 618.6 L878.9 619.4 L879.7 619.5 L880.4 621.1 L881.2 620.4 L881.9 622.9 L882.7 623.0 L883.5 623.0 L884.2 623.6 L885.0 624.2 L885.8 624.7 L886.6 624.7 L887.3 623.4 L888.1 624.1 L888.9 625.4 L889.6 624.6 L890.4 624.7 L891.2 624.4 L892.0 623.0 L892.8 621.7 L893.6 621.6 L894.4 621.3 L895.2 621.2 L895.9 620.5 L896.7 620.6 L897.5 619.8 L898.3 620.0 L899.1 619.0 L899.9 618.5 L900.7 618.6 L901.5 618.7 L902.3 618.7 L903.1 618.1 L903.9 617.4 L904.7 616.8 L905.4 616.4 L906.2 616.3 L907.0 616.3 L907.8 616.2 L908.5 616.2 L909.3 615.5 L910.0 615.6 L910.8 615.3 L911.6 615.4 L912.4 614.2 L913.2 614.8 L914.0 613.0 L914.7 614.3 L915.5 614.3 L916.2 613.6 L917.0 614.5 L917.7 614.3 L918.5 615.1 L919.2 614.6 L920.0 614.3 L920.8 614.7 L921.5 615.1 L922.3 614.6 L923.1 614.3 L923.8 614.6 L924.6 614.0 L925.4 614.3 L926.2 615.4 L926.9 615.6 L927.7 614.4 L928.5 614.6 L929.2 615.1 L930.0 613.7 L930.8 614.1 L931.5 613.8 L932.3 615.1 L933.1 614.2 L933.9 614.1 L934.6 614.1 L935.4 614.0 L936.2 612.8 L937.0 613.6 L937.7 614.7 L938.5 614.4 L939.3 614.5 L940.0 613.5 L940.8 613.9 L941.6 613.6 L942.4 614.2 L943.2 613.7 L944.0 614.7 L944.7 614.9 L945.5 613.5 L946.3 613.5 L947.1 615.1 L947.8 613.3 L948.6 613.2 L949.4 614.1 L950.2 612.9 L951.0 613.3 L951.8 613.6 L952.5 613.5 L953.3 612.9 L954.1 613.6 L954.9 614.6 L955.7 614.4 L956.4 614.2 L957.2 613.8 L958.0 613.0 L958.8 613.6 L959.6 613.0 L960.4 613.1 L961.1 614.3 L961.9 614.5 L962.7 613.7 L963.5 613.4 L964.3 613.0 L965.1 612.3 L965.9 612.9 L966.6 614.3 L967.4 613.9 L968.2 613.5 L969.0 612.3 L969.8 614.1 L970.5 613.9 L971.3 612.5 L972.1 613.2 L972.8 614.4 L973.6 613.0 L974.4 612.7 L975.2 614.2 L976.0 613.8 L976.8 614.2 L977.6 612.5 L978.4 612.9 L979.1 613.5 L979.9 613.7 L980.7 614.8 L981.5 612.8 L982.3 613.7 L983.1 614.8 L984.0 612.9 L984.8 612.6 L985.6 613.3 L986.4 613.6 L987.2 612.8 L988.0 613.8 L988.8 613.2 L989.6 612.8 L990.4 613.8 L991.2 613.7 L992.0 614.2 L992.8 614.1 L993.6 614.5 L994.4 614.1 L995.2 613.6 L996.0 613.4 L996.8 614.6 L997.6 612.6 L998.4 613.5 L999.2 613.0 L1000.0 613.5 L1000.8 614.8 L1001.6 614.1 L1002.4 613.8 L1003.2 614.0 L1004.0 614.2 L1004.8 613.9 L1005.6 613.1 L1006.4 614.7 L1007.2 614.3 L1008.0 614.7 L1008.8 613.0 L1009.6 614.0 L1010.4 613.8 L1011.2 613.3 L1012.0 614.8 L1012.8 614.2 L1013.6 614.5 L1014.4 612.8 L1015.2 613.3 L1016.0 614.2 L1016.8 614.0 L1017.6 614.6 L1018.4 614.2 L1019.2 614.3 L1020.0 613.2 L1020.8 615.1 L1021.6 614.5 L1022.4 614.1 L1023.2 613.4 L1024.0 614.4 L1024.8 614.2 L1025.6 614.8 L1026.4 613.6 L1027.2 614.3 L1028.0 613.0 L1028.8 614.9 L1029.6 615.7 L1030.4 613.8 L1031.2 614.8 L1032.0 614.3 L1032.7 614.0 L1033.5 614.2 L1034.3 613.7 L1035.1 614.8 L1035.9 615.2 L1036.7 614.8 L1037.5 614.5 L1038.3 614.7 L1039.1 614.3 L1040.0 614.2 L1040.7 614.4 L1041.4 615.1 L1042.2 613.7 L1042.9 613.8 L1043.6 614.4 L1044.4 614.5 L1045.1 613.6 L1045.9 614.1 L1046.7 616.3 L1047.4 614.0 L1048.2 615.0 L1049.0 613.8 L1049.7 614.3 L1050.5 613.6 L1051.2 615.2 L1052.0 614.5 L1052.8 614.4 L1053.5 614.1 L1054.2 614.4 L1055.0 614.2 L1055.8 614.7 L1056.5 615.2 L1057.2 613.6 L1058.0 614.9 L1058.8 614.3 L1059.5 613.7 L1060.2 614.5 L1061.0 615.2 L1061.8 615.5 L1062.5 615.1 L1063.2 613.6 L1064.0 614.6 L1064.8 614.4 L1065.5 615.2 L1066.2 614.4 L1067.0 614.9 L1067.8 614.9 L1068.5 614.2 L1069.2 614.4 L1070.0 614.1 L1070.8 616.3 L1071.5 613.9 L1072.2 614.7 L1073.0 613.3 L1073.8 613.4 L1074.5 614.8 L1075.2 614.5 L1076.0 615.0 L1076.8 613.9 L1077.5 614.0 L1078.2 615.0 L1079.0 614.3 L1079.8 613.6 L1080.5 613.7 L1081.2 614.0 L1082.0 614.0 L1082.8 614.2 L1083.5 615.0 L1084.2 614.4 L1085.0 614.4 L1085.8 613.0 L1086.5 613.4 L1087.2 613.3 L1088.0 613.8 L1088.8 615.0 L1089.5 613.9 L1090.2 613.9 L1091.0 613.7 L1091.8 613.9 L1092.5 614.7 L1093.2 614.6 L1094.0 613.5 L1094.8 613.8 L1095.5 613.8 L1096.2 613.6 L1097.0 613.6 L1097.8 613.2 L1098.5 614.0 L1099.2 612.1 L1100.0 614.7 L1100.8 613.7 L1101.5 613.7 L1102.2 614.6 L1103.0 613.2 L1103.8 614.5 L1104.5 613.3 L1105.2 614.6 L1106.0 614.1 L1106.8 614.0 L1107.5 612.9 L1108.2 614.8 L1109.0 614.1 L1109.8 613.9 L1110.5 614.5 L1111.2 614.4 L1112.0 614.9 L1112.8 613.2 L1113.5 613.5 L1114.2 613.0 L1115.0 614.7 L1115.8 613.0 L1116.5 614.1 L1117.2 614.1 L1118.0 614.3 L1118.8 614.2 L1119.5 614.2 L1120.2 615.0 L1121.0 613.7 L1121.8 614.2 L1122.5 615.6 L1123.2 614.1 L1124.0 614.8 L1124.8 613.9 L1125.5 614.1 L1126.2 613.9 L1127.0 613.8 L1127.8 613.5 L1128.5 613.3 L1129.2 614.9 L1130.0 614.8 L1130.8 613.5 L1131.5 614.5 L1132.2 614.1 L1133.0 614.5 L1133.8 613.4 L1134.5 614.4 L1135.2 614.8 L1136.0 615.1 L1136.8 614.4 L1137.5 613.4 L1138.2 613.9 L1139.0 613.9 L1139.8 614.5 L1140.5 613.9 L1141.2 614.1 L1142.0 613.7 L1142.8 616.0 L1143.5 614.9 L1144.2 614.0 L1145.0 615.2 L1145.8 613.6 L1146.5 614.3 L1147.2 615.1 L1148.0 614.6 L1148.8 613.9 L1149.5 613.4 L1150.3 614.0 L1151.0 614.8 L1151.8 615.0 L1152.5 614.3 L1153.3 614.7 L1154.0 614.4 L1154.8 615.2 L1155.5 614.8 L1156.3 614.0 L1157.0 614.6 L1157.8 614.0 L1158.5 614.4 L1159.3 613.9 L1160.0 614.7 L1160.8 614.7 L1161.6 614.1 L1162.4 615.5 L1163.1 614.0 L1163.9 614.4 L1164.7 615.1 L1165.5 613.8 L1166.3 614.6 L1167.0 614.6 L1167.8 614.4 L1168.6 614.5 L1169.4 613.7 L1170.1 613.3 L1170.9 615.1 L1171.7 614.5 L1172.5 614.6 L1173.3 614.3 L1174.0 615.5 L1174.8 614.7 L1175.6 613.6 L1176.4 613.8 L1177.2 613.8 L1177.9 614.1 L1178.7 614.9 L1179.5 614.2 L1180.3 614.0 L1181.1 615.2 L1181.8 614.3 L1182.6 613.5 L1183.4 614.5 L1184.2 613.9 L1185.0 613.2 L1185.7 614.9 L1186.5 614.4 L1187.3 613.5 L1188.1 615.0 L1188.9 614.9 L1189.6 614.2 L1190.4 614.1 L1191.2 614.3 L1192.0 615.0 L1192.8 614.9 L1193.5 614.4 L1194.3 614.2 L1195.1 613.4 L1195.9 614.7 L1196.7 614.1 L1197.4 613.6 L1198.2 614.3 L1199.0 614.1 L1199.8 613.4 L1200.6 614.0 L1201.3 614.1 L1202.1 614.8 L1202.9 613.2 L1203.7 614.8 L1204.5 614.1 L1205.2 612.9 L1206.0 615.3 L1206.8 613.7 L1207.6 614.4 L1208.4 614.9 L1209.1 614.2 L1209.9 613.8 L1210.7 614.6 L1211.5 614.0 L1212.3 614.1 L1213.0 614.9 L1213.8 614.8 L1214.6 613.3 L1215.4 613.5 L1216.2 613.2 L1216.9 614.6 L1217.7 613.2 L1218.5 613.2 L1219.3 614.6 L1220.1 613.9 L1220.8 614.7 L1221.6 613.4 L1222.4 615.1 L1223.2 612.0 L1224.0 613.2 L1224.7 613.7 L1225.5 613.5 L1226.3 613.8 L1227.1 613.9 L1227.9 613.6 L1228.6 615.0 L1229.4 614.7 L1230.2 614.4 L1231.0 613.6 L1231.8 613.5 L1232.5 614.8 L1233.3 613.7 L1234.1 613.8 L1234.9 613.7 L1235.7 612.8 L1236.4 614.8 L1237.2 614.0 L1238.0 614.8 L1238.8 613.9 L1239.6 613.5 L1240.3 613.8 L1241.1 613.3 L1241.9 614.4 L1242.7 615.1 L1243.5 613.1 L1244.2 613.8 L1245.0 613.7 L1245.8 612.8 L1246.6 614.2 L1247.4 613.2 L1248.1 614.1 L1248.9 614.2 L1249.7 614.9 L1250.5 613.7 L1251.3 613.3 L1252.0 613.9 L1252.8 613.3 L1253.6 613.9 L1254.4 613.8 L1255.2 614.5 L1255.9 614.0 L1256.7 614.0 L1257.5 613.6 L1258.3 614.1 L1259.1 614.4 L1259.8 613.3 L1260.6 613.9 L1261.4 613.8 L1262.2 613.3 L1263.0 614.3 L1263.7 614.6 L1264.5 612.7 L1265.3 613.4 L1266.1 613.4 L1267.0 613.6 L1267.8 613.0 L1268.7 615.0 L1269.6 614.9 L1270.5 614.2 L1271.4 613.1 L1272.3 613.6 L1273.2 613.0 L1274.0 613.3 L1274.7 614.1 L1275.4 612.5 L1276.0 612.6 L1276.6 612.8 L1277.0 614.3" fill="none" stroke="#7028a0" stroke-width="1"/>
 <path d="M35.0 653.9 L35.6 652.1 L36.4 654.7 L37.4 653.5 L38.4 652.5 L39.6 654.5 L40.8 653.4 L42.0 652.7 L43.2 653.9 L44.5 654.5 L45.7 653.9 L46.8 652.4 L47.8 654.7 L48.9 654.3 L50.0 653.9 L51.0 653.8 L52.1 654.5 L53.2 653.2 L54.3 652.3 L55.3 654.9 L56.4 652.7 L57.5 652.5 L58.5 654.2 L59.6 653.6 L60.7 653.2 L61.7 653.3 L62.8 654.4 L63.9 654.3 L65.0 653.1 L66.0 653.5 L67.1 653.5 L68.2 655.7 L69.2 653.0 L70.3 652.5 L71.4 653.2 L72.4 654.7 L73.5 651.1 L74.6 651.9 L75.7 653.6 L76.7 653.2 L77.8 652.2 L78.9 656.2 L79.9 653.3 L81.0 652.7 L82.1 653.4 L83.1 654.4 L84.2 653.9 L85.3 653.6 L86.4 653.5 L87.4 654.4 L88.5 652.1 L89.6 654.4 L90.6 652.6 L91.7 653.6 L92.8 653.0 L93.8 654.9 L94.9 655.3 L96.0 653.2 L97.1 653.2 L98.1 654.2 L99.2 657.1 L100.3 653.2 L101.3 652.7 L102.4 652.8 L103.5 654.4 L104.5 653.4 L105.6 655.5 L106.7 654.0 L107.8 652.1 L108.8 655.0 L109.9 653.4 L111.0 653.7 L112.0 654.4 L113.1 651.2 L114.2 654.6 L115.2 654.6 L116.3 655.0 L117.4 652.6 L118.5 653.0 L119.5 652.2 L120.6 654.2 L121.7 653.0 L122.7 656.3 L123.8 654.7 L124.9 653.8 L125.9 653.4 L127.0 654.3 L128.1 651.4 L129.2 653.0 L130.2 653.1 L131.3 653.4 L132.4 653.7 L133.4 653.5 L134.5 653.0 L135.6 654.2 L136.6 654.5 L137.7 653.4 L138.8 652.4 L139.9 654.0 L140.9 653.4 L142.0 653.4 L143.1 652.6 L144.1 654.7 L145.2 653.1 L146.3 653.0 L147.3 652.2 L148.4 654.9 L149.5 653.5 L150.6 651.5 L151.6 652.7 L152.7 653.8 L153.8 652.8 L154.8 654.1 L155.9 652.3 L157.0 654.6 L158.0 653.9 L159.1 653.3 L160.2 653.3 L161.3 653.6 L162.3 652.3 L163.4 656.1 L164.5 654.0 L165.5 653.8 L166.6 653.5 L167.7 652.9 L168.7 652.3 L169.8 653.0 L170.9 653.7 L172.0 653.6 L173.0 653.0 L174.1 653.8 L175.2 652.2 L176.2 652.9 L177.3 652.2 L178.4 654.2 L179.4 653.7 L180.5 655.3 L181.6 653.8 L182.7 653.6 L183.7 651.0 L184.8 652.9 L185.9 653.6 L186.9 653.6 L188.0 653.9 L189.1 652.3 L190.1 651.6 L191.2 654.4 L192.3 651.9 L193.3 654.8 L194.4 653.8 L195.5 653.2 L196.6 654.7 L197.6 651.9 L198.7 653.8 L199.8 653.8 L200.8 652.7 L201.9 654.5 L203.0 655.0 L204.0 653.2 L205.1 654.0 L206.2 655.7 L207.3 652.9 L208.3 653.1 L209.4 653.1 L210.5 652.4 L211.5 654.2 L212.6 653.7 L213.7 653.4 L214.7 655.0 L215.8 652.7 L216.9 653.0 L218.0 653.9 L219.0 653.5 L220.1 653.7 L221.2 655.0 L222.2 653.4 L223.3 653.7 L224.4 651.4 L225.4 653.5 L226.5 652.9 L227.6 653.8 L228.7 653.0 L229.7 654.1 L230.8 654.1 L231.9 653.4 L232.9 653.1 L234.0 653.2 L235.1 653.8 L236.1 652.5 L237.2 654.1 L238.3 653.4 L239.4 653.6 L240.4 654.2 L241.5 653.2 L242.6 654.3 L243.6 654.5 L244.7 653.4 L245.8 652.1 L246.8 654.9 L247.9 655.4 L249.0 653.9 L250.1 653.4 L251.1 652.7 L252.2 653.6 L253.3 654.0 L254.3 653.4 L255.4 653.6 L256.5 652.8 L257.5 651.9 L258.6 652.9 L259.7 653.5 L260.8 655.8 L261.8 653.9 L262.9 652.6 L264.0 652.8 L265.0 654.9 L266.1 653.4 L267.2 654.1 L268.2 652.6 L269.3 656.8 L270.4 653.0 L271.5 654.2 L272.5 654.4 L273.6 652.8 L274.7 653.8 L275.7 653.5 L276.8 653.0 L277.9 656.0 L278.9 653.0 L280.0 652.9 L281.1 654.6 L282.2 654.3 L283.2 653.8 L284.3 653.4 L285.4 653.8 L286.4 655.8 L287.5 656.4 L288.6 654.1 L289.6 652.5 L290.7 652.3 L291.8 652.2 L292.9 653.5 L293.9 653.8 L295.0 653.5 L296.1 654.3 L297.1 654.6 L298.2 653.8 L299.3 653.3 L300.3 654.1 L301.4 656.7 L302.5 653.9 L303.6 653.2 L304.6 652.1 L305.7 652.6 L306.8 652.7 L307.8 653.1 L308.9 653.8 L310.0 652.6 L311.0 652.7 L312.1 654.2 L313.2 653.3 L314.3 655.0 L315.3 653.5 L316.4 653.7 L317.5 655.5 L318.5 651.7 L319.6 653.5 L320.7 655.3 L321.7 653.3 L322.8 652.7 L323.9 652.9 L325.0 653.1 L326.0 654.8 L327.1 654.5 L328.2 653.1 L329.2 652.7 L330.3 653.6 L331.4 653.5 L332.4 652.4 L333.5 653.6 L334.6 654.5 L335.7 653.4 L336.7 652.7 L337.8 653.0 L338.9 653.6 L339.9 654.8 L341.0 651.9 L342.1 653.3 L343.1 654.7 L344.2 654.3 L345.3 652.4 L346.3 650.7 L347.4 654.2 L348.5 654.0 L349.6 653.7 L350.6 654.2 L351.7 655.0 L352.8 652.9 L353.8 653.0 L354.9 653.6 L356.0 653.3 L357.0 652.0 L358.1 654.0 L359.2 653.7 L360.3 653.7 L361.3 653.4 L362.4 655.2 L363.5 652.6 L364.5 654.3 L365.6 654.2 L366.7 653.5 L367.7 652.5 L368.8 653.9 L369.9 653.2 L371.0 654.1 L372.0 653.4 L373.1 653.6 L374.2 653.6 L375.2 654.4 L376.3 652.7 L377.4 652.2 L378.4 653.1 L379.5 654.2 L380.6 652.7 L381.7 654.2 L382.7 654.3 L383.8 652.4 L384.9 654.1 L385.9 653.6 L387.0 654.2 L388.1 655.2 L389.1 654.0 L390.2 652.6 L391.3 653.9 L392.4 652.6 L393.4 652.8 L394.5 653.0 L395.6 653.6 L396.6 653.6 L397.7 654.1 L398.8 653.2 L399.8 653.4 L400.9 653.1 L402.0 653.5 L403.1 653.4 L404.1 653.5 L405.2 653.9 L406.3 653.0 L407.3 652.8 L408.4 653.4 L409.5 654.2 L410.5 653.5 L411.6 651.9 L412.7 654.2 L413.8 655.0 L414.8 652.5 L415.9 651.4 L417.0 652.2 L418.0 652.7 L419.1 652.9 L420.2 653.8 L421.2 654.2 L422.3 653.7 L423.4 653.9 L424.5 656.8 L425.5 654.5 L426.6 653.5 L427.7 652.7 L428.7 654.2 L429.8 653.0 L430.9 653.6 L431.9 653.3 L433.0 654.4 L434.1 652.7 L435.2 652.5 L436.2 653.8 L437.3 653.4 L438.4 653.1 L439.4 654.1 L440.5 653.3 L441.6 653.6 L442.6 653.7 L443.7 652.2 L444.8 654.0 L445.9 656.7 L446.9 654.1 L448.0 654.1 L449.1 653.5 L450.1 654.0 L451.2 653.3 L452.3 653.5 L453.3 653.1 L454.4 653.5 L455.5 653.2 L456.6 653.4 L457.6 654.5 L458.7 653.0 L459.8 653.0 L460.8 653.2 L461.9 654.3 L463.0 654.0 L464.0 653.4 L465.1 653.4 L466.2 654.1 L467.3 654.4 L468.3 650.5 L469.4 652.8 L470.5 651.7 L471.5 654.6 L472.6 652.0 L473.7 653.7 L474.7 654.6 L475.8 655.9 L476.9 653.2 L478.0 654.3 L479.0 653.1 L480.1 653.6 L481.2 652.9 L482.2 653.2 L483.3 654.5 L484.4 653.8 L485.5 652.2 L486.6 655.7 L487.8 653.2 L488.9 654.1 L489.9 654.2 L491.0 652.9 L492.0 653.3 L493.0 652.6 L494.0 653.2 L495.2 653.2 L496.4 652.6 L497.5 652.1 L498.5 651.8 L499.5 652.6 L500.6 650.9 L501.6 650.4 L502.6 649.9 L503.7 651.4 L504.8 648.4 L505.9 648.5 L506.9 648.6 L508.0 649.5 L509.1 646.9 L510.2 647.4 L511.3 646.6 L512.3 643.8 L513.3 645.0 L514.4 644.5 L515.4 643.5 L516.5 642.4 L517.5 641.7 L518.6 640.9 L519.6 640.3 L520.6 639.3 L521.7 637.4 L522.7 636.8 L523.8 636.9 L524.8 635.5 L525.8 635.6 L526.9 635.5 L527.9 633.1 L529.0 632.5 L530.0 632.7 L531.0 630.6 L532.1 630.1 L533.1 627.3 L534.2 628.1 L535.2 627.7 L536.3 625.5 L537.3 624.4 L538.4 623.5 L539.5 622.9 L540.5 621.5 L541.6 619.1 L542.6 617.8 L543.7 618.1 L544.8 616.9 L545.8 615.4 L546.9 614.6 L547.9 613.0 L548.9 611.3 L550.0 611.5 L551.1 608.9 L552.1 608.1 L553.1 607.2 L554.2 606.8 L555.2 603.9 L556.2 603.7 L557.2 602.4 L558.3 601.3 L559.3 600.1 L560.4 598.5 L561.4 597.4 L562.4 596.2 L563.5 594.3 L564.5 593.5 L565.6 592.0 L566.6 590.3 L567.6 589.4 L568.7 587.9 L569.7 586.1 L570.8 586.0 L571.8 584.3 L572.9 584.8 L573.9 581.9 L574.9 580.4 L576.0 579.7 L577.0 577.8 L578.1 577.3 L579.1 575.7 L580.1 575.0 L581.2 573.3 L582.2 571.7 L583.3 570.5 L584.3 569.7 L585.4 568.9 L586.4 567.6 L587.4 566.2 L588.5 565.9 L589.5 563.3 L590.6 563.0 L591.6 561.0 L592.7 559.9 L593.8 557.9 L594.9 558.4 L595.9 556.4 L597.0 553.6 L598.0 553.9 L598.9 550.9 L600.1 551.0 L601.2 550.0 L602.2 549.1 L603.2 546.4 L604.2 545.6 L605.2 545.5 L606.2 543.4 L607.2 542.7 L608.2 538.9 L609.2 539.1 L610.3 537.5 L611.5 536.5 L612.4 536.0 L613.4 534.6 L614.5 534.5 L615.5 532.6 L616.6 531.5 L617.7 530.5 L618.8 529.5 L619.8 529.4 L620.9 527.1 L621.9 526.9 L623.0 526.8 L624.0 525.3 L625.0 525.0 L626.1 523.0 L627.1 522.0 L628.2 521.2 L629.2 519.2 L630.2 519.5 L631.3 517.7 L632.3 515.7 L633.4 516.4 L634.4 514.7 L635.5 514.9 L636.5 512.9 L637.5 513.5 L638.6 511.5 L639.6 510.5 L640.7 509.8 L641.7 508.1 L642.8 507.0 L643.8 507.0 L644.8 507.1 L645.9 505.1 L646.9 504.3 L648.0 503.8 L649.0 503.1 L650.0 500.2 L651.1 499.6 L652.1 500.0 L653.2 498.1 L654.2 498.1 L655.2 496.6 L656.2 495.8 L657.2 494.3 L658.2 494.0 L659.2 494.0 L660.3 491.8 L661.5 492.2 L662.5 489.6 L663.5 491.0 L664.6 488.6 L665.7 488.8 L666.8 488.6 L667.9 488.0 L669.1 486.8 L670.2 486.5 L671.3 486.6 L672.5 485.0 L673.6 485.0 L674.7 485.0 L675.9 483.2 L677.1 483.5 L678.2 483.3 L679.4 482.9 L680.5 482.0 L681.5 479.5 L682.5 480.9 L683.4 479.7 L684.7 479.5 L685.8 479.8 L686.8 480.5 L687.8 479.5 L688.7 478.7 L689.7 479.2 L690.7 478.8 L691.6 479.9 L692.6 478.7 L693.6 478.8 L694.7 479.1 L696.0 477.9 L696.9 478.9 L697.9 479.1 L698.9 479.4 L700.0 479.8 L701.2 479.5 L702.3 480.3 L703.5 482.0 L704.7 481.3 L705.8 482.5 L707.0 482.5 L708.1 481.9 L709.2 483.0 L710.3 483.1 L711.4 483.7 L712.5 483.5 L713.6 483.4 L714.7 484.6 L715.8 484.2 L716.9 485.2 L717.9 485.3 L719.0 484.8 L720.1 486.9 L721.1 487.6 L722.2 487.8 L723.2 487.9 L724.2 488.3 L725.2 488.7 L726.2 490.5 L727.2 491.1 L728.3 491.6 L729.3 491.3 L730.4 491.6 L731.4 493.1 L732.4 493.5 L733.5 494.7 L734.5 493.9 L735.6 494.4 L736.6 495.9 L737.6 497.0 L738.7 497.4 L739.7 497.9 L740.8 499.2 L741.8 499.5 L742.9 500.5 L743.9 502.2 L745.0 502.9 L746.0 504.2 L747.1 504.1 L748.1 506.3 L749.2 506.8 L750.3 507.1 L751.3 509.1 L752.4 508.2 L753.4 510.4 L754.4 510.3 L755.4 510.9 L756.6 512.5 L757.7 514.8 L758.9 514.1 L759.9 516.6 L761.0 517.3 L762.1 517.9 L763.2 518.4 L764.3 520.6 L765.5 522.6 L766.6 522.7 L767.8 525.0 L768.9 525.2 L770.0 525.5 L771.0 526.7 L772.1 529.4 L773.2 530.1 L774.2 532.2 L775.3 534.8 L776.3 535.5 L777.3 536.0 L778.4 537.9 L779.4 537.1 L780.5 540.2 L781.5 542.3 L782.6 543.0 L783.6 544.8 L784.6 546.1 L785.7 547.1 L786.7 549.0 L787.8 549.9 L788.8 550.9 L789.9 551.8 L790.9 554.0 L791.8 555.4 L792.8 557.0 L793.8 557.8 L794.9 559.5 L796.1 560.3 L797.0 560.1 L798.0 560.8 L799.1 560.5 L800.2 559.3 L801.4 559.7 L802.5 557.6 L803.6 557.3 L804.6 557.0 L805.5 556.2 L806.7 556.8 L807.8 555.3 L808.8 553.5 L809.8 553.4 L810.7 550.5 L811.8 551.8 L812.8 550.0 L813.8 548.2 L814.9 546.3 L815.9 546.6 L817.0 546.6 L818.0 544.3 L819.0 545.5 L820.1 543.3 L821.1 543.4 L822.2 544.7 L823.3 543.4 L824.3 544.5 L825.3 544.8 L826.4 544.2 L827.4 543.5 L828.5 544.6 L829.5 545.5 L830.5 545.5 L831.6 546.9 L832.5 547.4 L833.5 547.4 L834.5 546.2 L835.6 547.5 L836.8 547.3 L837.7 547.4 L838.7 547.9 L839.7 549.1 L840.8 548.5 L841.8 549.8 L842.9 550.2 L844.1 551.0 L845.1 550.2 L846.2 550.8 L847.3 551.0 L848.3 551.7 L849.4 551.4 L850.4 552.1 L851.5 553.4 L852.6 553.3 L853.6 552.4 L854.6 553.3 L855.6 554.1 L856.7 554.6 L857.7 554.0 L858.7 553.2 L859.7 552.7 L860.7 553.4 L861.7 553.4 L862.7 552.5 L863.7 552.6 L864.8 552.0 L865.8 550.0 L866.8 550.2 L867.8 551.1 L868.8 550.7 L869.8 550.6 L870.8 549.9 L871.9 549.9 L872.9 549.6 L873.8 549.3 L874.8 549.5 L875.7 549.5 L876.7 549.1 L877.7 548.0 L878.8 547.9 L880.0 547.9 L880.9 547.6 L881.9 546.9 L882.9 546.8 L884.0 547.6 L885.1 546.9 L886.2 547.4 L887.3 547.8 L888.4 547.8 L889.5 547.2 L890.6 547.8 L891.7 547.8 L892.7 548.0 L893.8 548.4 L894.9 547.9 L895.9 548.1 L897.0 547.6 L898.0 547.4 L899.1 547.7 L900.2 548.4 L901.2 547.9 L902.3 546.2 L903.4 547.8 L904.4 547.4 L905.5 547.5 L906.5 548.5 L907.6 546.6 L908.7 548.5 L909.7 547.9 L910.8 547.1 L911.8 547.8 L912.9 547.7 L914.0 547.9 L915.0 547.9 L916.1 547.4 L917.2 548.6 L918.2 547.8 L919.3 547.6 L920.3 546.7 L921.4 548.3 L922.5 547.0 L923.5 548.0 L924.6 548.2 L925.6 546.9 L926.7 548.0 L927.8 548.0 L928.8 547.8 L929.9 547.8 L931.0 548.0 L932.0 548.1 L933.1 547.8 L934.1 548.4 L935.2 547.5 L936.3 546.7 L937.3 548.3 L938.4 547.7 L939.4 547.0 L940.5 547.0 L941.6 548.0 L942.6 547.7 L943.7 547.3 L944.8 548.1 L945.8 548.1 L946.9 548.1 L947.9 546.9 L949.0 548.8 L950.1 548.0 L951.1 547.6 L952.2 547.6 L953.2 547.8 L954.3 547.5 L955.4 548.4 L956.4 548.1 L957.5 547.9 L958.6 547.6 L959.6 547.1 L960.7 547.4 L961.7 547.6 L962.8 546.2 L963.9 546.6 L964.9 547.3 L966.0 548.6 L967.0 548.4 L968.1 547.2 L969.2 547.8 L970.2 547.7 L971.3 548.0 L972.4 548.2 L973.4 547.8 L974.5 548.7 L975.5 548.6 L976.6 547.3 L977.7 546.9 L978.7 548.2 L979.8 547.6 L980.8 547.3 L981.9 547.5 L983.0 547.5 L984.0 547.0 L985.1 547.9 L986.1 547.9 L987.2 548.0 L988.3 547.4 L989.3 547.6 L990.4 546.8 L991.5 548.1 L992.5 547.5 L993.6 546.4 L994.6 547.0 L995.7 548.0 L996.8 548.0 L997.8 548.3 L998.9 547.4 L999.9 548.6 L1001.0 548.3 L1002.1 546.6 L1003.1 548.0 L1004.2 548.5 L1005.3 546.6 L1006.3 548.2 L1007.4 548.5 L1008.4 548.1 L1009.5 547.6 L1010.6 547.3 L1011.6 547.6 L1012.7 547.8 L1013.7 547.9 L1014.8 547.7 L1015.9 546.8 L1016.9 547.4 L1018.0 548.4 L1019.1 548.1 L1020.1 547.2 L1021.2 547.7 L1022.2 548.5 L1023.3 547.7 L1024.4 547.1 L1025.4 548.4 L1026.5 547.0 L1027.5 547.7 L1028.6 547.7 L1029.7 547.1 L1030.7 548.3 L1031.8 547.9 L1032.9 547.6 L1033.9 546.8 L1035.0 547.9 L1036.0 548.1 L1037.1 548.4 L1038.2 548.4 L1039.2 548.3 L1040.3 547.8 L1041.3 547.7 L1042.4 547.5 L1043.5 546.7 L1044.5 547.8 L1045.6 547.5 L1046.7 547.8 L1047.7 549.0 L1048.8 547.8 L1049.8 547.4 L1050.9 549.7 L1052.0 547.7 L1053.0 547.1 L1054.1 548.5 L1055.1 548.5 L1056.2 548.5 L1057.3 547.9 L1058.3 546.7 L1059.4 547.2 L1060.5 548.6 L1061.5 547.6 L1062.6 548.1 L1063.6 548.2 L1064.7 547.7 L1065.8 547.3 L1066.8 548.0 L1067.9 548.2 L1068.9 548.8 L1070.0 547.8 L1071.1 547.7 L1072.1 548.7 L1073.2 547.6 L1074.3 547.3 L1075.3 547.1 L1076.4 547.5 L1077.4 548.1 L1078.5 546.7 L1079.6 548.6 L1080.6 547.9 L1081.7 547.1 L1082.7 548.0 L1083.8 546.6 L1084.9 548.3 L1085.9 548.0 L1087.0 547.8 L1088.1 547.4 L1089.1 547.4 L1090.2 548.0 L1091.2 548.3 L1092.3 547.3 L1093.4 548.1 L1094.4 546.8 L1095.5 547.9 L1096.5 547.9 L1097.6 548.9 L1098.7 547.5 L1099.7 548.6 L1100.8 548.1 L1101.9 548.0 L1102.9 547.8 L1104.0 546.9 L1105.0 548.7 L1106.1 547.7 L1107.2 547.8 L1108.2 547.4 L1109.3 547.7 L1110.3 547.9 L1111.4 547.8 L1112.5 548.0 L1113.5 547.5 L1114.6 547.4 L1115.7 548.3 L1116.7 548.5 L1117.8 547.8 L1118.8 548.3 L1119.9 548.6 L1121.0 548.7 L1122.0 547.5 L1123.1 548.0 L1124.1 547.0 L1125.2 548.3 L1126.3 547.6 L1127.3 548.0 L1128.4 547.4 L1129.5 548.2 L1130.5 547.5 L1131.6 548.2 L1132.6 547.8 L1133.7 546.8 L1134.8 548.6 L1135.8 548.8 L1136.9 547.7 L1137.9 547.7 L1139.0 547.7 L1140.1 548.5 L1141.1 547.1 L1142.2 547.7 L1143.3 548.6 L1144.3 548.3 L1145.4 548.4 L1146.4 547.6 L1147.5 548.3 L1148.6 547.6 L1149.6 547.5 L1150.7 547.6 L1151.7 547.4 L1152.8 547.1 L1153.9 549.0 L1154.9 546.3 L1156.0 548.1 L1157.1 546.8 L1158.1 548.5 L1159.2 548.4 L1160.2 547.9 L1161.3 547.5 L1162.4 547.9 L1163.4 547.0 L1164.5 548.0 L1165.5 548.2 L1166.6 547.5 L1167.7 547.9 L1168.7 548.9 L1169.8 548.3 L1170.9 547.3 L1171.9 547.3 L1173.0 548.1 L1174.0 548.7 L1175.1 547.9 L1176.2 548.2 L1177.2 547.4 L1178.3 548.0 L1179.3 547.2 L1180.4 548.1 L1181.5 547.9 L1182.5 547.9 L1183.6 547.9 L1184.6 548.1 L1185.7 547.7 L1186.8 548.7 L1187.8 548.5 L1188.9 548.3 L1190.0 547.4 L1191.0 549.0 L1192.1 548.0 L1193.1 547.9 L1194.2 548.8 L1195.3 548.9 L1196.3 548.0 L1197.4 548.3 L1198.4 547.6 L1199.5 548.7 L1200.6 548.2 L1201.6 548.7 L1202.7 547.3 L1203.8 549.1 L1204.8 548.5 L1205.9 547.5 L1206.9 547.4 L1208.0 548.7 L1209.1 548.4 L1210.1 547.5 L1211.2 548.5 L1212.2 548.8 L1213.3 548.6 L1214.4 547.6 L1215.4 548.3 L1216.5 548.2 L1217.6 548.0 L1218.6 547.8 L1219.7 548.6 L1220.7 548.0 L1221.8 549.5 L1222.9 547.6 L1223.9 549.4 L1225.0 548.3 L1226.0 548.7 L1227.1 548.7 L1228.2 549.0 L1229.2 547.3 L1230.3 548.4 L1231.4 547.5 L1232.4 548.2 L1233.5 547.5 L1234.5 548.1 L1235.6 549.9 L1236.7 547.6 L1237.7 548.6 L1238.8 547.4 L1239.8 548.3 L1240.9 548.2 L1242.0 547.9 L1243.0 548.2 L1244.1 548.6 L1245.2 548.0 L1246.2 547.7 L1247.3 548.8 L1248.3 548.3 L1249.4 548.4 L1250.5 548.3 L1251.5 547.7 L1252.6 547.4 L1253.6 548.1 L1254.7 549.1 L1255.8 548.8 L1256.8 547.5 L1257.9 547.8 L1259.0 548.0 L1260.0 548.0 L1261.1 547.8 L1262.1 548.9 L1263.2 548.7 L1264.3 548.2 L1265.3 548.2 L1266.4 548.7 L1267.6 547.3 L1268.8 547.6 L1270.1 549.1 L1271.3 547.9 L1272.5 547.6 L1273.6 548.1 L1274.7 548.1 L1275.6 548.6 L1276.4 548.8 L1277.0 548.8" fill="none" stroke="#22b8c8" stroke-width="1.2"/>
 <path d="M35.0 543.5 L36.1 543.8 L37.5 543.2 L39.2 543.7 L41.1 544.1 L43.0 543.8 L44.9 544.5 L46.7 543.0 L48.4 543.6 L50.0 543.1 L51.7 543.1 L53.4 543.5 L55.1 543.7 L56.7 543.8 L58.4 543.9 L60.1 544.9 L61.7 544.1 L63.4 542.7 L65.1 543.7 L66.7 543.2 L68.4 543.3 L70.1 544.4 L71.8 543.5 L73.4 542.5 L75.1 543.8 L76.8 543.5 L78.4 543.0 L80.1 543.1 L81.8 543.3 L83.5 543.7 L85.1 543.4 L86.8 543.7 L88.5 544.8 L90.1 543.2 L91.8 543.2 L93.5 543.6 L95.2 544.4 L96.8 543.3 L98.5 544.6 L100.2 543.0 L101.8 543.1 L103.5 543.7 L105.2 543.3 L106.9 543.4 L108.5 544.1 L110.2 544.2 L111.9 543.9 L113.5 543.6 L115.2 544.6 L116.9 544.1 L118.5 543.7 L120.2 544.6 L121.9 543.3 L123.6 543.9 L125.2 544.2 L126.9 543.9 L128.6 543.5 L130.2 544.1 L131.9 543.6 L133.6 543.5 L135.3 543.3 L136.9 544.7 L138.6 543.6 L140.3 544.6 L141.9 544.1 L143.6 543.8 L145.3 544.3 L147.0 544.1 L148.6 544.0 L150.3 543.1 L152.0 544.0 L153.6 544.5 L155.3 544.3 L157.0 544.6 L158.7 544.9 L160.3 544.2 L162.0 545.2 L163.7 543.1 L165.3 543.9 L167.0 542.5 L168.7 544.5 L170.4 544.1 L172.0 545.0 L173.7 543.8 L175.4 542.8 L177.0 544.8 L178.7 543.3 L180.4 543.3 L182.0 544.0 L183.7 544.5 L185.4 543.8 L187.1 544.2 L188.7 543.0 L190.4 545.1 L192.1 544.1 L193.7 544.2 L195.4 544.5 L197.1 544.2 L198.8 544.3 L200.4 543.6 L202.1 544.1 L203.8 544.4 L205.4 544.8 L207.1 544.1 L208.8 544.2 L210.5 544.4 L212.1 544.5 L213.8 544.3 L215.5 544.0 L217.1 543.9 L218.8 544.9 L220.5 544.4 L222.2 544.2 L223.8 546.3 L225.5 544.8 L227.2 544.8 L228.8 544.3 L230.5 543.7 L232.2 544.9 L233.8 544.2 L235.5 544.3 L237.2 544.9 L238.9 544.9 L240.5 544.4 L242.2 544.3 L243.9 545.6 L245.5 544.7 L247.2 543.7 L248.9 544.8 L250.6 544.4 L252.2 544.4 L253.9 544.8 L255.6 544.5 L257.2 545.6 L258.9 544.5 L260.6 544.5 L262.3 545.1 L263.9 544.1 L265.6 545.0 L267.3 544.4 L268.9 545.1 L270.6 543.9 L272.3 544.7 L274.0 543.5 L275.6 544.2 L277.3 544.5 L279.0 544.7 L280.6 545.6 L282.3 545.6 L284.0 543.7 L285.6 544.0 L287.3 545.2 L289.0 544.8 L290.7 543.7 L292.3 544.8 L294.0 543.8 L295.7 544.0 L297.3 543.8 L299.0 544.4 L300.7 545.9 L302.4 544.8 L304.0 544.5 L305.7 546.1 L307.4 544.3 L309.0 544.5 L310.7 544.4 L312.4 544.8 L314.1 544.4 L315.7 545.5 L317.4 544.4 L319.1 544.9 L320.7 544.7 L322.4 544.1 L324.1 544.0 L325.8 544.6 L327.4 543.3 L329.1 544.7 L330.8 544.7 L332.4 544.7 L334.1 544.6 L335.8 544.9 L337.5 544.5 L339.1 545.1 L340.8 543.7 L342.5 545.2 L344.1 544.2 L345.8 545.0 L347.5 544.4 L349.1 544.5 L350.8 544.3 L352.5 545.5 L354.2 544.1 L355.8 544.0 L357.5 544.9 L359.2 544.9 L360.8 544.8 L362.5 544.2 L364.2 544.4 L365.9 545.3 L367.5 544.2 L369.2 545.2 L370.9 545.2 L372.5 544.9 L374.2 544.1 L375.9 546.0 L377.6 544.9 L379.2 545.0 L380.9 544.6 L382.6 544.3 L384.2 544.7 L385.9 545.0 L387.6 544.4 L389.3 544.9 L390.9 545.6 L392.6 545.2 L394.3 544.8 L395.9 545.5 L397.6 545.5 L399.3 545.5 L400.9 544.4 L402.6 543.8 L404.3 545.4 L406.0 545.0 L407.6 544.7 L409.3 545.2 L411.0 544.7 L412.9 544.6 L414.7 546.1 L416.5 544.2 L418.2 545.6 L419.7 545.7 L421.0 545.6 L423.0 545.6 L424.3 546.0 L425.5 543.0 L426.0 541.3 L426.5 538.0 L427.0 535.5 L427.5 532.3 L428.0 528.8 L428.5 525.1 L429.0 522.2 L429.5 518.0 L430.0 515.8 L430.8 512.0 L431.5 508.6 L432.2 505.4 L433.0 503.1 L433.8 499.5 L434.5 498.3 L435.8 496.1 L437.2 494.9 L439.0 493.1 L440.2 491.2 L441.6 489.3 L443.0 488.1 L444.6 484.2 L446.3 482.6 L448.0 479.6 L449.4 478.4 L450.9 475.6 L452.5 472.6 L454.1 470.4 L455.7 468.3 L457.2 465.9 L458.7 463.4 L460.0 461.7 L461.8 459.1 L463.3 457.2 L464.7 455.3 L466.1 453.4 L467.5 451.1 L469.0 449.5 L470.5 447.0 L472.0 444.8 L473.5 442.9 L475.0 440.8 L476.9 438.1 L478.7 434.8 L480.6 433.2 L482.4 430.2 L484.3 427.4 L486.3 423.7 L488.1 421.3 L489.9 419.1 L491.5 418.2 L493.0 418.9 L494.4 418.4 L495.9 418.6 L497.4 417.0 L498.8 416.8 L500.3 415.3 L501.9 413.5 L503.4 412.3 L504.9 410.1 L506.5 408.7 L508.1 407.3 L509.4 404.6 L511.0 403.4 L512.2 400.8 L513.9 397.1 L515.3 394.6 L517.0 392.0 L518.8 389.2 L520.8 386.5 L522.8 384.7 L524.2 381.7 L525.7 380.3 L527.3 378.5 L528.9 375.7 L530.5 373.9 L532.0 372.4 L533.5 370.2 L534.8 369.4 L536.6 368.0 L538.1 365.9 L539.5 364.7 L540.9 364.3 L542.3 363.1 L543.8 361.5 L545.2 360.5 L546.6 359.3 L548.1 358.3 L549.8 357.4 L551.4 356.0 L553.0 354.9 L554.8 354.0 L556.6 354.5 L558.3 353.0 L560.0 352.4 L561.6 352.8 L563.2 351.9 L564.7 351.9 L566.2 350.6 L567.8 350.1 L569.3 349.7 L570.8 349.7 L572.4 349.1 L573.9 348.6 L575.5 348.8 L577.0 348.1 L578.6 346.9 L580.2 347.3 L581.7 347.3 L583.3 346.9 L584.9 348.0 L586.4 347.6 L588.0 347.8 L589.6 347.1 L591.1 346.9 L592.7 347.6 L594.3 347.2 L595.8 347.1 L597.4 347.3 L599.0 347.4 L600.6 347.4 L602.1 347.2 L603.7 347.5 L605.3 348.3 L606.8 347.7 L608.6 347.1 L610.4 348.0 L612.1 347.1 L613.8 346.8 L615.6 346.8 L617.5 346.6 L619.5 347.7 L621.4 346.9 L623.1 346.8 L624.4 347.1 L626.0 347.4 L628.5 350.6 L631.3 354.8 L632.2 352.2 L633.1 348.2 L634.0 345.9 L634.7 348.7 L635.4 353.0 L636.1 357.3 L636.8 358.8 L637.5 356.4 L638.2 352.5 L638.8 347.8 L639.5 345.2 L640.2 347.0 L640.8 351.9 L641.5 356.8 L642.2 358.4 L643.1 356.7 L644.0 350.9 L645.0 347.9 L646.5 351.8 L648.0 356.4 L649.3 352.8 L650.8 349.8 L652.3 349.8 L654.7 349.4 L656.1 350.2 L657.9 350.5 L659.8 351.0 L661.7 351.1 L663.5 350.7 L665.0 351.7 L667.0 351.2 L668.4 351.8 L670.0 353.7 L671.6 354.4 L673.4 354.9 L675.3 356.8 L677.1 357.9 L678.8 358.9 L680.5 359.5 L682.3 360.3 L684.2 361.4 L685.9 363.0 L687.6 364.3 L689.4 365.5 L691.2 366.7 L693.0 368.5 L694.8 369.1 L696.5 370.5 L698.3 372.7 L700.0 373.1 L701.8 374.2 L703.6 375.8 L705.3 375.7 L707.1 377.7 L708.8 377.5 L710.6 378.5 L712.3 379.3 L714.0 380.3 L715.8 381.3 L717.5 382.8 L719.4 383.2 L720.8 384.2 L722.3 384.4 L723.8 384.0 L725.4 384.8 L726.9 384.9 L728.5 385.3 L730.0 385.9 L731.5 386.4 L733.0 386.8 L734.5 386.3 L736.1 387.4 L737.6 387.7 L739.1 388.8 L740.6 388.4 L742.1 388.8 L743.6 389.0 L745.1 389.5 L746.6 389.0 L748.1 389.5 L749.6 389.7 L751.2 389.9 L752.7 390.0 L754.2 390.2 L755.7 390.6 L757.3 390.4 L758.8 391.6 L760.3 391.2 L761.7 390.7 L763.3 391.2 L764.9 391.6 L766.5 391.2 L768.0 391.1 L769.5 390.2 L771.1 391.4 L772.7 390.9 L774.2 390.1 L775.8 390.6 L777.4 391.2 L778.9 390.8 L780.5 390.0 L782.1 390.4 L783.6 390.7 L785.1 391.4 L786.7 390.8 L788.3 390.8 L789.9 390.1 L791.4 389.9 L792.9 389.4 L794.5 389.0 L796.1 388.6 L797.6 388.1 L799.1 387.4 L800.4 385.0 L801.3 383.3 L802.1 380.7 L802.9 377.6 L803.6 374.3 L804.3 371.8 L805.0 368.0 L805.8 364.4 L806.6 361.2 L807.5 357.3 L808.3 354.1 L809.1 351.1 L810.0 348.0 L810.9 345.3 L811.9 340.8 L812.9 337.1 L813.8 334.3 L814.8 331.4 L815.7 328.2 L816.5 326.1 L817.3 323.7 L818.0 321.5 L820.2 316.9 L821.7 316.1 L823.3 315.9 L825.0 316.1 L826.7 316.8 L828.6 320.2 L829.6 321.7 L830.7 324.4 L831.8 328.9 L832.9 332.0 L834.2 335.1 L835.6 337.9 L837.0 339.7 L838.5 340.7 L840.2 342.0 L841.8 343.2 L843.5 344.4 L844.9 345.2 L846.2 345.7 L848.3 349.8 L849.8 351.2 L851.5 353.0 L853.1 354.2 L854.8 354.3 L856.6 354.3 L858.5 354.1 L860.1 352.2 L861.8 349.5 L863.6 347.3 L865.4 344.8 L867.3 343.1 L868.7 341.0 L870.2 339.5 L871.7 337.9 L873.3 337.3 L874.9 336.2 L876.4 335.5 L878.0 335.1 L879.6 334.4 L881.2 335.2 L882.9 335.7 L884.5 337.5 L886.1 338.5 L887.6 338.7 L889.0 340.2 L891.0 341.3 L892.8 342.6 L894.3 344.0 L896.0 344.8 L897.7 346.3 L899.3 347.8 L901.0 349.0 L903.0 349.4 L904.4 350.7 L905.8 350.0 L907.4 349.0 L909.0 347.5 L910.7 349.1 L912.3 347.1 L913.9 346.6 L915.5 346.4 L917.1 346.4 L918.7 344.6 L920.3 342.8 L921.8 343.5 L923.3 343.3 L924.8 342.7 L926.4 343.8 L928.0 342.7 L929.4 343.4 L930.9 343.0 L932.4 344.2 L933.9 343.5 L935.4 344.6 L936.9 344.3 L938.4 344.5 L939.9 344.7 L941.4 343.7 L942.9 344.5 L944.4 345.1 L946.0 345.0 L947.5 346.1 L949.0 346.1 L950.5 345.3 L952.0 346.4 L953.5 345.5 L955.0 345.7 L956.6 345.9 L958.1 344.2 L959.6 344.0 L961.2 344.2 L962.7 343.9 L964.2 342.8 L965.8 343.9 L967.3 343.4 L968.8 343.1 L970.3 343.0 L971.9 342.9 L973.4 341.7 L974.9 342.1 L976.4 341.3 L978.0 341.1 L979.5 340.8 L981.0 342.1 L982.6 340.1 L984.1 341.4 L985.6 342.6 L987.1 342.3 L988.7 342.4 L990.2 343.7 L991.7 342.7 L993.2 343.3 L994.8 344.0 L996.3 343.7 L997.8 343.9 L999.3 344.5 L1000.8 345.4 L1002.3 344.5 L1003.8 345.7 L1005.3 345.5 L1007.0 345.5 L1008.5 345.0 L1010.2 346.9 L1011.9 346.2 L1013.6 345.9 L1015.3 345.6 L1017.0 346.7 L1018.7 345.3 L1020.4 345.1 L1022.1 345.2 L1023.8 345.7 L1025.4 345.9 L1027.1 344.5 L1028.8 345.9 L1030.5 345.9 L1032.2 346.3 L1033.8 345.5 L1035.5 346.6 L1037.2 346.9 L1038.9 345.4 L1040.5 345.5 L1042.2 346.3 L1043.9 346.4 L1045.6 345.7 L1047.2 346.4 L1048.9 344.7 L1050.6 346.2 L1052.3 345.9 L1054.0 346.2 L1055.6 346.0 L1057.3 346.1 L1059.0 345.4 L1060.7 346.5 L1062.3 344.4 L1064.0 345.8 L1065.7 345.3 L1067.4 346.8 L1069.0 345.0 L1070.7 345.7 L1072.4 345.7 L1074.1 346.1 L1075.8 345.7 L1077.4 345.0 L1079.1 345.6 L1080.8 346.4 L1082.5 346.1 L1084.1 345.2 L1085.8 344.9 L1087.5 344.9 L1089.2 345.6 L1090.9 345.6 L1092.5 345.4 L1094.2 345.3 L1095.9 345.8 L1097.6 346.4 L1099.2 346.2 L1100.9 345.4 L1102.6 346.1 L1104.3 345.5 L1105.9 346.4 L1107.6 346.3 L1109.3 346.2 L1111.0 347.0 L1112.7 346.3 L1114.3 346.2 L1116.0 346.5 L1117.7 345.0 L1119.4 345.4 L1121.0 345.4 L1122.7 346.1 L1124.4 345.7 L1126.1 344.9 L1127.7 345.2 L1129.4 345.5 L1131.1 345.3 L1132.8 345.3 L1134.5 344.7 L1136.1 345.7 L1137.8 344.8 L1139.5 345.4 L1141.2 345.2 L1142.8 345.4 L1144.5 346.5 L1146.2 345.4 L1147.9 345.4 L1149.5 344.1 L1151.2 345.1 L1152.9 345.8 L1154.6 345.4 L1156.3 346.1 L1157.9 345.4 L1159.6 346.1 L1161.3 345.8 L1163.0 346.3 L1164.6 345.4 L1166.3 346.1 L1168.0 345.3 L1169.7 345.1 L1171.3 346.3 L1173.0 344.8 L1174.7 345.0 L1176.4 346.6 L1178.1 345.7 L1179.7 345.8 L1181.4 345.7 L1183.1 345.6 L1184.8 346.8 L1186.4 345.6 L1188.1 346.4 L1189.8 345.6 L1191.5 345.2 L1193.1 345.4 L1194.8 345.6 L1196.5 347.1 L1198.2 345.2 L1199.9 345.8 L1201.5 344.6 L1203.2 345.9 L1204.9 345.5 L1206.6 345.8 L1208.2 345.6 L1209.9 345.3 L1211.6 345.6 L1213.3 345.6 L1215.0 346.2 L1216.6 345.5 L1218.3 345.5 L1220.0 344.8 L1221.7 346.1 L1223.3 345.5 L1225.0 345.0 L1226.7 346.3 L1228.4 346.1 L1230.0 345.5 L1231.7 345.6 L1233.4 344.8 L1235.1 344.1 L1236.8 345.6 L1238.4 344.6 L1240.1 345.9 L1241.8 345.3 L1243.5 345.7 L1245.1 345.2 L1246.8 345.8 L1248.5 346.0 L1250.2 345.6 L1251.8 346.0 L1253.5 346.0 L1255.2 345.4 L1256.9 344.5 L1258.6 345.9 L1260.2 345.2 L1261.9 344.9 L1263.6 344.4 L1265.3 344.5 L1267.0 346.3 L1269.0 346.6 L1270.9 346.3 L1272.8 346.7 L1274.5 344.4 L1275.9 346.0 L1277.0 344.7" fill="none" stroke="#dcd420" stroke-width="1.3"/>
 <path d="M35.0 347.0 L36.0 347.6 L37.5 346.6 L39.1 347.4 L41.0 346.9 L42.9 346.9 L44.8 347.8 L46.5 347.0 L48.2 347.0 L49.8 347.3 L51.5 347.5 L53.1 347.0 L54.8 347.2 L56.4 346.5 L58.0 346.8 L59.7 346.8 L61.3 346.4 L63.0 346.3 L64.6 346.2 L66.3 346.8 L67.9 346.9 L69.6 346.8 L71.2 347.0 L72.9 346.3 L74.5 346.9 L76.1 347.0 L77.8 347.3 L79.4 346.5 L81.1 346.7 L82.7 346.0 L84.4 346.7 L86.0 345.9 L87.7 346.3 L89.3 347.4 L91.0 345.9 L92.6 347.3 L94.3 347.0 L95.9 346.7 L97.5 347.1 L99.2 347.1 L100.8 347.3 L102.5 346.8 L104.1 346.6 L105.8 346.6 L107.4 346.4 L109.1 346.8 L110.7 346.5 L112.4 347.3 L114.0 346.0 L115.7 346.4 L117.3 346.4 L118.9 345.9 L120.6 347.7 L122.2 345.8 L123.9 346.7 L125.5 346.6 L127.2 347.6 L128.8 345.9 L130.5 347.3 L132.1 346.5 L133.8 346.7 L135.4 346.5 L137.0 347.1 L138.7 346.3 L140.3 346.8 L142.0 347.0 L143.6 347.6 L145.3 345.7 L146.9 347.5 L148.6 347.2 L150.2 346.6 L151.9 346.9 L153.5 346.6 L155.2 347.5 L156.8 346.9 L158.4 346.7 L160.1 346.7 L161.7 346.7 L163.4 346.7 L165.0 346.4 L166.7 347.7 L168.3 345.9 L170.0 345.1 L171.6 346.7 L173.3 346.7 L174.9 346.9 L176.6 346.6 L178.2 346.7 L179.8 346.9 L181.5 347.2 L183.1 346.5 L184.8 346.5 L186.4 347.6 L188.1 346.9 L189.7 346.3 L191.4 347.8 L193.0 347.1 L194.7 346.4 L196.3 346.2 L198.0 346.8 L199.6 346.3 L201.2 346.2 L202.9 346.1 L204.5 346.5 L206.2 347.2 L207.8 346.5 L209.5 346.0 L211.1 347.0 L212.8 346.7 L214.4 347.0 L216.1 347.2 L217.7 346.6 L219.3 346.6 L221.0 346.6 L222.6 346.1 L224.3 346.9 L225.9 347.3 L227.6 346.7 L229.2 346.5 L230.9 346.5 L232.5 346.3 L234.2 346.3 L235.8 346.4 L237.5 346.2 L239.1 346.4 L240.7 345.9 L242.4 346.8 L244.0 346.6 L245.7 346.1 L247.3 345.6 L249.0 346.6 L250.6 347.1 L252.3 346.3 L253.9 346.4 L255.6 346.3 L257.2 346.9 L258.9 346.2 L260.5 347.0 L262.1 346.4 L263.8 347.0 L265.4 346.6 L267.1 346.5 L268.7 345.9 L270.4 346.2 L272.0 346.4 L273.7 346.8 L275.3 346.7 L277.0 346.2 L278.6 346.7 L280.2 347.0 L281.9 346.5 L283.5 346.3 L285.2 346.4 L286.8 346.9 L288.5 346.8 L290.1 346.1 L291.8 346.7 L293.4 346.3 L295.0 346.2 L296.7 347.1 L298.3 346.9 L300.0 346.2 L301.7 346.5 L303.4 346.7 L305.0 346.2 L306.7 346.4 L308.4 346.8 L310.1 345.7 L311.8 346.6 L313.5 346.8 L315.2 346.7 L316.9 345.9 L318.6 346.6 L320.3 346.1 L321.9 346.8 L323.6 346.8 L325.3 346.6 L327.0 346.2 L328.7 346.2 L330.4 346.9 L332.1 346.1 L333.8 346.7 L335.5 346.7 L337.1 346.4 L338.8 347.6 L340.5 346.5 L342.2 347.5 L343.9 345.6 L345.6 345.5 L347.3 346.9 L349.0 346.8 L350.6 346.4 L352.3 346.5 L354.0 345.6 L355.7 346.2 L357.4 346.0 L359.1 346.4 L360.8 346.9 L362.5 346.5 L364.2 346.7 L365.8 346.2 L367.5 346.3 L369.2 346.6 L370.9 346.4 L372.6 347.1 L374.3 346.1 L376.0 347.4 L377.7 346.1 L379.4 347.0 L381.0 346.2 L382.7 347.2 L384.4 346.6 L386.1 346.7 L387.8 346.8 L389.5 346.2 L391.2 346.0 L392.9 345.6 L394.5 347.0 L396.2 346.2 L397.9 346.2 L399.6 346.5 L401.3 347.4 L403.0 345.7 L404.7 346.6 L406.4 346.3 L408.1 346.7 L409.7 345.7 L411.4 346.3 L413.1 346.9 L414.8 347.2 L416.5 347.2 L418.2 346.1 L419.9 346.5 L421.6 346.5 L423.4 345.9 L425.1 345.9 L426.8 346.9 L428.5 346.6 L430.0 346.4 L431.7 347.0 L433.2 345.9 L434.7 346.4 L436.1 346.1 L437.5 345.9 L439.0 346.0 L440.5 345.8 L442.0 345.7 L443.5 345.6 L445.0 346.2 L446.5 345.1 L448.0 345.6 L449.5 345.2 L450.9 344.6 L452.4 344.9 L453.9 344.0 L455.4 344.9 L457.0 344.0 L458.4 344.3 L459.9 344.9 L461.4 345.5 L462.9 345.9 L464.5 346.2 L466.0 346.1 L467.5 346.1 L469.0 347.1 L470.5 347.3 L472.1 347.1 L473.6 348.4 L475.1 348.3 L476.6 348.0 L478.0 348.8 L479.6 347.8 L481.0 347.4 L482.4 347.1 L483.8 346.0 L485.3 346.5 L487.0 347.0 L488.4 348.9 L489.8 350.2 L491.3 352.6 L492.8 354.5 L494.4 357.4 L495.9 360.6 L497.5 363.3 L499.0 365.4 L500.3 369.0 L501.7 372.0 L503.1 374.8 L504.5 378.6 L505.9 381.2 L507.2 384.7 L508.5 388.1 L509.8 390.9 L511.0 393.3 L512.7 395.5 L514.3 397.6 L515.8 400.2 L517.2 401.4 L518.6 403.3 L520.0 404.5 L521.6 407.0 L523.1 408.5 L524.6 409.8 L526.0 411.0 L527.5 412.4 L529.0 413.9 L530.5 415.7 L532.0 417.2 L533.5 418.7 L535.0 419.8 L536.5 421.6 L538.0 422.0 L539.5 423.2 L541.0 423.9 L542.5 424.1 L543.9 424.8 L545.3 426.7 L546.8 427.2 L548.3 428.2 L550.0 428.8 L551.4 429.3 L552.8 429.2 L554.4 429.7 L556.0 429.7 L557.6 430.0 L559.2 429.5 L560.8 430.6 L562.3 430.7 L563.9 430.3 L565.6 430.9 L567.2 431.3 L568.7 431.7 L570.2 431.7 L571.5 432.2 L573.5 431.8 L575.3 431.3 L576.9 431.2 L578.5 431.5 L580.3 430.9 L582.1 431.1 L583.8 431.0 L585.6 430.9 L587.4 431.1 L589.1 431.0 L590.9 431.3 L592.7 431.4 L594.4 431.7 L596.2 431.8 L597.9 432.4 L599.7 432.2 L601.5 431.7 L603.2 431.4 L605.0 430.7 L606.8 429.7 L608.5 429.5 L610.2 428.6 L611.9 427.9 L613.8 427.0 L615.4 426.8 L617.2 427.6 L619.0 427.9 L620.8 428.5 L622.6 428.7 L624.3 429.3 L626.0 429.1 L627.8 429.7 L629.5 429.5 L631.4 429.3 L632.9 430.0 L634.4 430.6 L636.0 429.7 L637.6 430.6 L639.2 430.2 L640.7 430.4 L642.0 430.7 L644.0 431.3 L645.7 431.6 L647.3 432.7 L649.0 433.5 L650.8 434.3 L652.5 434.5 L654.2 435.9 L656.0 436.6 L657.8 437.2 L659.5 436.5 L661.2 437.4 L663.0 437.2 L664.7 438.1 L666.3 438.2 L668.0 438.1 L670.0 439.0 L671.3 440.5 L672.8 441.9 L674.3 442.9 L675.9 444.6 L677.5 445.6 L679.1 447.9 L680.7 450.0 L682.2 452.1 L683.8 454.9 L685.4 456.6 L687.0 458.8 L688.5 462.1 L689.9 464.0 L691.3 466.1 L693.0 468.0 L694.6 468.9 L696.0 470.0 L697.5 471.1 L699.0 472.0 L700.3 474.7 L701.6 478.1 L702.9 480.3 L704.2 483.9 L705.5 486.7 L706.9 489.6 L708.2 493.1 L709.5 495.7 L710.8 498.1 L712.1 501.3 L713.4 503.6 L714.7 506.8 L715.8 510.0 L716.9 512.6 L718.1 515.2 L719.2 518.6 L720.3 521.5 L721.4 524.8 L722.5 527.6 L723.7 530.1 L724.8 533.0 L725.9 536.0 L727.0 538.9 L728.2 542.3 L729.3 545.3 L730.4 548.0 L731.7 550.9 L733.0 553.9 L734.3 557.4 L735.6 560.1 L736.9 563.4 L738.2 565.9 L739.5 569.4 L740.8 573.0 L742.1 575.4 L743.4 578.4 L744.7 581.9 L746.0 585.7 L747.1 588.5 L748.2 590.8 L749.4 593.7 L750.5 596.7 L751.6 599.4 L752.7 602.7 L753.9 605.5 L755.0 608.2 L756.1 611.6 L757.3 614.8 L758.4 617.8 L759.6 620.6 L760.7 623.9 L761.7 626.6 L763.4 629.0 L764.9 631.2 L766.4 633.4 L768.0 635.3 L769.5 637.3 L770.9 640.1 L772.5 641.6 L774.2 644.5 L775.8 647.2 L777.6 650.3 L779.4 653.8 L781.3 657.3 L783.0 660.4 L784.6 663.0 L786.2 665.7 L787.8 667.9 L789.3 670.3 L791.0 671.2 L792.5 671.7 L794.0 671.6 L795.5 670.4 L797.0 669.2 L798.5 667.8 L800.0 667.0 L801.6 665.8 L803.2 664.1 L804.7 662.8 L806.3 661.9 L808.0 660.0 L809.4 659.7 L810.8 658.7 L812.3 658.9 L813.9 658.0 L815.5 657.6 L817.0 657.5 L818.5 657.6 L820.2 658.4 L821.9 659.3 L823.6 661.6 L825.3 663.4 L827.0 664.1 L828.6 665.2 L830.1 664.6 L831.6 662.4 L833.1 660.8 L834.5 659.0 L836.1 657.4 L837.7 657.1 L839.2 657.0 L840.8 658.4 L842.5 660.1 L844.2 661.9 L845.9 663.2 L847.5 664.3 L849.0 665.2 L850.6 664.3 L852.2 664.5 L853.7 663.1 L855.1 661.6 L856.6 660.7 L858.0 659.4 L859.7 658.6 L861.4 658.3 L863.1 657.5 L864.7 657.6 L866.5 657.2 L868.0 657.7 L869.6 658.7 L871.1 660.6 L872.7 661.4 L874.3 662.6 L876.0 663.7 L877.5 664.8 L879.1 666.3 L880.7 667.9 L882.3 669.4 L883.8 670.5 L885.3 671.1 L886.6 671.3 L888.5 671.1 L890.2 669.6 L891.7 668.6 L893.3 667.9 L894.9 666.6 L896.4 665.8 L898.1 664.3 L900.0 664.3 L901.5 663.8 L903.1 663.6 L904.8 663.7 L906.5 662.4 L908.3 663.2 L910.0 662.9 L911.7 664.0 L913.3 663.0 L915.0 662.8 L916.7 663.3 L918.3 662.3 L920.0 663.3 L921.7 662.2 L923.3 662.4 L925.0 661.9 L926.7 662.6 L928.3 661.1 L930.0 662.3 L931.7 661.5 L933.3 661.8 L935.0 661.2 L936.7 661.8 L938.3 661.7 L940.0 661.8 L941.7 661.6 L943.3 661.6 L945.0 661.7 L946.7 661.0 L948.3 660.6 L950.0 660.4 L951.7 661.2 L953.4 660.7 L955.0 661.2 L956.7 660.7 L958.4 660.1 L960.0 660.9 L961.6 661.3 L963.2 660.3 L964.7 660.0 L966.2 660.0 L967.8 660.8 L969.3 660.1 L970.9 660.1 L972.4 660.6 L974.0 660.3 L975.6 660.3 L977.1 659.9 L978.7 659.9 L980.2 660.2 L981.7 660.2 L983.3 660.3 L984.8 659.8 L986.4 660.2 L988.0 660.2 L989.7 660.1 L991.4 660.3 L993.1 660.6 L994.9 660.3 L996.7 660.3 L998.4 659.9 L1000.1 660.5 L1001.9 660.4 L1003.6 660.3 L1005.3 660.1 L1007.1 660.8 L1008.8 661.8 L1010.5 660.8 L1012.3 660.7 L1014.0 660.9 L1015.7 660.5 L1017.5 660.9 L1019.2 660.6 L1020.9 660.7 L1022.7 661.1 L1024.4 661.2 L1026.1 661.0 L1027.9 660.8 L1029.6 661.3 L1031.3 660.8 L1033.0 661.7 L1034.7 661.2 L1036.4 661.4 L1038.2 661.8 L1040.0 661.8 L1041.4 660.9 L1042.9 661.4 L1044.4 661.7 L1045.9 661.0 L1047.4 660.4 L1049.0 661.4 L1050.5 661.4 L1052.0 661.6 L1053.5 661.4 L1055.0 661.4 L1056.5 661.5 L1058.0 662.0 L1059.5 661.6 L1061.0 661.6 L1062.5 661.1 L1064.0 661.8 L1065.5 661.2 L1067.0 661.6 L1068.5 660.3 L1070.0 661.4 L1071.5 661.2 L1073.0 661.0 L1074.5 661.8 L1076.0 661.4 L1077.5 661.1 L1079.0 660.9 L1080.5 662.0 L1082.0 661.5 L1083.5 661.4 L1085.0 660.8 L1086.5 661.7 L1088.0 661.4 L1089.5 661.0 L1091.0 661.0 L1092.5 660.3 L1094.0 661.3 L1095.5 660.5 L1097.0 661.4 L1098.5 660.8 L1100.0 660.7 L1101.5 661.2 L1103.0 661.1 L1104.5 660.5 L1106.0 661.0 L1107.5 661.4 L1109.0 661.0 L1110.5 660.6 L1112.0 661.1 L1113.5 660.8 L1115.0 661.0 L1116.5 661.3 L1118.0 661.3 L1119.5 661.2 L1121.0 660.6 L1122.5 661.5 L1124.0 661.3 L1125.5 661.2 L1127.0 661.5 L1128.5 662.3 L1130.0 660.9 L1131.5 660.8 L1133.0 661.9 L1134.5 661.2 L1136.0 662.2 L1137.5 661.2 L1139.0 661.4 L1140.5 662.0 L1142.0 662.1 L1143.5 661.9 L1145.0 662.0 L1146.5 661.7 L1148.0 661.6 L1149.5 661.7 L1151.0 662.4 L1152.5 662.2 L1154.0 661.9 L1155.5 662.1 L1157.0 662.3 L1158.5 662.5 L1160.0 661.9 L1161.7 662.0 L1163.4 662.1 L1165.0 663.1 L1166.7 662.0 L1168.3 662.5 L1170.0 661.2 L1171.7 662.2 L1173.3 661.2 L1175.0 661.3 L1176.7 661.5 L1178.3 661.7 L1180.0 661.8 L1181.7 661.9 L1183.3 661.8 L1185.0 661.4 L1186.7 662.8 L1188.3 661.8 L1190.0 661.9 L1191.7 662.5 L1193.3 662.0 L1195.0 661.8 L1196.7 661.6 L1198.3 662.3 L1200.0 660.9 L1201.7 661.0 L1203.3 661.4 L1205.0 660.4 L1206.7 661.0 L1208.3 661.8 L1210.0 661.1 L1211.7 661.3 L1213.3 661.5 L1215.0 660.7 L1216.7 661.3 L1218.3 660.9 L1220.0 660.7 L1221.7 661.0 L1223.3 661.0 L1225.0 660.9 L1226.7 660.7 L1228.3 661.4 L1230.0 661.5 L1231.7 661.3 L1233.4 661.0 L1235.0 660.7 L1236.7 660.8 L1238.4 660.8 L1240.1 661.4 L1241.8 661.8 L1243.4 661.8 L1245.1 661.5 L1246.8 661.4 L1248.5 661.7 L1250.1 661.7 L1251.8 662.0 L1253.5 662.4 L1255.2 661.5 L1256.9 662.8 L1258.5 661.0 L1260.2 661.2 L1261.9 661.3 L1263.6 661.6 L1265.2 662.0 L1267.0 663.1 L1268.9 661.9 L1270.9 662.8 L1272.8 662.2 L1274.5 662.5 L1275.9 662.0 L1277.0 663.5" fill="none" stroke="#d01e3a" stroke-width="1.2"/>
 <path d="M677 479.4 H699" stroke="#d0c020" stroke-width="1.2" stroke-dasharray="5 2"/><path d="M687.6 468 V490" stroke="#d0c020" stroke-width="1.2"/>
 <!-- zoom markers -->
 <path d="M38.5 490.6 H53.5 L61.3 499.5 L53.5 508 H38.5 Q37 508 37 506.5 V492.1 Q37 490.6 38.5 490.6Z" fill="#141405" stroke="#b8b030" stroke-width="1.4"/>
 <text x="48.5" y="502.2" font-size="8.8" fill="#c8c040" text-anchor="middle" letter-spacing="1">C1</text>
 <path d="M38.5 597.5 H53 L60.5 605.5 L53 613.5 H38.5 Q37 613.5 37 612 V599 Q37 597.5 38.5 597.5Z" fill="#140a1a" stroke="#5e2c78" stroke-width="1.4"/>
 <text x="47.5" y="609" font-size="8.5" font-weight="bold" fill="#e0d8e8" text-anchor="middle" letter-spacing="0.8">M2</text>
 <path d="M38 645 H54 L61.5 653.7 L54 662.5 H38 Q36.5 662.5 36.5 661 V646.5 Q36.5 645 38 645Z" fill="#28c4d4"/>
 <text x="48.5" y="657" font-size="8.8" fill="#10303a" text-anchor="middle" letter-spacing="1">C2</text>
</svg>

<!-- overview labels -->
<div class="lbl" style="left:158.7px;top:161px;font-size:9px">0 s</div>
<div class="lbl" style="left:283.8px;top:161px">10 µs</div>
<div class="lbl" style="left:408px;top:161px">20 µs</div>
<div class="lbl" style="left:532.2px;top:161px">30 µs</div>
<div class="lbl" style="left:656.4px;top:161px">40 µs</div>
<div class="lbl" style="left:780.6px;top:161px">50 µs</div>
<div class="lbl" style="left:904.8px;top:161px">60 µs</div>
<div class="lbl" style="left:1029px;top:161px">70 µs</div>
<div class="lbl" style="left:1153.2px;top:161px">80 µs</div>
<div class="ovl" style="top:49px">400 A</div>
<div class="ovl" style="top:62px">350 A</div>
<div class="ovl" style="top:75.5px">300 A</div>
<div class="ovl" style="top:88.5px">250 A</div>
<div class="ovl" style="top:101.5px">200 A</div>
<div class="ovl" style="top:115px">150 A</div>
<div class="ovl" style="top:128px">100 A</div>
<div class="ovl" style="top:141px">50 A</div>
<div class="ovl" style="top:154.5px">0 A</div>

<!-- zoom labels -->
<div class="lbl" style="left:80.2px;top:692px">45.92 µs</div>
<div class="lbl" style="left:204.5px;top:692px">45.96 µs</div>
<div class="lbl" style="left:328.7px;top:692px">46 µs</div>
<div class="lbl" style="left:453px;top:692px">46.04 µs</div>
<div class="lbl" style="left:577.2px;top:692px">46.08 µs</div>
<div class="lbl" style="left:701.5px;top:692px">46.12 µs</div>
<div class="lbl" style="left:825.7px;top:692px">46.16 µs</div>
<div class="lbl" style="left:950px;top:692px">46.20 µs</div>
<div class="lbl" style="left:1074.2px;top:692px">46.24 µs</div>
<div class="lbl" style="left:1198.5px;top:692px">46.28 µs</div>
<div class="ylbl" style="top:237px">400 A</div>
<div class="ylbl" style="top:289px">350 A</div>
<div class="ylbl" style="top:341px">300 A</div>
<div class="ylbl" style="top:392px">250 A</div>
<div class="ylbl" style="top:444px">200 A</div>
<div class="ylbl" style="top:495px">150 A</div>
<div class="ylbl" style="top:546px">100 A</div>
<div class="ylbl" style="top:598px">50 A</div>
<div class="ylbl" style="top:649px">0 A</div>

<div class="big" style="left:67px;top:318.5px;color:#e04a64">Vds</div>
<div class="big" style="left:77.5px;top:504px;color:#e8d838">Vgs</div>
<div class="big" style="left:69.5px;top:579.5px;color:#8434b0;text-shadow:0 1.5px 0 #c88020;font-size:25px;transform:scaleX(0.69)">Vds x Id</div>
<div class="big" style="left:626.5px;top:560.5px;color:#98c040;transform:scaleX(0.82)">Icoil</div>
<div class="big" style="left:552.3px;top:628.2px;color:#30c0d0;transform:scaleX(0.8)">Id</div>

<!-- gap column -->
<div class="a" style="left:1279px;top:21px;width:10px;height:686px;background:#2d2d2d"></div>


<!-- right panel -->
<div id="rp"></div>
<div class="a" style="left:1290px;top:21px;width:106px;text-align:center;font-size:11.5px;font-weight:bold;color:#f0f0f0;line-height:14px;padding-top:0px;letter-spacing:0.3px">Add New...</div>
<div class="rbtn" style="left:1296px;top:38.5px">Cursors</div>
<div class="rbtn" style="left:1347px;top:38.5px">Callout</div>
<div class="rbtn" style="left:1296px;top:71px">Measure</div>
<div class="rbtn" style="left:1347px;top:71px">Search</div>
<div class="rbtn" style="left:1296px;top:103.5px;line-height:11px;padding-top:1px;font-size:10.8px">Results<br>Table</div>
<div class="rbtn" style="left:1347px;top:103.5px">Plot</div>
<div class="a" style="left:1292px;top:133.8px;width:102px;height:1px;background:#4a4a4a"></div>
<div class="rbtn" style="left:1296px;top:139.5px"></div>
<svg style="left:0;top:0" width="1429" height="767"><g fill="none" stroke="#d0d0d0" stroke-width="1.2">
 <rect x="1309.5" y="143.5" width="17" height="16" stroke-dasharray="2 2"/>
 <circle cx="1320" cy="150" r="4" fill="#2f2f2f"/>
 <line x1="1317" y1="153" x2="1313" y2="157"/>
 </g><path d="M1323 154 L1327 163 L1328 159 L1331 160Z" fill="#d0d0d0"/></svg>
<div class="rbtn" style="left:1347px;top:139.5px">More...</div>
<div class="a" style="left:1292px;top:170.8px;width:102px;height:1px;background:#4a4a4a"></div>

<div class="meas" style="top:181.3px"><div class="mh">Meas 1</div><div class="mb">Eon'<br>Eon:<span class="v" style="top:13.8px">3.190 mJ</span></div></div>
<div class="meas" style="top:227.3px"><div class="mh">Meas 2</div><div class="mb">Eoff'<br>Eoff:<span class="v" style="top:13.8px">1.666 mJ</span></div></div>
<div class="meas" style="top:273.5px"><div class="mh">Meas 3</div><div class="mb">Vpeak'<br>Vpeak:<span class="v" style="top:13.8px">835.2 V</span></div></div>
<div class="meas" style="top:319.8px"><div class="mh" style="background:#080808">Meas 4</div><div class="mb">Ipeak'<br>Ipeak:<span class="v" style="top:13.8px">170.5 A</span></div></div>
<div class="meas" style="top:366px"><div class="mh">Meas 5</div><div class="mb">Amplitude<br>µ': 107.7 A</div></div>
<div class="meas" style="top:412px"><div class="mh">Meas 6</div><div class="mb">Amplitude<br>µ': 595.3 V</div></div>
<svg style="left:0;top:0" width="1429" height="767">
 <g id="bdg">
 </g>
</svg>
<svg style="left:0;top:0" width="1429" height="767"><path d="M1357 184.1 H1386 Q1390 184.1 1390 188.1 Q1390 192.1 1386 192.1 H1357 Q1353 192.1 1353 188.1 Q1353 184.1 1357 184.1Z" fill="#7a7a7a"/><path d="M1357 184.1 H1377 L1371 192.1 H1357 Q1353 192.1 1353 188.1 Q1353 184.1 1357 184.1Z" fill="#e8304c"/><text x="1362" y="190.8" font-size="7.5" fill="#fff" text-anchor="middle" font-family="Liberation Sans">3</text><text x="1382" y="191.1" font-size="8.5" fill="#333" text-anchor="middle" font-family="Liberation Sans">+</text><path d="M1357 230.1 H1386 Q1390 230.1 1390 234.1 Q1390 238.1 1386 238.1 H1357 Q1353 238.1 1353 234.1 Q1353 230.1 1357 230.1Z" fill="#7a7a7a"/><path d="M1357 230.1 H1377 L1371 238.1 H1357 Q1353 238.1 1353 234.1 Q1353 230.1 1357 230.1Z" fill="#e8304c"/><text x="1362" y="236.8" font-size="7.5" fill="#fff" text-anchor="middle" font-family="Liberation Sans">3</text><text x="1382" y="237.1" font-size="8.5" fill="#333" text-anchor="middle" font-family="Liberation Sans">+</text><path d="M1357 276.3 H1386 Q1390 276.3 1390 280.3 Q1390 284.3 1386 284.3 H1357 Q1353 284.3 1353 280.3 Q1353 276.3 1357 276.3Z" fill="#7a7a7a"/><path d="M1357 276.3 H1377 L1371 284.3 H1357 Q1353 284.3 1353 280.3 Q1353 276.3 1357 276.3Z" fill="#e8304c"/><text x="1362" y="283.0" font-size="7.5" fill="#fff" text-anchor="middle" font-family="Liberation Sans">3</text><text x="1382" y="283.3" font-size="8.5" fill="#333" text-anchor="middle" font-family="Liberation Sans">+</text><path d="M1357 322.6 H1386 Q1390 322.6 1390 326.6 Q1390 330.6 1386 330.6 H1357 Q1353 330.6 1353 326.6 Q1353 322.6 1357 322.6Z" fill="#7a7a7a"/><path d="M1357 322.6 H1377 L1371 330.6 H1357 Q1353 330.6 1353 326.6 Q1353 322.6 1357 322.6Z" fill="#e8304c"/><text x="1362" y="329.3" font-size="7.5" fill="#fff" text-anchor="middle" font-family="Liberation Sans">3</text><text x="1382" y="329.6" font-size="8.5" fill="#333" text-anchor="middle" font-family="Liberation Sans">+</text><rect x="1375" y="368.8" width="15" height="8" rx="4" fill="#80c820"/><text x="1382.5" y="375.5" font-size="7.5" fill="#222" text-anchor="middle" font-family="Liberation Sans">4</text><rect x="1375" y="414.8" width="15" height="8" rx="4" fill="#e8304c"/><text x="1382.5" y="421.5" font-size="7.5" fill="#fff" text-anchor="middle" font-family="Liberation Sans">3</text></svg>

<!-- bottom bar -->
<div class="card" style="left:34.7px;width:63.3px"><div class="ch" style="background:#4a4420;color:#e4dc3c">Ch 1</div><div class="cb">5 V/div<br>&nbsp;<br>1 GHz</div><div class="bw" style="left:51px;top:42px">B<sub style="font-size:5px">w</sub></div></div>
<div class="card" style="left:102px;width:63.5px"><div class="ch" style="background:#22c4d4;color:#103840">Ch 2</div><div class="cb">50 A/div<br>50 Ω&nbsp;&nbsp;&nbsp; DS<br>1 GHz</div><div class="bw" style="left:51px;top:42px">B<sub style="font-size:5px">w</sub></div></div>
<div class="card" style="left:169.4px;width:63.6px"><div class="ch" style="background:#4a2026;color:#f0d8d8">Ch 3</div><div class="cb">100 V/div<br>1 MΩ&nbsp;&nbsp; DS<br>100 MHz</div><div class="bw" style="left:51px;top:42px">B<sub style="font-size:5px">w</sub></div></div>
<div class="card" style="left:237px;width:63.6px"><div class="ch" style="background:#2e3c1e;color:#90d030">Ch 4</div><div class="cb">50 A/div<br>1 MΩ<br>500 MHz</div><div class="bw" style="left:51px;top:42px">B<sub style="font-size:5px">w</sub></div></div>
<div class="card" style="left:304.7px;width:63.5px"><div class="ch" style="background:#4a3018;color:#f09030">Math 1</div><div class="cb">9.7521 k...<br>Ch3*Ch2<br>Meas 1</div></div>
<div class="card" style="left:372.3px;width:63.6px"><div class="ch" style="background:#2e1e3e;color:#ece4f4">Math 2</div><div class="cb">9.7521 k...<br>Ch3*Ch2<br>Meas 2</div></div>

<div class="a" style="left:645.5px;top:710px;width:1px;height:54px;background:#3e3e3e"></div>
<div class="wbtn" style="left:652.5px">Add<br>New<br>Math<i style="background:#b02828"></i></div>
<div class="wbtn" style="left:684.8px">Add<br>New<br>Ref<i style="background:#a0a0a8"></i></div>
<div class="wbtn" style="left:717px">Add<br>New<br>Bus<i style="background:#9040c0"></i></div>
<div class="a" style="left:752px;top:710px;width:1px;height:54px;background:#3e3e3e"></div>
<div class="wbtn" style="left:760.4px;padding-top:24.5px">DVM<i style="background:#3a3a3a"></i></div>
<div class="a" style="left:795.4px;top:710px;width:1px;height:54px;background:#3e3e3e"></div>

<div class="ic" style="left:804px;width:133.6px"><div class="ih">AFG: Arbitrary</div><div class="ib">Freq: 20.9644 kHz<br>Amp: 5 Vpp<br>Offset: 2.5 V</div>
 <div class="a" style="left:91px;top:13px;width:38px;height:38px;border-radius:4px;border:1px solid #9a9a9a;background:linear-gradient(#dedede,#bdbdbd);font-size:10.5px;font-weight:bold;color:#222;text-align:center;line-height:36px">Burst</div></div>
<div class="ic" style="left:942px;width:141px"><div class="ih">Horizontal</div><div class="ib">10 µs/div<br>SR: 12.5 GS/s<br>RL: 1.25 Mpts</div><div class="ib" style="left:79px">100 µs<br>80 ps/pt<br><svg style="position:relative;display:inline-block;vertical-align:-1px;margin-right:3px" width="7" height="9"><path d="M0.6 0.6 H6.4 V6.2 H4.6 L3.5 8.4 L2.4 6.2 H0.6Z" fill="#111" stroke="#e88a20" stroke-width="1.2"/><path d="M2.2 2.2 H4.8 M3.5 2.2 V5.5" stroke="#ccc" stroke-width="0.9"/></svg>10%</div></div>
<div class="ic" style="left:1088.5px;width:111.6px"><div class="ih">Trigger</div><div class="ib">Aux</div><div class="ib" style="left:64px">200 mV</div>
 <svg style="left:45px;top:16px" width="12" height="10"><path d="M1 9 H4 L8 1 H11" fill="none" stroke="#5a5aa8" stroke-width="1.2"/></svg></div>
<div class="ic" style="left:1205.8px;width:105px"><div class="ih">Acquisition</div><div class="ib">Auto,<br>Sample: 12 bits<br>43 Acqs</div><div class="ib" style="left:auto;right:9px">Analyze</div></div>
<div class="a" style="left:1319.3px;top:710px;width:1px;height:54px;background:#3e3e3e"></div>
<div class="a" style="left:1327px;top:710.4px;width:63.6px;height:24px;background:#f0ea00;border-radius:4px;font-size:10px;font-weight:bold;color:#111;text-align:center;line-height:23px">Ready</div>
<div class="a" style="left:1327px;top:739.2px;width:63.6px;height:25.3px;background:#d2d2d2;border-radius:3px;font-size:10.5px;color:#333;text-align:center;line-height:11.5px;padding-top:1px">16 Jan 2023<br>3:31:17 PM</div>
<svg style="left:0;top:0;position:absolute" width="1429" height="767"><g fill="none" stroke="#3a3a3a" stroke-width="1.1">
<path d="M39 745.5 Q39.5 739 43.8 739 Q48.2 739 48.8 746"/><circle cx="43.8" cy="742" r="1.8"/><circle cx="39.6" cy="745.6" r="1.4"/><circle cx="47.8" cy="746.2" r="1.4"/></g></svg>
<svg style="left:0;top:0;position:absolute" width="1429" height="767">
 <path d="M1247.5 45.5 H1271.5 V69Z" fill="#4a4040" fill-opacity="0.72" stroke="#22a8d0" stroke-width="1.3"/>
 <circle cx="1266.6" cy="50" r="2.8" fill="none" stroke="#22a8d0" stroke-width="1.4"/>
 <line x1="1264.6" y1="52" x2="1259.5" y2="57" stroke="#22a8d0" stroke-width="1.8"/>
</svg>
<svg style="left:0;top:0;position:absolute" width="1429" height="767"><g fill="#d8d8d8"><circle cx="1284.1" cy="357.8" r="1.5"/><circle cx="1284.1" cy="364" r="1.5"/><circle cx="1284.1" cy="370.2" r="1.5"/></g></svg>
</body></html>
